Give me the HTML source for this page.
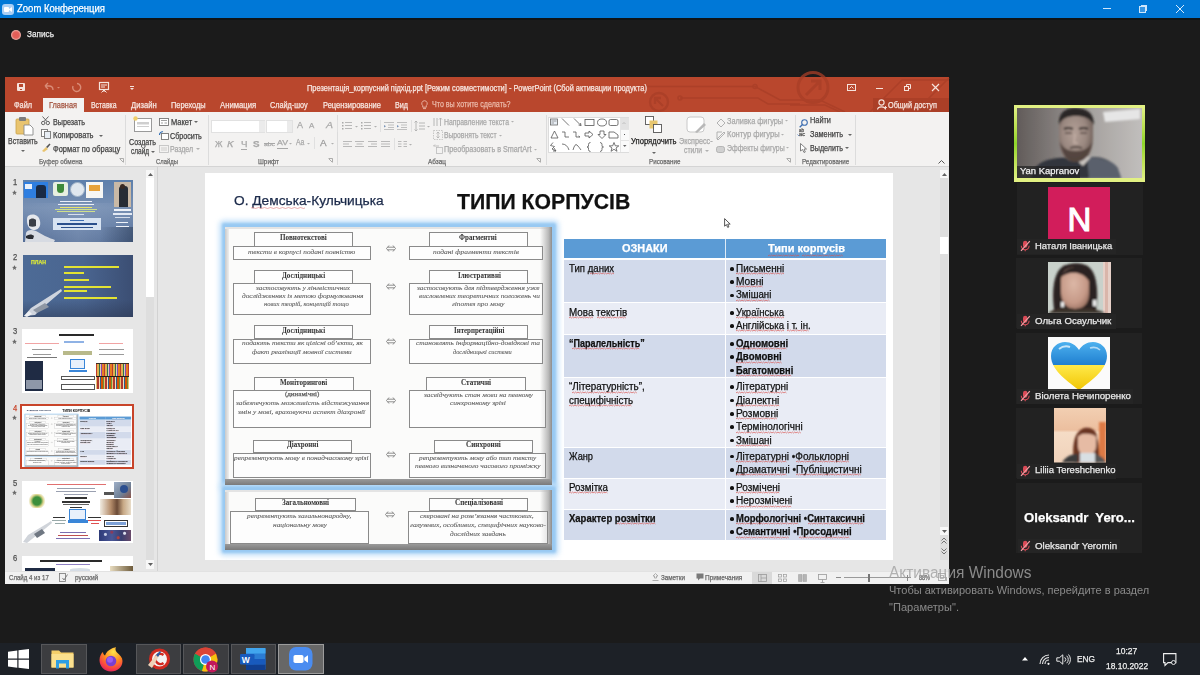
<!DOCTYPE html>
<html><head><meta charset="utf-8">
<style>
*{margin:0;padding:0;box-sizing:border-box}
html,body{width:1200px;height:675px;overflow:hidden;background:#1b1b1b;font-family:"Liberation Sans",sans-serif}
.a{position:absolute}
.t{position:absolute;white-space:nowrap;line-height:1;-webkit-text-stroke:0.25px currentColor}
svg{overflow:visible}
</style></head><body>
<div class="a" style="left:0px;top:0px;width:1200px;height:18px;background:#0078d7"></div>
<div class="a" style="left:0px;top:18px;width:1200px;height:1.5px;background:#0f1417"></div>
<div class="a" style="left:2px;top:3.5px;width:11.5px;height:11px;background:#a9cff5;border-radius:3px"></div>
<div class="a" style="left:4px;top:6.5px;width:5px;height:5px;background:#ffffff;border-radius:1px"></div>
<svg class="a" style="left:9px;top:6.5px;" width="3" height="5" viewBox="0 0 3 5"><path d="M0 2 L3 0 L3 5 L0 3Z" fill="#ffffff"/></svg>
<div class="t" style="left:17.00px;top:4.37px;font-size:10.20px;color:#ffffff;font-family:'Liberation Sans',sans-serif;transform:scaleX(0.9336);transform-origin:0 0;">Zoom Конференция</div>
<div class="a" style="left:1103px;top:8px;width:8px;height:1px;background:#cfe6fb"></div>
<div class="a" style="left:1139px;top:6px;width:7px;height:7px;border:1px solid #cfe6fb;background:rgba(160,205,248,.35)"></div>
<div class="a" style="left:1141px;top:5px;width:6px;height:1px;background:#cfe6fb"></div>
<div class="a" style="left:1146px;top:5px;width:1px;height:6px;background:#cfe6fb"></div>
<svg class="a" style="left:1176px;top:5px;" width="8" height="8" viewBox="0 0 8 8"><path d="M0 0 L8 8 M8 0 L0 8" stroke="#d6eafc" stroke-width="1"/></svg>
<div class="a" style="left:10.5px;top:29.5px;width:10px;height:10px;background:radial-gradient(circle at 50% 50%,#e25a55 0%,#e2625c 45%,#f3c4bd 75%,#7a3a36 100%);border-radius:50%"></div>
<div class="t" style="left:27.30px;top:29.88px;font-size:9.00px;color:#ececec;font-family:'Liberation Sans',sans-serif;transform:scaleX(0.9143);transform-origin:0 0;">Запись</div>
<div class="a" style="left:5px;top:77px;width:944px;height:507px;background:#e6e6e6"></div>
<div class="a" style="left:5px;top:77px;width:944px;height:35px;background:#b9472d"></div>
<svg class="a" style="left:640px;top:77px;" width="309" height="35" viewBox="0 0 309 35">
<g fill="none" stroke="#a83e27" stroke-width="1.6" opacity="0.75">
<path d="M0 9.5 H115 L140 23 H180 L205 35"/>
<path d="M40 21 H118 L128 27 H160"/>
<path d="M150 28 H185 L200 35"/>
<circle cx="173" cy="10.5" r="15" stroke-width="3"/>
<path d="M166 18 L180 4 M171 4 H180 V13" stroke-width="3"/>
<circle cx="19" cy="25" r="9" stroke-width="2.4"/>
<path d="M23 29 L15 21 M15 27 V21 H21" stroke-width="2.4"/>
<path d="M230 35 L262 3 H309"/>
<path d="M275 35 L309 1"/>
<circle cx="115" cy="9.5" r="2"/><circle cx="40" cy="21" r="2"/>
</g></svg>
<div class="a" style="left:17px;top:83px;width:8px;height:8px;background:#f6e3dc;border-radius:1px"></div>
<div class="a" style="left:19px;top:84px;width:4px;height:3px;background:#b9472d"></div>
<div class="a" style="left:19px;top:88px;width:4px;height:3px;background:#b9472d;border:1px solid #f6e3dc"></div>
<svg class="a" style="left:43px;top:82px;" width="18" height="10" viewBox="0 0 18 10"><path d="M2 4 H6 C9 4 10 6 10 8 M2 4 L5 1 M2 4 L5 7" fill="none" stroke="#d98c77" stroke-width="1.3"/><path d="M14 5 h3 l-1.5 1.5z" fill="#d98c77"/></svg>
<svg class="a" style="left:71px;top:82px;" width="10" height="10" viewBox="0 0 10 10"><path d="M6 1.5 A4 4 0 1 1 2 4" fill="none" stroke="#d98c77" stroke-width="1.4"/></svg>
<svg class="a" style="left:99px;top:82px;" width="10" height="11" viewBox="0 0 10 11"><rect x="0.5" y="0.5" width="9" height="7" fill="none" stroke="#f6e3dc" stroke-width="1.2"/><path d="M2 3 h6 M2 5 h4 M5 8 v2 M2.5 10.5 l2.5-2.5 2.5 2.5" stroke="#f6e3dc" stroke-width="1" fill="none"/></svg>
<div class="a" style="left:130px;top:86px;width:4px;height:1px;background:#f6e3dc"></div>
<svg class="a" style="left:130px;top:88px;" width="4" height="2" viewBox="0 0 4 2"><path d="M0 0 H4 L2 2Z" fill="#f6e3dc"/></svg>
<div class="t" style="left:307.00px;top:84.47px;font-size:8.30px;color:#f7e6e0;font-family:'Liberation Sans',sans-serif;transform:scaleX(0.8946);transform-origin:0 0;">Презентація_корпусний підхід.ppt [Режим совместимости] - PowerPoint (Сбой активации продукта)</div>
<svg class="a" style="left:847px;top:84px;" width="9" height="7" viewBox="0 0 9 7"><rect x="0.5" y="0.5" width="8" height="6" fill="none" stroke="#f6e3dc"/><path d="M2.5 4.5 L4.5 2.5 L6.5 4.5" stroke="#f6e3dc" fill="none"/></svg>
<div class="a" style="left:876px;top:88px;width:7px;height:1px;background:#f6e3dc"></div>
<svg class="a" style="left:904px;top:84px;" width="7" height="7" viewBox="0 0 7 7"><rect x="0.5" y="2.5" width="4" height="4" fill="none" stroke="#f6e3dc"/><path d="M2.5 2.5 V0.5 H6.5 V4.5 H4.5" fill="none" stroke="#f6e3dc"/></svg>
<svg class="a" style="left:932px;top:84px;" width="7" height="7" viewBox="0 0 7 7"><path d="M0 0 L7 7 M7 0 L0 7" stroke="#f6e3dc" stroke-width="1.2"/></svg>
<div class="a" style="left:873px;top:98px;width:76px;height:14px;background:#ab3f27"></div>
<svg class="a" style="left:877px;top:99px;" width="10" height="11" viewBox="0 0 10 11"><circle cx="4.5" cy="3.5" r="2.6" fill="none" stroke="#f6e3dc" stroke-width="1.1"/><path d="M0.5 10.5 C1 7 8 7 8.5 10.5" fill="none" stroke="#f6e3dc" stroke-width="1.1"/><path d="M7 8.5 h3 M8.5 7 v3" stroke="#f6e3dc" stroke-width="0.9"/></svg>
<div class="t" style="left:888.00px;top:101.02px;font-size:8.60px;color:#f7e6e0;font-family:'Liberation Sans',sans-serif;transform:scaleX(0.8480);transform-origin:0 0;">Общий доступ</div>
<div class="a" style="left:43px;top:98px;width:41px;height:14px;background:#f3f2f1"></div>
<div class="t" style="left:13.90px;top:100.97px;font-size:8.30px;color:#f7e6e0;font-family:'Liberation Sans',sans-serif;transform:scaleX(0.8870);transform-origin:0 0;">Файл</div>
<div class="t" style="left:49.30px;top:100.97px;font-size:8.30px;color:#a4533f;font-family:'Liberation Sans',sans-serif;transform:scaleX(0.8863);transform-origin:0 0;">Главная</div>
<div class="t" style="left:91.20px;top:100.97px;font-size:8.30px;color:#f7e6e0;font-family:'Liberation Sans',sans-serif;transform:scaleX(0.8298);transform-origin:0 0;">Вставка</div>
<div class="t" style="left:131.20px;top:100.97px;font-size:8.30px;color:#f7e6e0;font-family:'Liberation Sans',sans-serif;transform:scaleX(0.9176);transform-origin:0 0;">Дизайн</div>
<div class="t" style="left:171.20px;top:100.97px;font-size:8.30px;color:#f7e6e0;font-family:'Liberation Sans',sans-serif;transform:scaleX(0.8913);transform-origin:0 0;">Переходы</div>
<div class="t" style="left:220.30px;top:100.97px;font-size:8.30px;color:#f7e6e0;font-family:'Liberation Sans',sans-serif;transform:scaleX(0.9291);transform-origin:0 0;">Анимация</div>
<div class="t" style="left:270.40px;top:100.97px;font-size:8.30px;color:#f7e6e0;font-family:'Liberation Sans',sans-serif;transform:scaleX(0.8738);transform-origin:0 0;">Слайд-шоу</div>
<div class="t" style="left:322.50px;top:100.97px;font-size:8.30px;color:#f7e6e0;font-family:'Liberation Sans',sans-serif;transform:scaleX(0.9034);transform-origin:0 0;">Рецензирование</div>
<div class="t" style="left:394.50px;top:100.97px;font-size:8.30px;color:#f7e6e0;font-family:'Liberation Sans',sans-serif;transform:scaleX(0.8658);transform-origin:0 0;">Вид</div>
<svg class="a" style="left:421px;top:100px;" width="7" height="10" viewBox="0 0 7 10"><path d="M3.5 0.7 A2.8 2.8 0 0 1 5.3 5.6 V7.2 H1.7 V5.6 A2.8 2.8 0 0 1 3.5 0.7Z M2 8.6 H5" fill="none" stroke="#eab8a8" stroke-width="0.9"/></svg>
<div class="t" style="left:432.00px;top:100.47px;font-size:8.30px;color:#eab8a8;font-family:'Liberation Sans',sans-serif;transform:scaleX(0.8566);transform-origin:0 0;">Что вы хотите сделать?</div>
<div class="a" style="left:5px;top:112px;width:944px;height:55px;background:#f3f2f1;border-bottom:1px solid #d4d4d4"></div>
<div class="a" style="left:125px;top:115px;width:1px;height:50px;background:#dcdcdc"></div>
<div class="a" style="left:208px;top:115px;width:1px;height:50px;background:#dcdcdc"></div>
<div class="a" style="left:337px;top:115px;width:1px;height:50px;background:#dcdcdc"></div>
<div class="a" style="left:546px;top:115px;width:1px;height:50px;background:#dcdcdc"></div>
<div class="a" style="left:795px;top:115px;width:1px;height:50px;background:#dcdcdc"></div>
<div class="a" style="left:855px;top:115px;width:1px;height:50px;background:#dcdcdc"></div>
<div class="t" style="left:38.70px;top:158.27px;font-size:7.60px;color:#6a6a6a;font-family:'Liberation Sans',sans-serif;transform:scaleX(0.8385);transform-origin:0 0;">Буфер обмена</div>
<div class="t" style="left:155.90px;top:158.27px;font-size:7.60px;color:#6a6a6a;font-family:'Liberation Sans',sans-serif;transform:scaleX(0.7740);transform-origin:0 0;">Слайды</div>
<div class="t" style="left:257.50px;top:158.27px;font-size:7.60px;color:#6a6a6a;font-family:'Liberation Sans',sans-serif;transform:scaleX(0.8398);transform-origin:0 0;">Шрифт</div>
<div class="t" style="left:428.00px;top:158.27px;font-size:7.60px;color:#6a6a6a;font-family:'Liberation Sans',sans-serif;transform:scaleX(0.8443);transform-origin:0 0;">Абзац</div>
<div class="t" style="left:649.40px;top:158.27px;font-size:7.60px;color:#6a6a6a;font-family:'Liberation Sans',sans-serif;transform:scaleX(0.8204);transform-origin:0 0;">Рисование</div>
<div class="t" style="left:801.70px;top:158.27px;font-size:7.60px;color:#6a6a6a;font-family:'Liberation Sans',sans-serif;transform:scaleX(0.8170);transform-origin:0 0;">Редактирование</div>
<svg class="a" style="left:119px;top:158px;" width="5" height="5" viewBox="0 0 5 5"><path d="M0.5 0.5 H4.5 V4.5 M1 1 L4 4" fill="none" stroke="#9a9a9a" stroke-width="0.8"/></svg>
<svg class="a" style="left:328px;top:158px;" width="5" height="5" viewBox="0 0 5 5"><path d="M0.5 0.5 H4.5 V4.5 M1 1 L4 4" fill="none" stroke="#9a9a9a" stroke-width="0.8"/></svg>
<svg class="a" style="left:536px;top:158px;" width="5" height="5" viewBox="0 0 5 5"><path d="M0.5 0.5 H4.5 V4.5 M1 1 L4 4" fill="none" stroke="#9a9a9a" stroke-width="0.8"/></svg>
<svg class="a" style="left:786px;top:158px;" width="5" height="5" viewBox="0 0 5 5"><path d="M0.5 0.5 H4.5 V4.5 M1 1 L4 4" fill="none" stroke="#9a9a9a" stroke-width="0.8"/></svg>
<svg class="a" style="left:15px;top:116px;" width="20" height="20" viewBox="0 0 20 20"><rect x="1" y="3" width="13" height="15" rx="1" fill="#e9c46f" stroke="#c9a24a" stroke-width="0.8"/><rect x="4" y="1" width="7" height="4" rx="1" fill="#7d7d7d"/><path d="M9 9 H15 L18 12 V19 H9Z" fill="#fff" stroke="#8a8a8a" stroke-width="0.9"/></svg>
<div class="t" style="left:8.30px;top:138.26px;font-size:8.20px;color:#444444;font-family:'Liberation Sans',sans-serif;transform:scaleX(0.8545);transform-origin:0 0;">Вставить</div>
<svg class="a" style="left:21px;top:150px;" width="4" height="2" viewBox="0 0 4 2"><path d="M0 0 H4 L2 2Z" fill="#666"/></svg>
<svg class="a" style="left:41px;top:116px;" width="9" height="9" viewBox="0 0 9 9"><circle cx="2.2" cy="7" r="1.7" fill="none" stroke="#555" stroke-width="0.9"/><circle cx="6.8" cy="7" r="1.7" fill="none" stroke="#555" stroke-width="0.9"/><path d="M3 5.5 L7.5 0.5 M6 5.5 L1.5 0.5" stroke="#555" stroke-width="0.9"/></svg>
<div class="t" style="left:52.70px;top:118.56px;font-size:8.20px;color:#444444;font-family:'Liberation Sans',sans-serif;transform:scaleX(0.8774);transform-origin:0 0;">Вырезать</div>
<svg class="a" style="left:41px;top:129px;" width="10" height="10" viewBox="0 0 10 10"><rect x="0.5" y="0.5" width="6" height="7" fill="#fff" stroke="#777" stroke-width="0.9"/><rect x="3.5" y="2.5" width="6" height="7" fill="#e8eef5" stroke="#777" stroke-width="0.9"/></svg>
<div class="t" style="left:52.70px;top:132.26px;font-size:8.20px;color:#444444;font-family:'Liberation Sans',sans-serif;transform:scaleX(0.9196);transform-origin:0 0;">Копировать</div>
<svg class="a" style="left:99px;top:135px;" width="4" height="2" viewBox="0 0 4 2"><path d="M0 0 H4 L2 2Z" fill="#666"/></svg>
<svg class="a" style="left:41px;top:143px;" width="10" height="9" viewBox="0 0 10 9"><path d="M1 8 L5 4 L7 6 L3 9Z" fill="#e9c46f"/><path d="M5 4 L8.5 0.5 L9.5 1.5 L6.5 5" fill="#555"/></svg>
<div class="t" style="left:52.70px;top:146.26px;font-size:8.20px;color:#444444;font-family:'Liberation Sans',sans-serif;transform:scaleX(0.9153);transform-origin:0 0;">Формат по образцу</div>
<svg class="a" style="left:133px;top:116px;" width="20" height="17" viewBox="0 0 20 17"><rect x="1.5" y="2.5" width="17" height="13" fill="#fff" stroke="#9a9a9a" stroke-width="1"/><rect x="4" y="6" width="12" height="2.5" fill="#cfcfcf"/><rect x="4" y="10" width="12" height="1" fill="#cfcfcf"/><circle cx="2.5" cy="2.5" r="2.2" fill="#f0cf6a"/></svg>
<div class="t" style="left:128.80px;top:138.56px;font-size:8.20px;color:#444444;font-family:'Liberation Sans',sans-serif;transform:scaleX(0.8696);transform-origin:0 0;">Создать</div>
<div class="t" style="left:130.90px;top:148.36px;font-size:8.20px;color:#444444;font-family:'Liberation Sans',sans-serif;transform:scaleX(0.7935);transform-origin:0 0;">слайд</div>
<svg class="a" style="left:151px;top:151.3px;" width="4" height="2" viewBox="0 0 4 2"><path d="M0 0 H4 L2 2Z" fill="#666"/></svg>
<svg class="a" style="left:159px;top:118px;" width="10" height="8" viewBox="0 0 10 8"><rect x="0.5" y="0.5" width="9" height="7" fill="#fff" stroke="#777" stroke-width="0.9"/><path d="M2 2.5 H8 M2 5 H4 M5.5 5 H8" stroke="#888" stroke-width="0.8"/></svg>
<div class="t" style="left:170.80px;top:118.66px;font-size:8.20px;color:#444444;font-family:'Liberation Sans',sans-serif;transform:scaleX(0.9135);transform-origin:0 0;">Макет</div>
<svg class="a" style="left:194px;top:121.3px;" width="4" height="2" viewBox="0 0 4 2"><path d="M0 0 H4 L2 2Z" fill="#666"/></svg>
<svg class="a" style="left:159px;top:131px;" width="10" height="9" viewBox="0 0 10 9"><rect x="2.5" y="2.5" width="7" height="6" fill="#fff" stroke="#777" stroke-width="0.9"/><path d="M0.5 4 A3 3 0 0 1 4 0.8" fill="none" stroke="#2f6db5" stroke-width="1.1"/></svg>
<div class="t" style="left:170.40px;top:132.56px;font-size:8.20px;color:#444444;font-family:'Liberation Sans',sans-serif;transform:scaleX(0.8752);transform-origin:0 0;">Сбросить</div>
<svg class="a" style="left:159px;top:145px;" width="10" height="8" viewBox="0 0 10 8"><rect x="0.5" y="0.5" width="9" height="7" fill="none" stroke="#c4c4c4" stroke-width="0.9"/><path d="M2 3 H8 M2 5 H8" stroke="#c4c4c4" stroke-width="0.8"/></svg>
<div class="t" style="left:170.40px;top:145.76px;font-size:8.20px;color:#a8a8a8;font-family:'Liberation Sans',sans-serif;transform:scaleX(0.8523);transform-origin:0 0;">Раздел</div>
<svg class="a" style="left:196px;top:148px;" width="4" height="2" viewBox="0 0 4 2"><path d="M0 0 H4 L2 2Z" fill="#b0b0b0"/></svg>
<div class="a" style="left:211px;top:119.5px;width:54px;height:13px;background:#fff;border:1px solid #e1e1e1"></div>
<div class="a" style="left:259px;top:120.5px;width:5.5px;height:11px;background:#ebebeb"></div>
<div class="a" style="left:266px;top:119.5px;width:26.5px;height:13px;background:#fff;border:1px solid #e1e1e1"></div>
<div class="a" style="left:286.5px;top:120.5px;width:5.5px;height:11px;background:#ebebeb"></div>
<div class="t" style="left:296.50px;top:121.38px;font-size:9.00px;color:#a8a8a8;font-family:'Liberation Sans',sans-serif;transform:scaleX(0.9995);transform-origin:0 0;">A</div>
<div class="t" style="left:308.70px;top:122.23px;font-size:8.00px;color:#a8a8a8;font-family:'Liberation Sans',sans-serif;transform:scaleX(0.9932);transform-origin:0 0;">A</div>
<div class="t" style="left:326.00px;top:121.38px;font-size:9.00px;color:#a8a8a8;font-family:'Liberation Sans',sans-serif;transform:scaleX(1.1660);transform-origin:0 0;font-style:italic;">A</div>
<div class="t" style="left:214.50px;top:139.55px;font-size:8.80px;color:#a8a8a8;font-family:'Liberation Sans',sans-serif;transform:scaleX(0.9230);transform-origin:0 0;">Ж</div>
<div class="t" style="left:226.50px;top:139.55px;font-size:8.80px;color:#a8a8a8;font-family:'Liberation Sans',sans-serif;font-style:italic;transform:scaleX(1.2533);transform-origin:0 0;">К</div>
<div class="t" style="left:240.50px;top:139.55px;font-size:8.80px;color:#a8a8a8;font-family:'Liberation Sans',sans-serif;transform:scaleX(1.1083);transform-origin:0 0;">Ч</div>
<div class="t" style="left:253.00px;top:139.55px;font-size:8.80px;color:#a8a8a8;font-family:'Liberation Sans',sans-serif;font-weight:bold;transform:scaleX(1.1073);transform-origin:0 0;">S</div>
<div class="a" style="left:241px;top:148.5px;width:6px;height:0.8px;background:#a8a8a8"></div>
<div class="t" style="left:263.50px;top:140.75px;font-size:6.20px;color:#a8a8a8;font-family:'Liberation Sans',sans-serif;transform:scaleX(1.1004);transform-origin:0 0;">abc</div>
<div class="a" style="left:263.5px;top:143px;width:11px;height:0.7px;background:#a8a8a8"></div>
<div class="t" style="left:276.50px;top:138.91px;font-size:7.20px;color:#a8a8a8;font-family:'Liberation Sans',sans-serif;transform:scaleX(1.2127);transform-origin:0 0;">AV</div>
<div class="a" style="left:276.5px;top:147.5px;width:11px;height:0.7px;background:#a8a8a8"></div>
<div class="t" style="left:295.60px;top:139.46px;font-size:8.20px;color:#a8a8a8;font-family:'Liberation Sans',sans-serif;transform:scaleX(0.8375);transform-origin:0 0;">Aa</div>
<div class="a" style="left:314.4px;top:137px;width:1px;height:12px;background:#e0e0e0"></div>
<div class="t" style="left:319.70px;top:137.76px;font-size:9.50px;color:#9a9a9a;font-family:'Liberation Sans',sans-serif;transform:scaleX(1.0415);transform-origin:0 0;">A</div>
<svg class="a" style="left:289px;top:143.3px;" width="3" height="1.5" viewBox="0 0 3 1.5"><path d="M0 0 H3 L1.5 1.5Z" fill="#b0b0b0"/></svg>
<svg class="a" style="left:307px;top:143.3px;" width="3" height="1.5" viewBox="0 0 3 1.5"><path d="M0 0 H3 L1.5 1.5Z" fill="#b0b0b0"/></svg>
<svg class="a" style="left:331px;top:143.3px;" width="3" height="1.5" viewBox="0 0 3 1.5"><path d="M0 0 H3 L1.5 1.5Z" fill="#b0b0b0"/></svg>
<svg class="a" style="left:342px;top:122px;" width="10" height="8" viewBox="0 0 10 8"><rect x="0" y="0" width="1.5" height="1.5" fill="#a9a9a9"/><rect x="3" y="0" width="7" height="1" fill="#b9b9b9"/><rect x="0" y="3" width="1.5" height="1.5" fill="#a9a9a9"/><rect x="3" y="3" width="7" height="1" fill="#b9b9b9"/><rect x="0" y="6" width="1.5" height="1.5" fill="#a9a9a9"/><rect x="3" y="6" width="7" height="1" fill="#b9b9b9"/></svg>
<svg class="a" style="left:361px;top:122px;" width="10" height="8" viewBox="0 0 10 8"><rect x="0" y="0" width="1.5" height="1.5" fill="#a9a9a9"/><rect x="3" y="0" width="7" height="1" fill="#b9b9b9"/><rect x="0" y="3" width="1.5" height="1.5" fill="#a9a9a9"/><rect x="3" y="3" width="7" height="1" fill="#b9b9b9"/><rect x="0" y="6" width="1.5" height="1.5" fill="#a9a9a9"/><rect x="3" y="6" width="7" height="1" fill="#b9b9b9"/></svg>
<svg class="a" style="left:355px;top:126px;" width="3" height="1.5" viewBox="0 0 3 1.5"><path d="M0 0 H3 L1.5 1.5Z" fill="#b0b0b0"/></svg>
<svg class="a" style="left:374px;top:126px;" width="3" height="1.5" viewBox="0 0 3 1.5"><path d="M0 0 H3 L1.5 1.5Z" fill="#b0b0b0"/></svg>
<svg class="a" style="left:384.4px;top:122px;" width="10" height="8" viewBox="0 0 10 8"><path d="M0 0.5 H10 M4 3 H10 M4 5.5 H10 M0 7.5 H10" stroke="#b9b9b9" stroke-width="0.9"/><path d="M0 3 L2 4.3 L0 5.6Z" fill="#7a95b8"/></svg>
<svg class="a" style="left:397px;top:122px;" width="10" height="8" viewBox="0 0 10 8"><path d="M0 0.5 H10 M4 3 H10 M4 5.5 H10 M0 7.5 H10" stroke="#b9b9b9" stroke-width="0.9"/><path d="M0 3 L2 4.3 L0 5.6Z" fill="#7a95b8"/></svg>
<div class="a" style="left:410.5px;top:120px;width:1px;height:12px;background:#e0e0e0"></div>
<div class="a" style="left:380px;top:120px;width:1px;height:12px;background:#e0e0e0"></div>
<div class="a" style="left:337px;top:120px;width:1px;height:12px;background:#e0e0e0"></div>
<svg class="a" style="left:414px;top:120px;" width="11" height="12" viewBox="0 0 11 12"><path d="M2 1 V11 M0.5 2.5 L2 1 L3.5 2.5 M0.5 9.5 L2 11 L3.5 9.5 M5 3 H11 M5 6 H11 M5 9 H11" stroke="#b0b0b0" stroke-width="0.9" fill="none"/></svg>
<svg class="a" style="left:427px;top:126px;" width="3" height="1.5" viewBox="0 0 3 1.5"><path d="M0 0 H3 L1.5 1.5Z" fill="#b0b0b0"/></svg>
<svg class="a" style="left:342.5px;top:141px;" width="8.5" height="6.5" viewBox="0 0 8.5 6.5"><path d="M0 0.5 H9 M0 3 H6 M0 5.5 H9" stroke="#b9b9b9" stroke-width="1"/></svg>
<svg class="a" style="left:355px;top:141px;" width="8.5" height="6.5" viewBox="0 0 8.5 6.5"><path d="M0 0.5 H9 M1.5 3 H7.5 M0 5.5 H9" stroke="#b9b9b9" stroke-width="1"/></svg>
<svg class="a" style="left:368px;top:141px;" width="8.5" height="6.5" viewBox="0 0 8.5 6.5"><path d="M0 0.5 H9 M3 3 H9 M0 5.5 H9" stroke="#b9b9b9" stroke-width="1"/></svg>
<svg class="a" style="left:380.5px;top:141px;" width="8.5" height="6.5" viewBox="0 0 8.5 6.5"><path d="M0 0.5 H9 M0 3 H9 M0 5.5 H9" stroke="#b9b9b9" stroke-width="1"/></svg>
<div class="a" style="left:393.5px;top:138px;width:1px;height:12px;background:#e0e0e0"></div>
<svg class="a" style="left:397.5px;top:141px;" width="8.5" height="6.5" viewBox="0 0 8.5 6.5"><path d="M0 0.5 H3.5 M5.5 0.5 H9 M0 3 H3.5 M5.5 3 H9 M0 5.5 H3.5 M5.5 5.5 H9" stroke="#b9b9b9" stroke-width="1"/></svg>
<svg class="a" style="left:409px;top:144px;" width="3" height="1.5" viewBox="0 0 3 1.5"><path d="M0 0 H3 L1.5 1.5Z" fill="#b0b0b0"/></svg>
<svg class="a" style="left:433px;top:117px;" width="10" height="10" viewBox="0 0 10 10"><path d="M1 1 V9 M4 1 V9 M7.5 9 V1 M6 2.5 L7.5 1 L9 2.5" stroke="#b0b0b0" stroke-width="0.9" fill="none"/></svg>
<div class="t" style="left:444.40px;top:118.86px;font-size:8.20px;color:#a8a8a8;font-family:'Liberation Sans',sans-serif;transform:scaleX(0.8375);transform-origin:0 0;">Направление текста</div>
<svg class="a" style="left:511px;top:121px;" width="3" height="1.5" viewBox="0 0 3 1.5"><path d="M0 0 H3 L1.5 1.5Z" fill="#b0b0b0"/></svg>
<svg class="a" style="left:433px;top:130px;" width="10" height="10" viewBox="0 0 10 10"><rect x="0.5" y="0.5" width="9" height="9" fill="none" stroke="#bbb" stroke-width="0.8" stroke-dasharray="1.5 1"/><path d="M5 2 V8 M3.5 3.5 L5 2 L6.5 3.5 M3.5 6.5 L5 8 L6.5 6.5" stroke="#b0b0b0" stroke-width="0.8" fill="none"/></svg>
<div class="t" style="left:444.40px;top:132.06px;font-size:8.20px;color:#a8a8a8;font-family:'Liberation Sans',sans-serif;transform:scaleX(0.8235);transform-origin:0 0;">Выровнять текст</div>
<svg class="a" style="left:499px;top:134.5px;" width="3" height="1.5" viewBox="0 0 3 1.5"><path d="M0 0 H3 L1.5 1.5Z" fill="#b0b0b0"/></svg>
<svg class="a" style="left:433px;top:144px;" width="10" height="10" viewBox="0 0 10 10"><rect x="3.5" y="3.5" width="6" height="6" fill="none" stroke="#bbb" stroke-width="0.8"/><path d="M0.5 2 H6 M0.5 2 L2 0.5" stroke="#b0b0b0" stroke-width="0.8" fill="none"/></svg>
<div class="t" style="left:444.40px;top:145.86px;font-size:8.20px;color:#a8a8a8;font-family:'Liberation Sans',sans-serif;transform:scaleX(0.8807);transform-origin:0 0;">Преобразовать в SmartArt</div>
<svg class="a" style="left:533.5px;top:148.5px;" width="3" height="1.5" viewBox="0 0 3 1.5"><path d="M0 0 H3 L1.5 1.5Z" fill="#b0b0b0"/></svg>
<div class="a" style="left:548px;top:116.5px;width:81px;height:36px;background:#fff;border:1px solid #dcdcdc"></div>
<div class="a" style="left:620px;top:117.5px;width:8.5px;height:34px;background:#fafafa;border-left:1px solid #e4e4e4"></div>
<div class="a" style="left:620.5px;top:117.5px;width:8px;height:11px;background:#e2e2e2"></div>
<svg class="a" style="left:622px;top:121.5px;" width="4" height="2.5" viewBox="0 0 4 2.5"><path d="M0.5 2 L2 0.5 L3.5 2" fill="none" stroke="#b5b5b5" stroke-width="0.8"/></svg>
<div class="a" style="left:620.5px;top:128.5px;width:8px;height:0.8px;background:#e4e4e4"></div>
<div class="a" style="left:620.5px;top:139.5px;width:8px;height:0.8px;background:#e4e4e4"></div>
<div class="a" style="left:623.8px;top:133.5px;width:1.2px;height:1.2px;background:#555"></div>
<svg class="a" style="left:622.5px;top:145px;" width="3.5" height="2" viewBox="0 0 3.5 2"><path d="M0 0 H3.5 L1.75 2Z" fill="#666"/></svg>
<svg class="a" style="left:549px;top:117px;" width="70" height="35" viewBox="0 0 70 35">
<rect x="1.5" y="2" width="7" height="6" fill="#e8eef5" stroke="#666" stroke-width="0.8"/><path d="M2.5 4 H7.5 M2.5 6 H5" stroke="#666" stroke-width="0.6"/>
<path d="M13 1.5 L20 8.5" stroke="#555" stroke-width="0.8"/>
<path d="M25 1.5 L32 8.5 M32 8.5 L29.5 8 M32 8.5 L31.5 6" stroke="#555" stroke-width="0.8" fill="none"/>
<rect x="36" y="2.5" width="9" height="6" fill="none" stroke="#555" stroke-width="0.8"/>
<ellipse cx="53" cy="5.5" rx="4.5" ry="3.5" fill="none" stroke="#555" stroke-width="0.8"/>
<rect x="60" y="2.5" width="9" height="6" rx="1.5" fill="none" stroke="#555" stroke-width="0.8"/>
<path d="M2 21 L5.5 14 L9 21Z" fill="none" stroke="#555" stroke-width="0.8"/>
<path d="M13 15 H16 V20 H20" fill="none" stroke="#555" stroke-width="0.8"/>
<path d="M24 15 H27 V20 H31 M31 20 L29.5 19" fill="none" stroke="#555" stroke-width="0.8"/>
<path d="M36 16 H40 V14 L44 17.5 L40 21 V19 H36Z" fill="none" stroke="#555" stroke-width="0.8"/>
<path d="M51 14 H55 V17.5 H57 L53 21.5 L49 17.5 H51Z" fill="none" stroke="#555" stroke-width="0.8"/>
<path d="M60 15 H65 L69 18 V21 H60Z" fill="none" stroke="#555" stroke-width="0.8"/>
<path d="M4 25.5 L1.5 28.5 L5.5 29.5 L3 32 L7 34 M5 31 L7 34 L4 34" fill="none" stroke="#555" stroke-width="0.8"/>
<path d="M13 27 Q18 27 20 33" fill="none" stroke="#555" stroke-width="0.8"/>
<path d="M24 33 Q26 26 28 28 Q30 30 32 33" fill="none" stroke="#555" stroke-width="0.8"/>
<path d="M41.5 25.5 Q39.5 25.5 39.5 27.5 V29 Q39.5 30 38 30 Q39.5 30 39.5 31 V32.5 Q39.5 34.5 41.5 34.5" fill="none" stroke="#555" stroke-width="0.8"/>
<path d="M51 25.5 Q53 25.5 53 27.5 V29 Q53 30 54.5 30 Q53 30 53 31 V32.5 Q53 34.5 51 34.5" fill="none" stroke="#555" stroke-width="0.8"/>
<path d="M65 25.5 L66.3 28.8 L69.8 28.9 L67 31 L68 34.3 L65 32.3 L62 34.3 L63 31 L60.2 28.9 L63.7 28.8Z" fill="none" stroke="#555" stroke-width="0.8"/>
</svg>
<svg class="a" style="left:645px;top:116px;" width="18" height="17" viewBox="0 0 18 17"><rect x="0.5" y="0.5" width="8" height="8" fill="#fff" stroke="#555" stroke-width="0.9"/><rect x="4.5" y="4.5" width="8" height="8" fill="#e7c66f"/><rect x="8.5" y="8.5" width="8" height="8" fill="#fff" stroke="#555" stroke-width="0.9"/></svg>
<div class="t" style="left:631.00px;top:138.36px;font-size:8.20px;color:#1e1e1e;font-family:'Liberation Sans',sans-serif;transform:scaleX(0.9324);transform-origin:0 0;">Упорядочить</div>
<svg class="a" style="left:652px;top:151.5px;" width="4" height="2" viewBox="0 0 4 2"><path d="M0 0 H4 L2 2Z" fill="#666"/></svg>
<svg class="a" style="left:686px;top:116px;" width="22" height="18" viewBox="0 0 22 18"><rect x="1" y="1" width="17" height="15" rx="3" fill="#fff" stroke="#c8c8c8" stroke-width="1"/><path d="M9 16 L18 7 L20 9 L11 17Z" fill="#b8b8b8"/></svg>
<div class="t" style="left:678.70px;top:138.36px;font-size:8.20px;color:#a8a8a8;font-family:'Liberation Sans',sans-serif;transform:scaleX(0.8804);transform-origin:0 0;">Экспресс-</div>
<div class="t" style="left:684.00px;top:147.26px;font-size:8.20px;color:#a8a8a8;font-family:'Liberation Sans',sans-serif;transform:scaleX(0.8256);transform-origin:0 0;">стили</div>
<svg class="a" style="left:705px;top:150.3px;" width="4" height="2" viewBox="0 0 4 2"><path d="M0 0 H4 L2 2Z" fill="#b0b0b0"/></svg>
<svg class="a" style="left:716px;top:118.3px;" width="10" height="9" viewBox="0 0 10 9"><path d="M1 5 L5 1 L9 5 L5 9Z" fill="none" stroke="#aaa" stroke-width="0.9"/></svg>
<div class="t" style="left:726.80px;top:117.66px;font-size:8.20px;color:#a8a8a8;font-family:'Liberation Sans',sans-serif;transform:scaleX(0.8975);transform-origin:0 0;">Заливка фигуры</div>
<svg class="a" style="left:785px;top:120.3px;" width="3" height="1.5" viewBox="0 0 3 1.5"><path d="M0 0 H3 L1.5 1.5Z" fill="#b0b0b0"/></svg>
<svg class="a" style="left:716px;top:131.3px;" width="10" height="9" viewBox="0 0 10 9"><path d="M1 8 L8 1 L9 2 L2 9Z M1 1 H6 M1 1 V8" fill="none" stroke="#aaa" stroke-width="0.9"/></svg>
<div class="t" style="left:726.80px;top:131.06px;font-size:8.20px;color:#a8a8a8;font-family:'Liberation Sans',sans-serif;transform:scaleX(0.9191);transform-origin:0 0;">Контур фигуры</div>
<svg class="a" style="left:781px;top:133.8px;" width="3" height="1.5" viewBox="0 0 3 1.5"><path d="M0 0 H3 L1.5 1.5Z" fill="#b0b0b0"/></svg>
<svg class="a" style="left:716px;top:145.3px;" width="10" height="8" viewBox="0 0 10 8"><rect x="0.5" y="1.5" width="8" height="6" rx="2" fill="#d0d0d0" stroke="#aaa" stroke-width="0.8"/></svg>
<div class="t" style="left:726.80px;top:144.56px;font-size:8.20px;color:#a8a8a8;font-family:'Liberation Sans',sans-serif;transform:scaleX(0.8444);transform-origin:0 0;">Эффекты фигуры</div>
<svg class="a" style="left:786px;top:147.3px;" width="3" height="1.5" viewBox="0 0 3 1.5"><path d="M0 0 H3 L1.5 1.5Z" fill="#b0b0b0"/></svg>
<svg class="a" style="left:799px;top:118.5px;" width="9" height="9" viewBox="0 0 9 9"><circle cx="5.5" cy="3.5" r="2.8" fill="none" stroke="#3c6db0" stroke-width="1.1"/><path d="M3.5 5.5 L0.7 8.3" stroke="#3c6db0" stroke-width="1.3"/></svg>
<div class="t" style="left:810.00px;top:117.26px;font-size:8.20px;color:#444444;font-family:'Liberation Sans',sans-serif;transform:scaleX(0.8975);transform-origin:0 0;">Найти</div>
<div class="t" style="left:799.00px;top:128.69px;font-size:4.50px;color:#555;font-family:'Liberation Sans',sans-serif;transform:scaleX(0.9989);transform-origin:0 0;">ab</div>
<div class="t" style="left:799.00px;top:133.19px;font-size:4.50px;color:#555;font-family:'Liberation Sans',sans-serif;transform:scaleX(1.2624);transform-origin:0 0;">ac</div>
<svg class="a" style="left:797px;top:133.5px;" width="3" height="3" viewBox="0 0 3 3"><path d="M0.5 0.5 L2 2" stroke="#3c6db0" stroke-width="0.7"/></svg>
<div class="t" style="left:810.00px;top:130.86px;font-size:8.20px;color:#444444;font-family:'Liberation Sans',sans-serif;transform:scaleX(0.8956);transform-origin:0 0;">Заменить</div>
<svg class="a" style="left:847.5px;top:133.5px;" width="4" height="2" viewBox="0 0 4 2"><path d="M0 0 H4 L2 2Z" fill="#666"/></svg>
<svg class="a" style="left:800px;top:142.5px;" width="7" height="10" viewBox="0 0 7 10"><path d="M0.5 0.5 L0.5 8 L2.5 6.5 L4 9.5 L5.3 9 L4 6 L6.5 6Z" fill="#fff" stroke="#666" stroke-width="0.8"/></svg>
<div class="t" style="left:810.00px;top:144.56px;font-size:8.20px;color:#444444;font-family:'Liberation Sans',sans-serif;transform:scaleX(0.8723);transform-origin:0 0;">Выделить</div>
<svg class="a" style="left:845px;top:147.0px;" width="4" height="2" viewBox="0 0 4 2"><path d="M0 0 H4 L2 2Z" fill="#666"/></svg>
<svg class="a" style="left:938px;top:160px;" width="7" height="4" viewBox="0 0 7 4"><path d="M0.5 3.5 L3.5 0.5 L6.5 3.5" fill="none" stroke="#555" stroke-width="1"/></svg>
<div class="a" style="left:157px;top:167px;width:1px;height:404px;background:#d2d2d2"></div>
<div class="a" style="left:146px;top:170px;width:8px;height:390px;background:#dedede"></div>
<div class="a" style="left:146px;top:170px;width:8px;height:8px;background:#f7f7f7"></div>
<svg class="a" style="left:147.5px;top:172.5px;" width="5" height="3" viewBox="0 0 5 3"><path d="M0 3 L2.5 0 L5 3Z" fill="#606060"/></svg>
<div class="a" style="left:146px;top:178px;width:8px;height:119px;background:#ffffff"></div>
<div class="a" style="left:146px;top:560px;width:8px;height:9px;background:#f7f7f7"></div>
<svg class="a" style="left:147.5px;top:563px;" width="5" height="3" viewBox="0 0 5 3"><path d="M0 0 L2.5 3 L5 0Z" fill="#606060"/></svg>
<div class="a" style="left:0;top:0;width:160px;height:675px;filter:blur(0.3px)">
<div class="t" style="left:12.80px;top:178.30px;font-size:8.50px;color:#505050;font-family:'Liberation Sans',sans-serif;transform:scaleX(0.8884);transform-origin:0 0;">1</div>
<svg class="a" style="left:12px;top:189.5px;" width="5" height="5" viewBox="0 0 5 5"><path d="M2.5 0 L3.2 1.8 L5 1.9 L3.6 3 L4.1 4.9 L2.5 3.9 L0.9 4.9 L1.4 3 L0 1.9 L1.8 1.8Z" fill="#6a6a6a"/></svg>
<div class="a" style="left:23px;top:180px;width:110px;height:62px;background:linear-gradient(180deg,#5d7fab 0%,#7890b3 45%,#667fa6 75%,#556e96 100%)"></div>
<div class="a" style="left:23px;top:203px;width:110px;height:39px;background:linear-gradient(90deg,rgba(160,180,210,.0),rgba(150,170,200,.35) 50%,rgba(60,80,110,.0))"></div>
<div class="a" style="left:24px;top:182px;width:24px;height:16px;background:#2e7ee0"></div>
<div class="a" style="left:36px;top:185px;width:10px;height:13px;background:#1a2a44;border-radius:3px 3px 0 0"></div>
<div class="a" style="left:25px;top:184px;width:7px;height:5px;background:#e8f0fb"></div>
<div class="a" style="left:53px;top:182px;width:15px;height:14px;background:#e7efe0;border-radius:2px"></div>
<div class="a" style="left:57px;top:184px;width:7px;height:9px;background:#3e8a3a;border-radius:0 0 4px 4px"></div>
<div class="a" style="left:70px;top:182px;width:15px;height:15px;background:#dfe7ef;border-radius:50%;border:1px solid #9fb3c8"></div>
<div class="a" style="left:86px;top:182px;width:17px;height:16px;background:#f7f7f4"></div>
<div class="a" style="left:89px;top:185px;width:11px;height:6px;background:#e8a33a"></div>
<div class="a" style="left:114px;top:182px;width:17px;height:25px;background:#c9b9a6"></div>
<div class="a" style="left:119px;top:186px;width:9px;height:21px;background:#262c35;border-radius:3px 3px 0 0"></div>
<div class="a" style="left:120px;top:184px;width:5px;height:5px;background:#3a2a22;border-radius:50%"></div>
<div class="a" style="left:60px;top:201px;width:32px;height:1.3px;background:#e9eef7"></div>
<div class="a" style="left:58px;top:203.5px;width:36px;height:1.3px;background:#e9eef7"></div>
<div class="a" style="left:60px;top:206.5px;width:32px;height:1.6px;background:#e8e46a"></div>
<div class="a" style="left:55px;top:209px;width:42px;height:1.2px;background:#cfe08a"></div>
<div class="a" style="left:57px;top:211px;width:38px;height:1.2px;background:#cfe08a"></div>
<div class="a" style="left:68px;top:213.5px;width:16px;height:1px;background:#d8e0ec"></div>
<div class="a" style="left:53px;top:218px;width:48px;height:12px;background:#d7e3f2"></div>
<div class="a" style="left:70px;top:219.5px;width:14px;height:1.5px;background:#3a6bb0"></div>
<div class="a" style="left:57px;top:223px;width:40px;height:1.5px;background:#2a4f8c"></div>
<div class="a" style="left:61px;top:226.5px;width:32px;height:1.5px;background:#2a4f8c"></div>
<div class="a" style="left:114px;top:209px;width:17px;height:2px;background:#eef2f8"></div>
<div class="a" style="left:113px;top:213px;width:19px;height:1.5px;background:#e3e9f3"></div>
<div class="a" style="left:115px;top:217px;width:15px;height:1px;background:#d4dcea"></div>
<div class="a" style="left:116px;top:222px;width:12px;height:1.2px;background:#eef2f8"></div>
<div class="a" style="left:116px;top:226px;width:13px;height:1.2px;background:#eef2f8"></div>
<svg class="a" style="left:23px;top:214px;" width="32" height="28" viewBox="0 0 32 28"><path d="M5 2 C10 -1 16 1 17 7 C18 12 16 15 12 16 L10 16 C6 15 4 11 4 7 C4 5 4 3 5 2Z" fill="#e4e7ec"/><path d="M6 6 C8 4 11 4 13 6 L13 12 C11 13 8 13 6 12Z" fill="#3a3f48"/><path d="M2 28 L3 19 C4 16 8 15 13 17 L22 22 C26 24 30 25 32 26 L31 28Z" fill="#d7dbe2"/><path d="M3 22 C6 20 9 20 11 22 L10 25 C7 25 4 25 3 24Z" fill="#2a2d33"/></svg>
<div class="a" style="left:100px;top:227px;width:33px;height:15px;background:linear-gradient(90deg,rgba(40,55,80,0),rgba(40,55,80,.5))"></div>
<div class="t" style="left:12.80px;top:253.30px;font-size:8.50px;color:#505050;font-family:'Liberation Sans',sans-serif;transform:scaleX(0.8884);transform-origin:0 0;">2</div>
<svg class="a" style="left:12px;top:264.5px;" width="5" height="5" viewBox="0 0 5 5"><path d="M2.5 0 L3.2 1.8 L5 1.9 L3.6 3 L4.1 4.9 L2.5 3.9 L0.9 4.9 L1.4 3 L0 1.9 L1.8 1.8Z" fill="#6a6a6a"/></svg>
<div class="a" style="left:23px;top:255px;width:110px;height:62px;background:linear-gradient(90deg,#4d6b96 0%,#4a6590 55%,#3b4e73 100%)"></div>
<div class="a" style="left:23px;top:300px;width:110px;height:17px;background:linear-gradient(180deg,rgba(30,40,60,0),rgba(40,50,75,.45))"></div>
<div class="t" style="left:31.00px;top:259.84px;font-size:5.50px;color:#d8e63a;font-family:'Liberation Sans',sans-serif;font-weight:bold;transform:scaleX(0.9520);transform-origin:0 0;">ПЛАН</div>
<div class="a" style="left:63.5px;top:265.5px;width:55.5px;height:2.2px;background:#e3e332"></div>
<div class="a" style="left:63.5px;top:272.3px;width:20.200000000000003px;height:2.2px;background:#e3e332"></div>
<div class="a" style="left:63.5px;top:279px;width:25.5px;height:2.2px;background:#e3e332"></div>
<div class="a" style="left:63.5px;top:285.8px;width:47.7px;height:2.2px;background:#e3e332"></div>
<div class="a" style="left:63.5px;top:289.7px;width:23.900000000000006px;height:2.2px;background:#e3e332"></div>
<div class="a" style="left:63.5px;top:297.2px;width:53.900000000000006px;height:2.2px;background:#e3e332"></div>
<svg class="a" style="left:23px;top:288px;" width="40" height="29" viewBox="0 0 40 29"><path d="M1 28 L8 20 L30 6 L38 1 L39 3 L32 9 L18 21 L12 27Z" fill="#cfd5de"/><path d="M10 22 L22 15 L26 19 L14 25Z" fill="#8d96a3"/><path d="M1 28 L6 23 L9 26 L4 29Z" fill="#eef0f3"/></svg>
<div class="t" style="left:12.80px;top:327.30px;font-size:8.50px;color:#505050;font-family:'Liberation Sans',sans-serif;transform:scaleX(0.8884);transform-origin:0 0;">3</div>
<svg class="a" style="left:12px;top:338.5px;" width="5" height="5" viewBox="0 0 5 5"><path d="M2.5 0 L3.2 1.8 L5 1.9 L3.6 3 L4.1 4.9 L2.5 3.9 L0.9 4.9 L1.4 3 L0 1.9 L1.8 1.8Z" fill="#6a6a6a"/></svg>
<div class="a" style="left:21.6px;top:329.4px;width:111.4px;height:63.5px;background:#fff"></div>
<div class="a" style="left:59.4px;top:333.5px;width:34.6px;height:2.5px;background:#2a2a2a"></div>
<div class="a" style="left:25px;top:342.5px;width:34px;height:1.8px;background:#f1a4a4"></div>
<div class="a" style="left:64px;top:341px;width:20px;height:2px;background:#8fb2e5"></div>
<div class="a" style="left:99px;top:342.5px;width:24px;height:1.8px;background:#f1a4a4"></div>
<div class="a" style="left:32px;top:349px;width:20px;height:1px;background:#9a9a9a"></div>
<div class="a" style="left:33px;top:354px;width:18px;height:1px;background:#9a9a9a"></div>
<div class="a" style="left:27px;top:357px;width:30px;height:1px;background:#777"></div>
<div class="a" style="left:99px;top:349px;width:25px;height:1px;background:#9a9a9a"></div>
<div class="a" style="left:99px;top:354px;width:25px;height:1px;background:#9a9a9a"></div>
<div class="a" style="left:63px;top:351px;width:29px;height:4px;background:#b8b98a"></div>
<div class="a" style="left:24.7px;top:361.3px;width:18.3px;height:29.5px;background:#1f2b44"></div>
<div class="a" style="left:26px;top:380px;width:16px;height:9px;background:#8e97a8"></div>
<div class="a" style="left:70.3px;top:359.2px;width:15px;height:10px;background:#e8f0fb;border:1.2px solid #3a86d8"></div>
<div class="a" style="left:69px;top:369.6px;width:17.5px;height:2.5px;background:#3a86d8"></div>
<div class="a" style="left:61px;top:376px;width:33.6px;height:3.7px;background:#fff;border:1px solid #555"></div>
<div class="a" style="left:61px;top:383.5px;width:33.6px;height:6.3px;background:#fff;border:1px solid #555"></div>
<div class="a" style="left:96.2px;top:362.8px;width:32.6px;height:26.4px;background:#3a2c22"></div>
<div class="a" style="left:96.2px;top:363.5px;width:32.6px;height:12px;background:repeating-linear-gradient(90deg,#c0392b 0 1.5px,#e0b050 1.5px 3px,#2f6f4f 3px 4px,#d9d2b0 4px 5.5px,#8e44ad 5.5px 6.5px,#e67e22 6.5px 8px)"></div>
<div class="a" style="left:96.2px;top:376.5px;width:32.6px;height:12px;background:repeating-linear-gradient(90deg,#e8c070 0 1.5px,#b03a2e 1.5px 3px,#f0e0c0 3px 4.5px,#2c5f8a 4.5px 5.5px,#d35400 5.5px 7px,#6d8f3a 7px 8px)"></div>
<div class="a" style="left:96.2px;top:375.5px;width:32.6px;height:1.2px;background:#2a1e16"></div>
</div>
<div class="t" style="left:12.80px;top:403.80px;font-size:8.50px;color:#c8442a;font-family:'Liberation Sans',sans-serif;transform:scaleX(0.8884);transform-origin:0 0;">4</div>
<svg class="a" style="left:12px;top:415px;" width="5" height="5" viewBox="0 0 5 5"><path d="M2.5 0 L3.2 1.8 L5 1.9 L3.6 3 L4.1 4.9 L2.5 3.9 L0.9 4.9 L1.4 3 L0 1.9 L1.8 1.8Z" fill="#6a6a6a"/></svg>
<div class="a" style="left:20.3px;top:404px;width:114.2px;height:65.3px;background:#fff;border:2px solid #c8442a"></div>
<div class="a" style="left:0;top:0;width:160px;height:675px;filter:blur(0.3px)">
<div class="t" style="left:12.80px;top:478.80px;font-size:8.50px;color:#505050;font-family:'Liberation Sans',sans-serif;transform:scaleX(0.8884);transform-origin:0 0;">5</div>
<svg class="a" style="left:12px;top:490.0px;" width="5" height="5" viewBox="0 0 5 5"><path d="M2.5 0 L3.2 1.8 L5 1.9 L3.6 3 L4.1 4.9 L2.5 3.9 L0.9 4.9 L1.4 3 L0 1.9 L1.8 1.8Z" fill="#6a6a6a"/></svg>
<div class="a" style="left:21.6px;top:480.7px;width:111.4px;height:62.7px;background:#fff"></div>
<div class="a" style="left:47px;top:483.6px;width:59px;height:1.8px;background:#e07070"></div>
<div class="a" style="left:57px;top:488px;width:38px;height:1px;background:#9aa0b0"></div>
<div class="a" style="left:56px;top:491px;width:40px;height:1px;background:#9aa0b0"></div>
<div class="a" style="left:64px;top:494px;width:24px;height:1px;background:#9aa0b0"></div>
<div class="a" style="left:65px;top:497px;width:22px;height:1.5px;background:#333"></div>
<div class="a" style="left:62px;top:501px;width:28px;height:1.5px;background:#333"></div>
<div class="a" style="left:63px;top:504px;width:26px;height:1px;background:#666"></div>
<div class="a" style="left:70px;top:506.5px;width:12px;height:1px;background:#333"></div>
<div class="a" style="left:27.8px;top:494px;width:18px;height:13.6px;background:radial-gradient(circle at 50% 50%,#3c8f3c 35%,#d9d28a 55%,#fff 75%)"></div>
<div class="a" style="left:114.3px;top:482.2px;width:16.6px;height:15.6px;background:linear-gradient(135deg,#9fb0c8,#6f7f95 60%,#8c5448)"></div>
<div class="a" style="left:120px;top:485px;width:8px;height:8px;background:#2c4f8f;border-radius:50%"></div>
<div class="a" style="left:104px;top:492px;width:10px;height:2.5px;background:#555"></div>
<div class="a" style="left:99.8px;top:499.3px;width:31.1px;height:16.1px;background:linear-gradient(90deg,#f1ece2,#b48c6a 35%,#6b4a36 55%,#c7a885 75%,#e8dcc8)"></div>
<div class="a" style="left:69.2px;top:509.2px;width:16.6px;height:10.5px;background:#e8f0fb;border:1.2px solid #3a86d8"></div>
<div class="a" style="left:67.5px;top:519.7px;width:20px;height:2.9px;background:#3a86d8"></div>
<div class="a" style="left:53px;top:517px;width:12px;height:1.2px;background:#333"></div>
<div class="a" style="left:52px;top:520px;width:14px;height:1px;background:#9aa"></div>
<div class="a" style="left:55px;top:523px;width:10px;height:1px;background:#9aa"></div>
<div class="a" style="left:88px;top:517px;width:13px;height:1.2px;background:#333"></div>
<div class="a" style="left:88px;top:520px;width:13px;height:1.2px;background:#e05050"></div>
<div class="a" style="left:91px;top:523px;width:8px;height:1.2px;background:#e05050"></div>
<div class="a" style="left:104px;top:520px;width:24.3px;height:6.8px;background:#fff;border:1.3px solid #333"></div>
<div class="a" style="left:106px;top:522px;width:20px;height:2.5px;background:#7ea2d8"></div>
<div class="a" style="left:60px;top:532px;width:26px;height:1px;background:#7d6fb0"></div>
<div class="a" style="left:58px;top:535px;width:30px;height:1px;background:#c05050"></div>
<div class="a" style="left:56px;top:538px;width:34px;height:1px;background:#7d6fb0"></div>
<div class="a" style="left:98.8px;top:529.9px;width:32.1px;height:10.9px;background:radial-gradient(circle at 20% 40%,#c9d0e6 0 1px,transparent 2px),radial-gradient(circle at 60% 70%,#b04040 0 1px,transparent 2px),radial-gradient(circle at 80% 30%,#dfe3f0 0 1px,transparent 2px),radial-gradient(circle at 40% 20%,#8a3a5a 0 1px,transparent 2px),linear-gradient(90deg,#2d3a78,#4a5796 40%,#3a3f70 70%,#6a4a6a)"></div>
<svg class="a" style="left:22px;top:520px;" width="30" height="23" viewBox="0 0 30 23"><path d="M1 22 L6 15 L26 3 L29 1 L30 3 L24 8 L10 19 L5 23Z" fill="#d0d4da"/><path d="M12 14 L20 9 L23 13 L15 18Z" fill="#6f7782"/></svg>
<div class="t" style="left:12.80px;top:553.80px;font-size:8.50px;color:#505050;font-family:'Liberation Sans',sans-serif;transform:scaleX(0.8884);transform-origin:0 0;">6</div>
<div class="a" style="left:21.6px;top:556px;width:111.4px;height:15px;background:#fff"></div>
<div class="a" style="left:40px;top:559.5px;width:62px;height:2px;background:#2a2a2a"></div>
<div class="a" style="left:56px;top:564px;width:34px;height:1.2px;background:#8d7fc2"></div>
<div class="a" style="left:25px;top:568px;width:30px;height:3px;background:#1f2b44"></div>
<div class="a" style="left:110px;top:566px;width:23px;height:5px;background:linear-gradient(90deg,#e8dcc0,#6d5a3a)"></div>
<div class="a" style="left:70px;top:568px;width:20px;height:3px;background:#d6dde6;border-radius:50% 50% 0 0"></div>
</div>
<div class="a" style="left:940px;top:170px;width:8px;height:390px;background:#dedede"></div>
<div class="a" style="left:940px;top:170px;width:8px;height:8px;background:#f7f7f7"></div>
<svg class="a" style="left:941.5px;top:172.5px;" width="5" height="3" viewBox="0 0 5 3"><path d="M0 3 L2.5 0 L5 3Z" fill="#606060"/></svg>
<div class="a" style="left:940px;top:237px;width:8px;height:17px;background:#ffffff"></div>
<div class="a" style="left:940px;top:527px;width:8px;height:8px;background:#f7f7f7"></div>
<svg class="a" style="left:941.5px;top:530px;" width="5" height="3" viewBox="0 0 5 3"><path d="M0 0 L2.5 3 L5 0Z" fill="#606060"/></svg>
<svg class="a" style="left:941px;top:537px;" width="6" height="8" viewBox="0 0 6 8"><path d="M0.5 3.5 L3 1 L5.5 3.5 M0.5 6.5 L3 4 L5.5 6.5" fill="none" stroke="#666" stroke-width="0.9"/></svg>
<svg class="a" style="left:941px;top:547px;" width="6" height="8" viewBox="0 0 6 8"><path d="M0.5 1.5 L3 4 L5.5 1.5 M0.5 4.5 L3 7 L5.5 4.5" fill="none" stroke="#666" stroke-width="0.9"/></svg>
<div class="a" style="left:0;top:0;width:1200px;height:675px;"><div class="a" style="left:205px;top:173px;width:688px;height:387px;background:#fff"></div>
<div class="t" style="left:234.10px;top:195.09px;font-size:12.30px;color:#1b2a4a;font-family:'Liberation Sans',sans-serif;transform:scaleX(1.1154);transform-origin:0 0;">О. Демська-Кульчицька</div>
<svg class="a" style="left:251px;top:206.5px;" width="54" height="2" viewBox="0 0 54 2"><path d="M0 1 Q1.5 0 3 1 T6 1 T9 1 T12 1 T15 1 T18 1 T21 1 T24 1 T27 1 T30 1 T33 1 T36 1 T39 1 T42 1 T45 1 T48 1 T51 1 T54 1" fill="none" stroke="#e07a7a" stroke-width="0.6"/></svg>
<div class="t" style="left:456.70px;top:192.18px;font-size:21.40px;color:#111;font-family:'Liberation Sans',sans-serif;font-weight:bold;transform:scaleX(0.9920);transform-origin:0 0;">ТИПИ КОРПУСІВ</div>
<div class="a" style="left:218.5px;top:220.0px;width:340px;height:271px;background:#c6e2fa;border-radius:5px;filter:blur(2.5px)"></div>
<div class="a" style="left:221.5px;top:223.0px;width:334px;height:265px;background:#98c9f2;border-radius:2px;filter:blur(1.2px)"></div>
<div class="a" style="left:218.5px;top:483.0px;width:340px;height:73px;background:#c6e2fa;border-radius:5px;filter:blur(2.5px)"></div>
<div class="a" style="left:221.5px;top:486.0px;width:334px;height:67px;background:#98c9f2;border-radius:2px;filter:blur(1.2px)"></div>
<div class="a" style="left:225px;top:226.5px;width:327px;height:258px;background:#fbfbfa"></div>
<div class="a" style="left:225px;top:226.5px;width:3.5px;height:258px;background:linear-gradient(90deg,#c9c9c9,#efefef)"></div>
<div class="a" style="left:225px;top:226.5px;width:327px;height:2px;background:#e4e4e4"></div>
<div class="a" style="left:540px;top:226.5px;width:12px;height:258px;background:linear-gradient(90deg,rgba(190,190,190,0),#b9b9b9 70%,#8d8d8d)"></div>
<div class="a" style="left:225px;top:479.0px;width:327px;height:5.5px;background:linear-gradient(180deg,#9a9a9a,#7a7a7a)"></div>
<div class="a" style="left:225px;top:489.5px;width:327px;height:60px;background:#fbfbfa"></div>
<div class="a" style="left:225px;top:489.5px;width:3.5px;height:60px;background:linear-gradient(90deg,#c9c9c9,#efefef)"></div>
<div class="a" style="left:225px;top:489.5px;width:327px;height:2px;background:#e4e4e4"></div>
<div class="a" style="left:540px;top:489.5px;width:12px;height:60px;background:linear-gradient(90deg,rgba(190,190,190,0),#b9b9b9 70%,#8d8d8d)"></div>
<div class="a" style="left:225px;top:544.0px;width:327px;height:5.5px;background:linear-gradient(180deg,#9a9a9a,#7a7a7a)"></div>
<div class="a" style="left:233.4px;top:246px;width:138.1px;height:14px;border:1px solid #8a8a8a;background:rgba(255,255,255,.6)"></div>
<div class="a" style="left:253.5px;top:231.5px;width:99.0px;height:15.0px;border:1px solid #8a8a8a;background:rgba(255,255,255,.6)"></div>
<div class="a" style="left:409px;top:246px;width:133.60000000000002px;height:14px;border:1px solid #8a8a8a;background:rgba(255,255,255,.6)"></div>
<div class="a" style="left:428.5px;top:231.5px;width:99.0px;height:15.0px;border:1px solid #8a8a8a;background:rgba(255,255,255,.6)"></div>
<div class="t" style="left:279.70px;top:235.07px;font-size:7.20px;color:#3a3a3a;font-family:'Liberation Serif',serif;font-weight:bold;transform:scaleX(0.9913);transform-origin:0 0;-webkit-text-stroke:0.05px currentColor;">Повнотекстові</div>
<div class="t" style="left:459.00px;top:235.07px;font-size:7.20px;color:#3a3a3a;font-family:'Liberation Serif',serif;font-weight:bold;transform:scaleX(0.9718);transform-origin:0 0;-webkit-text-stroke:0.05px currentColor;">Фрагментні</div>
<div class="t" style="left:248.40px;top:248.94px;font-size:7.00px;color:#606060;font-family:'Liberation Serif',serif;font-style:italic;transform:scaleX(1.0463);transform-origin:0 0;-webkit-text-stroke:0.1px currentColor;">тексти в корпусі подані повністю</div>
<div class="t" style="left:432.80px;top:248.94px;font-size:7.00px;color:#606060;font-family:'Liberation Serif',serif;font-style:italic;transform:scaleX(1.0542);transform-origin:0 0;-webkit-text-stroke:0.1px currentColor;">подані фрагменти текстів</div>
<svg class="a" style="left:386px;top:245.1px;" width="10" height="7" viewBox="0 0 10 7"><path d="M3 0.5 L0.5 3.5 L3 6.5 M7 0.5 L9.5 3.5 L7 6.5 M1.8 2.2 H8.2 M1.8 4.8 H8.2" fill="none" stroke="#606060" stroke-width="0.7"/></svg>
<div class="a" style="left:233.4px;top:283.4px;width:138.1px;height:32.10000000000002px;border:1px solid #8a8a8a;background:rgba(255,255,255,.6)"></div>
<div class="a" style="left:253.5px;top:269.6px;width:99.0px;height:14.199999999999989px;border:1px solid #8a8a8a;background:rgba(255,255,255,.6)"></div>
<div class="a" style="left:409px;top:283.4px;width:133.60000000000002px;height:32.10000000000002px;border:1px solid #8a8a8a;background:rgba(255,255,255,.6)"></div>
<div class="a" style="left:428.5px;top:269.6px;width:99.0px;height:14.199999999999989px;border:1px solid #8a8a8a;background:rgba(255,255,255,.6)"></div>
<div class="t" style="left:281.50px;top:272.57px;font-size:7.20px;color:#3a3a3a;font-family:'Liberation Serif',serif;font-weight:bold;transform:scaleX(0.9856);transform-origin:0 0;-webkit-text-stroke:0.05px currentColor;">Дослідницькі</div>
<div class="t" style="left:457.70px;top:272.57px;font-size:7.20px;color:#3a3a3a;font-family:'Liberation Serif',serif;font-weight:bold;transform:scaleX(0.9683);transform-origin:0 0;-webkit-text-stroke:0.05px currentColor;">Ілюстративні</div>
<div class="t" style="left:255.60px;top:284.94px;font-size:7.00px;color:#606060;font-family:'Liberation Serif',serif;font-style:italic;transform:scaleX(1.0271);transform-origin:0 0;-webkit-text-stroke:0.1px currentColor;">застосовують у лінгвістичних</div>
<div class="t" style="left:241.50px;top:293.24px;font-size:7.00px;color:#606060;font-family:'Liberation Serif',serif;font-style:italic;transform:scaleX(1.0473);transform-origin:0 0;-webkit-text-stroke:0.1px currentColor;">дослідженнях із метою формулювання</div>
<div class="t" style="left:264.00px;top:301.44px;font-size:7.00px;color:#606060;font-family:'Liberation Serif',serif;font-style:italic;transform:scaleX(0.9332);transform-origin:0 0;-webkit-text-stroke:0.1px currentColor;">нових теорій, концепцій тощо</div>
<div class="t" style="left:417.00px;top:284.94px;font-size:7.00px;color:#606060;font-family:'Liberation Serif',serif;font-style:italic;transform:scaleX(1.0384);transform-origin:0 0;-webkit-text-stroke:0.1px currentColor;">застосовують для підтвердження уже</div>
<div class="t" style="left:418.70px;top:293.24px;font-size:7.00px;color:#606060;font-family:'Liberation Serif',serif;font-style:italic;transform:scaleX(1.0302);transform-origin:0 0;-webkit-text-stroke:0.1px currentColor;">висловлених теоретичних положень чи</div>
<div class="t" style="left:451.70px;top:301.44px;font-size:7.00px;color:#606060;font-family:'Liberation Serif',serif;font-style:italic;transform:scaleX(1.0397);transform-origin:0 0;-webkit-text-stroke:0.1px currentColor;">гіпотез про мову</div>
<svg class="a" style="left:386px;top:282.5px;" width="10" height="7" viewBox="0 0 10 7"><path d="M3 0.5 L0.5 3.5 L3 6.5 M7 0.5 L9.5 3.5 L7 6.5 M1.8 2.2 H8.2 M1.8 4.8 H8.2" fill="none" stroke="#606060" stroke-width="0.7"/></svg>
<div class="a" style="left:233.4px;top:338.6px;width:138.1px;height:25.899999999999977px;border:1px solid #8a8a8a;background:rgba(255,255,255,.6)"></div>
<div class="a" style="left:253.5px;top:325.4px;width:99.0px;height:13.600000000000023px;border:1px solid #8a8a8a;background:rgba(255,255,255,.6)"></div>
<div class="a" style="left:409px;top:338.6px;width:133.60000000000002px;height:25.899999999999977px;border:1px solid #8a8a8a;background:rgba(255,255,255,.6)"></div>
<div class="a" style="left:428.5px;top:325.4px;width:99.0px;height:13.600000000000023px;border:1px solid #8a8a8a;background:rgba(255,255,255,.6)"></div>
<div class="t" style="left:281.50px;top:328.07px;font-size:7.20px;color:#3a3a3a;font-family:'Liberation Serif',serif;font-weight:bold;transform:scaleX(0.9856);transform-origin:0 0;-webkit-text-stroke:0.05px currentColor;">Дослідницькі</div>
<div class="t" style="left:453.80px;top:328.07px;font-size:7.20px;color:#3a3a3a;font-family:'Liberation Serif',serif;font-weight:bold;transform:scaleX(0.9581);transform-origin:0 0;-webkit-text-stroke:0.05px currentColor;">Інтерпретаційні</div>
<div class="t" style="left:241.50px;top:340.44px;font-size:7.00px;color:#606060;font-family:'Liberation Serif',serif;font-style:italic;transform:scaleX(1.0384);transform-origin:0 0;-webkit-text-stroke:0.1px currentColor;">подають тексти як цілісні об’єкти, як</div>
<div class="t" style="left:252.00px;top:349.24px;font-size:7.00px;color:#606060;font-family:'Liberation Serif',serif;font-style:italic;transform:scaleX(1.0366);transform-origin:0 0;-webkit-text-stroke:0.1px currentColor;">факт реалізації мовної системи</div>
<div class="t" style="left:415.70px;top:340.44px;font-size:7.00px;color:#606060;font-family:'Liberation Serif',serif;font-style:italic;transform:scaleX(1.0441);transform-origin:0 0;-webkit-text-stroke:0.1px currentColor;">становлять інформаційно-довідкові та</div>
<div class="t" style="left:452.60px;top:349.24px;font-size:7.00px;color:#606060;font-family:'Liberation Serif',serif;font-style:italic;transform:scaleX(0.9018);transform-origin:0 0;-webkit-text-stroke:0.1px currentColor;">дослідницькі системи</div>
<svg class="a" style="left:386px;top:338.1px;" width="10" height="7" viewBox="0 0 10 7"><path d="M3 0.5 L0.5 3.5 L3 6.5 M7 0.5 L9.5 3.5 L7 6.5 M1.8 2.2 H8.2 M1.8 4.8 H8.2" fill="none" stroke="#606060" stroke-width="0.7"/></svg>
<div class="a" style="left:233.4px;top:390.4px;width:137.6px;height:38.10000000000002px;border:1px solid #8a8a8a;background:rgba(255,255,255,.6)"></div>
<div class="a" style="left:253.5px;top:376.6px;width:100.0px;height:14.199999999999989px;border:1px solid #8a8a8a;background:rgba(255,255,255,.6)"></div>
<div class="a" style="left:409px;top:390.4px;width:137px;height:38.10000000000002px;border:1px solid #8a8a8a;background:rgba(255,255,255,.6)"></div>
<div class="a" style="left:426px;top:376.6px;width:99.60000000000002px;height:14.199999999999989px;border:1px solid #8a8a8a;background:rgba(255,255,255,.6)"></div>
<div class="t" style="left:279.70px;top:379.57px;font-size:7.20px;color:#3a3a3a;font-family:'Liberation Serif',serif;font-weight:bold;transform:scaleX(0.9815);transform-origin:0 0;-webkit-text-stroke:0.05px currentColor;">Моніторингові</div>
<div class="t" style="left:460.70px;top:379.57px;font-size:7.20px;color:#3a3a3a;font-family:'Liberation Serif',serif;font-weight:bold;transform:scaleX(1.0021);transform-origin:0 0;-webkit-text-stroke:0.05px currentColor;">Статичні</div>
<div class="t" style="left:284.50px;top:391.14px;font-size:7.00px;color:#606060;font-family:'Liberation Serif',serif;transform:scaleX(0.9939);transform-origin:0 0;">(динамічні)</div>
<div class="t" style="left:235.50px;top:400.04px;font-size:7.00px;color:#606060;font-family:'Liberation Serif',serif;font-style:italic;transform:scaleX(1.0371);transform-origin:0 0;-webkit-text-stroke:0.1px currentColor;">забезпечують можливість відстежування</div>
<div class="t" style="left:238.30px;top:408.74px;font-size:7.00px;color:#606060;font-family:'Liberation Serif',serif;font-style:italic;transform:scaleX(1.0487);transform-origin:0 0;-webkit-text-stroke:0.1px currentColor;">змін у мові, враховуючи аспект діахронії</div>
<div class="t" style="left:423.80px;top:391.94px;font-size:7.00px;color:#606060;font-family:'Liberation Serif',serif;font-style:italic;transform:scaleX(1.0370);transform-origin:0 0;-webkit-text-stroke:0.1px currentColor;">засвідчують стан мови на певному</div>
<div class="t" style="left:450.00px;top:400.04px;font-size:7.00px;color:#606060;font-family:'Liberation Serif',serif;font-style:italic;transform:scaleX(1.0620);transform-origin:0 0;-webkit-text-stroke:0.1px currentColor;">синхронному зрізі</div>
<svg class="a" style="left:386px;top:396.5px;" width="10" height="7" viewBox="0 0 10 7"><path d="M3 0.5 L0.5 3.5 L3 6.5 M7 0.5 L9.5 3.5 L7 6.5 M1.8 2.2 H8.2 M1.8 4.8 H8.2" fill="none" stroke="#606060" stroke-width="0.7"/></svg>
<div class="a" style="left:233.4px;top:452.6px;width:137.6px;height:25.399999999999977px;border:1px solid #8a8a8a;background:rgba(255,255,255,.6)"></div>
<div class="a" style="left:253px;top:439.6px;width:99px;height:13.399999999999977px;border:1px solid #8a8a8a;background:rgba(255,255,255,.6)"></div>
<div class="a" style="left:409px;top:452.6px;width:137px;height:25.399999999999977px;border:1px solid #8a8a8a;background:rgba(255,255,255,.6)"></div>
<div class="a" style="left:433.5px;top:439.6px;width:99.0px;height:13.399999999999977px;border:1px solid #8a8a8a;background:rgba(255,255,255,.6)"></div>
<div class="t" style="left:286.60px;top:441.57px;font-size:7.20px;color:#3a3a3a;font-family:'Liberation Serif',serif;font-weight:bold;transform:scaleX(0.9796);transform-origin:0 0;-webkit-text-stroke:0.05px currentColor;">Діахронні</div>
<div class="t" style="left:465.80px;top:441.57px;font-size:7.20px;color:#3a3a3a;font-family:'Liberation Serif',serif;font-weight:bold;transform:scaleX(0.9943);transform-origin:0 0;-webkit-text-stroke:0.05px currentColor;">Синхронні</div>
<div class="t" style="left:234.00px;top:454.94px;font-size:7.00px;color:#606060;font-family:'Liberation Serif',serif;font-style:italic;transform:scaleX(1.0456);transform-origin:0 0;-webkit-text-stroke:0.1px currentColor;">репрезентують мову в понадчасовому зрізі</div>
<div class="t" style="left:418.70px;top:454.94px;font-size:7.00px;color:#606060;font-family:'Liberation Serif',serif;font-style:italic;transform:scaleX(1.0367);transform-origin:0 0;-webkit-text-stroke:0.1px currentColor;">репрезентують мову або тип тексту</div>
<div class="t" style="left:414.80px;top:463.14px;font-size:7.00px;color:#606060;font-family:'Liberation Serif',serif;font-style:italic;transform:scaleX(1.0512);transform-origin:0 0;-webkit-text-stroke:0.1px currentColor;">певного визначеного часового проміжку</div>
<svg class="a" style="left:386px;top:450.5px;" width="10" height="7" viewBox="0 0 10 7"><path d="M3 0.5 L0.5 3.5 L3 6.5 M7 0.5 L9.5 3.5 L7 6.5 M1.8 2.2 H8.2 M1.8 4.8 H8.2" fill="none" stroke="#606060" stroke-width="0.7"/></svg>
<div class="a" style="left:229.5px;top:511px;width:139.5px;height:33px;border:1px solid #8a8a8a;background:rgba(255,255,255,.6)"></div>
<div class="a" style="left:255px;top:497.6px;width:100.5px;height:13.799999999999955px;border:1px solid #8a8a8a;background:rgba(255,255,255,.6)"></div>
<div class="a" style="left:408px;top:511px;width:139.60000000000002px;height:33px;border:1px solid #8a8a8a;background:rgba(255,255,255,.6)"></div>
<div class="a" style="left:428.5px;top:497.6px;width:99.5px;height:13.799999999999955px;border:1px solid #8a8a8a;background:rgba(255,255,255,.6)"></div>
<div class="t" style="left:281.50px;top:499.57px;font-size:7.20px;color:#3a3a3a;font-family:'Liberation Serif',serif;font-weight:bold;transform:scaleX(0.9800);transform-origin:0 0;-webkit-text-stroke:0.05px currentColor;">Загальномовні</div>
<div class="t" style="left:454.70px;top:499.57px;font-size:7.20px;color:#3a3a3a;font-family:'Liberation Serif',serif;font-weight:bold;transform:scaleX(0.9958);transform-origin:0 0;-webkit-text-stroke:0.05px currentColor;">Спеціалізовані</div>
<div class="t" style="left:246.60px;top:513.44px;font-size:7.00px;color:#606060;font-family:'Liberation Serif',serif;font-style:italic;transform:scaleX(1.0448);transform-origin:0 0;-webkit-text-stroke:0.1px currentColor;">репрезентують загальнонародну,</div>
<div class="t" style="left:272.50px;top:522.44px;font-size:7.00px;color:#606060;font-family:'Liberation Serif',serif;font-style:italic;transform:scaleX(1.0471);transform-origin:0 0;-webkit-text-stroke:0.1px currentColor;">національну мову</div>
<div class="t" style="left:420.00px;top:513.44px;font-size:7.00px;color:#606060;font-family:'Liberation Serif',serif;font-style:italic;transform:scaleX(1.0524);transform-origin:0 0;-webkit-text-stroke:0.1px currentColor;">скеровані на розв’язання часткових,</div>
<div class="t" style="left:409.70px;top:522.44px;font-size:7.00px;color:#606060;font-family:'Liberation Serif',serif;font-style:italic;transform:scaleX(1.0613);transform-origin:0 0;-webkit-text-stroke:0.1px currentColor;">галузевих, особливих, специфічних науково-</div>
<div class="t" style="left:450.00px;top:530.94px;font-size:7.00px;color:#606060;font-family:'Liberation Serif',serif;font-style:italic;transform:scaleX(1.0459);transform-origin:0 0;-webkit-text-stroke:0.1px currentColor;">дослідних завдань</div>
<svg class="a" style="left:385px;top:510.5px;" width="10" height="7" viewBox="0 0 10 7"><path d="M3 0.5 L0.5 3.5 L3 6.5 M7 0.5 L9.5 3.5 L7 6.5 M1.8 2.2 H8.2 M1.8 4.8 H8.2" fill="none" stroke="#606060" stroke-width="0.7"/></svg>
<div class="a" style="left:564.4px;top:238.5px;width:321.4px;height:19px;background:#5b9bd5"></div>
<div class="a" style="left:724.9px;top:238.5px;width:1px;height:19px;background:#ffffff;opacity:.8"></div>
<div class="a" style="left:564.4px;top:260px;width:160.5px;height:41.5px;background:#d2daeb"></div>
<div class="a" style="left:725.9px;top:260px;width:159.89999999999998px;height:41.5px;background:#d2daeb"></div>
<div class="a" style="left:564.4px;top:302.5px;width:160.5px;height:31.0px;background:#e9ecf5"></div>
<div class="a" style="left:725.9px;top:302.5px;width:159.89999999999998px;height:31.0px;background:#e9ecf5"></div>
<div class="a" style="left:564.4px;top:334.5px;width:160.5px;height:42.0px;background:#d2daeb"></div>
<div class="a" style="left:725.9px;top:334.5px;width:159.89999999999998px;height:42.0px;background:#d2daeb"></div>
<div class="a" style="left:564.4px;top:377.5px;width:160.5px;height:69.0px;background:#e9ecf5"></div>
<div class="a" style="left:725.9px;top:377.5px;width:159.89999999999998px;height:69.0px;background:#e9ecf5"></div>
<div class="a" style="left:564.4px;top:448px;width:160.5px;height:29.5px;background:#d2daeb"></div>
<div class="a" style="left:725.9px;top:448px;width:159.89999999999998px;height:29.5px;background:#d2daeb"></div>
<div class="a" style="left:564.4px;top:478.5px;width:160.5px;height:30.5px;background:#e9ecf5"></div>
<div class="a" style="left:725.9px;top:478.5px;width:159.89999999999998px;height:30.5px;background:#e9ecf5"></div>
<div class="a" style="left:564.4px;top:510px;width:160.5px;height:29.5px;background:#d2daeb"></div>
<div class="a" style="left:725.9px;top:510px;width:159.89999999999998px;height:29.5px;background:#d2daeb"></div>
<div class="t" style="left:621.80px;top:244.17px;font-size:10.20px;color:#ffffff;font-family:'Liberation Sans',sans-serif;font-weight:bold;transform:scaleX(1.0701);transform-origin:0 0;">ОЗНАКИ</div>
<div class="t" style="left:767.60px;top:244.17px;font-size:10.20px;color:#ffffff;font-family:'Liberation Sans',sans-serif;font-weight:bold;transform:scaleX(1.0820);transform-origin:0 0;">Типи корпусів</div>
<svg class="a" style="left:767.6px;top:254.5px;" width="31.399999999999977" height="2" viewBox="0 0 31.399999999999977 2"><path d="M0 1 l1.2 -1 l1.2 1 l1.2 -1 l1.2 1 l1.2 -1 l1.2 1 l1.2 -1 l1.2 1 l1.2 -1 l1.2 1 l1.2 -1 l1.2 1 l1.2 -1 l1.2 1 l1.2 -1 l1.2 1 l1.2 -1 l1.2 1 l1.2 -1 l1.2 1 l1.2 -1 l1.2 1 l1.2 -1 l1.2 1 l1.2 -1 l1.2 1" fill="none" stroke="#d9534f" stroke-width="0.75" opacity="0.9"/></svg>
<svg class="a" style="left:802px;top:254.5px;" width="42.60000000000002" height="2" viewBox="0 0 42.60000000000002 2"><path d="M0 1 l1.2 -1 l1.2 1 l1.2 -1 l1.2 1 l1.2 -1 l1.2 1 l1.2 -1 l1.2 1 l1.2 -1 l1.2 1 l1.2 -1 l1.2 1 l1.2 -1 l1.2 1 l1.2 -1 l1.2 1 l1.2 -1 l1.2 1 l1.2 -1 l1.2 1 l1.2 -1 l1.2 1 l1.2 -1 l1.2 1 l1.2 -1 l1.2 1 l1.2 -1 l1.2 1 l1.2 -1 l1.2 1 l1.2 -1 l1.2 1 l1.2 -1 l1.2 1" fill="none" stroke="#d9534f" stroke-width="0.75" opacity="0.9"/></svg>
<div class="t" style="left:569.30px;top:263.74px;font-size:10.00px;color:#111;font-family:'Liberation Sans',sans-serif;transform:scaleX(0.9605);transform-origin:0 0;">Тип даних</div>
<svg class="a" style="left:590px;top:273px;" width="24.399999999999977" height="2" viewBox="0 0 24.399999999999977 2"><path d="M0 1 l1.2 -1 l1.2 1 l1.2 -1 l1.2 1 l1.2 -1 l1.2 1 l1.2 -1 l1.2 1 l1.2 -1 l1.2 1 l1.2 -1 l1.2 1 l1.2 -1 l1.2 1 l1.2 -1 l1.2 1 l1.2 -1 l1.2 1 l1.2 -1 l1.2 1" fill="none" stroke="#d9534f" stroke-width="0.75" opacity="0.9"/></svg>
<div class="a" style="left:730.1px;top:266.9px;width:3.7px;height:3.7px;background:#111;border-radius:50%"></div>
<div class="t" style="left:736.00px;top:263.74px;font-size:10.00px;color:#111;font-family:'Liberation Sans',sans-serif;transform:scaleX(0.9920);transform-origin:0 0;">Письменні</div>
<svg class="a" style="left:736px;top:273.0px;" width="48.299999999999955" height="2" viewBox="0 0 48.299999999999955 2"><path d="M0 1 l1.2 -1 l1.2 1 l1.2 -1 l1.2 1 l1.2 -1 l1.2 1 l1.2 -1 l1.2 1 l1.2 -1 l1.2 1 l1.2 -1 l1.2 1 l1.2 -1 l1.2 1 l1.2 -1 l1.2 1 l1.2 -1 l1.2 1 l1.2 -1 l1.2 1 l1.2 -1 l1.2 1 l1.2 -1 l1.2 1 l1.2 -1 l1.2 1 l1.2 -1 l1.2 1 l1.2 -1 l1.2 1 l1.2 -1 l1.2 1 l1.2 -1 l1.2 1 l1.2 -1 l1.2 1 l1.2 -1 l1.2 1 l1.2 -1 l1.2 1" fill="none" stroke="#d9534f" stroke-width="0.75" opacity="0.9"/></svg>
<div class="a" style="left:730.1px;top:280.2px;width:3.7px;height:3.7px;background:#111;border-radius:50%"></div>
<div class="t" style="left:736.00px;top:277.04px;font-size:10.00px;color:#111;font-family:'Liberation Sans',sans-serif;transform:scaleX(1.0199);transform-origin:0 0;">Мовні</div>
<svg class="a" style="left:736px;top:286.3px;" width="27.600000000000023" height="2" viewBox="0 0 27.600000000000023 2"><path d="M0 1 l1.2 -1 l1.2 1 l1.2 -1 l1.2 1 l1.2 -1 l1.2 1 l1.2 -1 l1.2 1 l1.2 -1 l1.2 1 l1.2 -1 l1.2 1 l1.2 -1 l1.2 1 l1.2 -1 l1.2 1 l1.2 -1 l1.2 1 l1.2 -1 l1.2 1 l1.2 -1 l1.2 1" fill="none" stroke="#d9534f" stroke-width="0.75" opacity="0.9"/></svg>
<div class="a" style="left:730.1px;top:293.5px;width:3.7px;height:3.7px;background:#111;border-radius:50%"></div>
<div class="t" style="left:736.00px;top:290.34px;font-size:10.00px;color:#111;font-family:'Liberation Sans',sans-serif;transform:scaleX(0.9680);transform-origin:0 0;">Змішані</div>
<svg class="a" style="left:736px;top:299.6px;" width="35.299999999999955" height="2" viewBox="0 0 35.299999999999955 2"><path d="M0 1 l1.2 -1 l1.2 1 l1.2 -1 l1.2 1 l1.2 -1 l1.2 1 l1.2 -1 l1.2 1 l1.2 -1 l1.2 1 l1.2 -1 l1.2 1 l1.2 -1 l1.2 1 l1.2 -1 l1.2 1 l1.2 -1 l1.2 1 l1.2 -1 l1.2 1 l1.2 -1 l1.2 1 l1.2 -1 l1.2 1 l1.2 -1 l1.2 1 l1.2 -1 l1.2 1" fill="none" stroke="#d9534f" stroke-width="0.75" opacity="0.9"/></svg>
<div class="t" style="left:569.30px;top:307.74px;font-size:10.00px;color:#111;font-family:'Liberation Sans',sans-serif;transform:scaleX(0.9835);transform-origin:0 0;">Мова текстів</div>
<svg class="a" style="left:569.3px;top:317px;" width="24.700000000000045" height="2" viewBox="0 0 24.700000000000045 2"><path d="M0 1 l1.2 -1 l1.2 1 l1.2 -1 l1.2 1 l1.2 -1 l1.2 1 l1.2 -1 l1.2 1 l1.2 -1 l1.2 1 l1.2 -1 l1.2 1 l1.2 -1 l1.2 1 l1.2 -1 l1.2 1 l1.2 -1 l1.2 1 l1.2 -1 l1.2 1" fill="none" stroke="#d9534f" stroke-width="0.75" opacity="0.9"/></svg>
<svg class="a" style="left:597px;top:317px;" width="30.5" height="2" viewBox="0 0 30.5 2"><path d="M0 1 l1.2 -1 l1.2 1 l1.2 -1 l1.2 1 l1.2 -1 l1.2 1 l1.2 -1 l1.2 1 l1.2 -1 l1.2 1 l1.2 -1 l1.2 1 l1.2 -1 l1.2 1 l1.2 -1 l1.2 1 l1.2 -1 l1.2 1 l1.2 -1 l1.2 1 l1.2 -1 l1.2 1 l1.2 -1 l1.2 1" fill="none" stroke="#d9534f" stroke-width="0.75" opacity="0.9"/></svg>
<div class="a" style="left:730.1px;top:310.9px;width:3.7px;height:3.7px;background:#111;border-radius:50%"></div>
<div class="t" style="left:736.00px;top:307.74px;font-size:10.00px;color:#111;font-family:'Liberation Sans',sans-serif;transform:scaleX(0.9587);transform-origin:0 0;">Українська</div>
<svg class="a" style="left:736px;top:317px;" width="48" height="2" viewBox="0 0 48 2"><path d="M0 1 l1.2 -1 l1.2 1 l1.2 -1 l1.2 1 l1.2 -1 l1.2 1 l1.2 -1 l1.2 1 l1.2 -1 l1.2 1 l1.2 -1 l1.2 1 l1.2 -1 l1.2 1 l1.2 -1 l1.2 1 l1.2 -1 l1.2 1 l1.2 -1 l1.2 1 l1.2 -1 l1.2 1 l1.2 -1 l1.2 1 l1.2 -1 l1.2 1 l1.2 -1 l1.2 1 l1.2 -1 l1.2 1 l1.2 -1 l1.2 1 l1.2 -1 l1.2 1 l1.2 -1 l1.2 1 l1.2 -1 l1.2 1 l1.2 -1 l1.2 1" fill="none" stroke="#d9534f" stroke-width="0.75" opacity="0.9"/></svg>
<div class="a" style="left:730.1px;top:324.2px;width:3.7px;height:3.7px;background:#111;border-radius:50%"></div>
<div class="t" style="left:736.00px;top:321.04px;font-size:10.00px;color:#111;font-family:'Liberation Sans',sans-serif;transform:scaleX(0.9706);transform-origin:0 0;">Англійська і т. ін.</div>
<svg class="a" style="left:736px;top:330.3px;" width="48" height="2" viewBox="0 0 48 2"><path d="M0 1 l1.2 -1 l1.2 1 l1.2 -1 l1.2 1 l1.2 -1 l1.2 1 l1.2 -1 l1.2 1 l1.2 -1 l1.2 1 l1.2 -1 l1.2 1 l1.2 -1 l1.2 1 l1.2 -1 l1.2 1 l1.2 -1 l1.2 1 l1.2 -1 l1.2 1 l1.2 -1 l1.2 1 l1.2 -1 l1.2 1 l1.2 -1 l1.2 1 l1.2 -1 l1.2 1 l1.2 -1 l1.2 1 l1.2 -1 l1.2 1 l1.2 -1 l1.2 1 l1.2 -1 l1.2 1 l1.2 -1 l1.2 1 l1.2 -1 l1.2 1" fill="none" stroke="#d9534f" stroke-width="0.75" opacity="0.9"/></svg>
<svg class="a" style="left:787px;top:330.3px;" width="23.700000000000045" height="2" viewBox="0 0 23.700000000000045 2"><path d="M0 1 l1.2 -1 l1.2 1 l1.2 -1 l1.2 1 l1.2 -1 l1.2 1 l1.2 -1 l1.2 1 l1.2 -1 l1.2 1 l1.2 -1 l1.2 1 l1.2 -1 l1.2 1 l1.2 -1 l1.2 1 l1.2 -1 l1.2 1" fill="none" stroke="#d9534f" stroke-width="0.75" opacity="0.9"/></svg>
<div class="t" style="left:569.30px;top:338.94px;font-size:10.00px;color:#111;font-family:'Liberation Sans',sans-serif;font-weight:bold;transform:scaleX(0.8998);transform-origin:0 0;">“Паралельність”</div>
<svg class="a" style="left:572px;top:348.2px;" width="68" height="2" viewBox="0 0 68 2"><path d="M0 1 l1.2 -1 l1.2 1 l1.2 -1 l1.2 1 l1.2 -1 l1.2 1 l1.2 -1 l1.2 1 l1.2 -1 l1.2 1 l1.2 -1 l1.2 1 l1.2 -1 l1.2 1 l1.2 -1 l1.2 1 l1.2 -1 l1.2 1 l1.2 -1 l1.2 1 l1.2 -1 l1.2 1 l1.2 -1 l1.2 1 l1.2 -1 l1.2 1 l1.2 -1 l1.2 1 l1.2 -1 l1.2 1 l1.2 -1 l1.2 1 l1.2 -1 l1.2 1 l1.2 -1 l1.2 1 l1.2 -1 l1.2 1 l1.2 -1 l1.2 1 l1.2 -1 l1.2 1 l1.2 -1 l1.2 1 l1.2 -1 l1.2 1 l1.2 -1 l1.2 1 l1.2 -1 l1.2 1 l1.2 -1 l1.2 1 l1.2 -1 l1.2 1 l1.2 -1 l1.2 1" fill="none" stroke="#d9534f" stroke-width="0.75" opacity="0.9"/></svg>
<div class="a" style="left:730.1px;top:342.09999999999997px;width:3.7px;height:3.7px;background:#111;border-radius:50%"></div>
<div class="t" style="left:736.00px;top:338.94px;font-size:10.00px;color:#111;font-family:'Liberation Sans',sans-serif;font-weight:bold;transform:scaleX(0.9644);transform-origin:0 0;">Одномовні</div>
<svg class="a" style="left:736px;top:348.2px;" width="52.299999999999955" height="2" viewBox="0 0 52.299999999999955 2"><path d="M0 1 l1.2 -1 l1.2 1 l1.2 -1 l1.2 1 l1.2 -1 l1.2 1 l1.2 -1 l1.2 1 l1.2 -1 l1.2 1 l1.2 -1 l1.2 1 l1.2 -1 l1.2 1 l1.2 -1 l1.2 1 l1.2 -1 l1.2 1 l1.2 -1 l1.2 1 l1.2 -1 l1.2 1 l1.2 -1 l1.2 1 l1.2 -1 l1.2 1 l1.2 -1 l1.2 1 l1.2 -1 l1.2 1 l1.2 -1 l1.2 1 l1.2 -1 l1.2 1 l1.2 -1 l1.2 1 l1.2 -1 l1.2 1 l1.2 -1 l1.2 1 l1.2 -1 l1.2 1" fill="none" stroke="#d9534f" stroke-width="0.75" opacity="0.9"/></svg>
<div class="a" style="left:730.1px;top:355.4px;width:3.7px;height:3.7px;background:#111;border-radius:50%"></div>
<div class="t" style="left:736.00px;top:352.24px;font-size:10.00px;color:#111;font-family:'Liberation Sans',sans-serif;font-weight:bold;transform:scaleX(0.9630);transform-origin:0 0;">Двомовні</div>
<svg class="a" style="left:736px;top:361.5px;" width="45.700000000000045" height="2" viewBox="0 0 45.700000000000045 2"><path d="M0 1 l1.2 -1 l1.2 1 l1.2 -1 l1.2 1 l1.2 -1 l1.2 1 l1.2 -1 l1.2 1 l1.2 -1 l1.2 1 l1.2 -1 l1.2 1 l1.2 -1 l1.2 1 l1.2 -1 l1.2 1 l1.2 -1 l1.2 1 l1.2 -1 l1.2 1 l1.2 -1 l1.2 1 l1.2 -1 l1.2 1 l1.2 -1 l1.2 1 l1.2 -1 l1.2 1 l1.2 -1 l1.2 1 l1.2 -1 l1.2 1 l1.2 -1 l1.2 1 l1.2 -1 l1.2 1 l1.2 -1 l1.2 1" fill="none" stroke="#d9534f" stroke-width="0.75" opacity="0.9"/></svg>
<div class="a" style="left:730.1px;top:368.7px;width:3.7px;height:3.7px;background:#111;border-radius:50%"></div>
<div class="t" style="left:736.00px;top:365.54px;font-size:10.00px;color:#111;font-family:'Liberation Sans',sans-serif;font-weight:bold;transform:scaleX(0.9308);transform-origin:0 0;">Багатомовні</div>
<svg class="a" style="left:736px;top:374.8px;" width="57.299999999999955" height="2" viewBox="0 0 57.299999999999955 2"><path d="M0 1 l1.2 -1 l1.2 1 l1.2 -1 l1.2 1 l1.2 -1 l1.2 1 l1.2 -1 l1.2 1 l1.2 -1 l1.2 1 l1.2 -1 l1.2 1 l1.2 -1 l1.2 1 l1.2 -1 l1.2 1 l1.2 -1 l1.2 1 l1.2 -1 l1.2 1 l1.2 -1 l1.2 1 l1.2 -1 l1.2 1 l1.2 -1 l1.2 1 l1.2 -1 l1.2 1 l1.2 -1 l1.2 1 l1.2 -1 l1.2 1 l1.2 -1 l1.2 1 l1.2 -1 l1.2 1 l1.2 -1 l1.2 1 l1.2 -1 l1.2 1 l1.2 -1 l1.2 1 l1.2 -1 l1.2 1 l1.2 -1 l1.2 1" fill="none" stroke="#d9534f" stroke-width="0.75" opacity="0.9"/></svg>
<div class="t" style="left:569.30px;top:382.24px;font-size:10.00px;color:#111;font-family:'Liberation Sans',sans-serif;transform:scaleX(0.9852);transform-origin:0 0;">“Літературність”,</div>
<svg class="a" style="left:572px;top:391.5px;" width="66" height="2" viewBox="0 0 66 2"><path d="M0 1 l1.2 -1 l1.2 1 l1.2 -1 l1.2 1 l1.2 -1 l1.2 1 l1.2 -1 l1.2 1 l1.2 -1 l1.2 1 l1.2 -1 l1.2 1 l1.2 -1 l1.2 1 l1.2 -1 l1.2 1 l1.2 -1 l1.2 1 l1.2 -1 l1.2 1 l1.2 -1 l1.2 1 l1.2 -1 l1.2 1 l1.2 -1 l1.2 1 l1.2 -1 l1.2 1 l1.2 -1 l1.2 1 l1.2 -1 l1.2 1 l1.2 -1 l1.2 1 l1.2 -1 l1.2 1 l1.2 -1 l1.2 1 l1.2 -1 l1.2 1 l1.2 -1 l1.2 1 l1.2 -1 l1.2 1 l1.2 -1 l1.2 1 l1.2 -1 l1.2 1 l1.2 -1 l1.2 1 l1.2 -1 l1.2 1 l1.2 -1 l1.2 1" fill="none" stroke="#d9534f" stroke-width="0.75" opacity="0.9"/></svg>
<div class="t" style="left:569.30px;top:395.54px;font-size:10.00px;color:#111;font-family:'Liberation Sans',sans-serif;transform:scaleX(0.9773);transform-origin:0 0;">специфічність</div>
<svg class="a" style="left:569.3px;top:404.8px;" width="64.0" height="2" viewBox="0 0 64.0 2"><path d="M0 1 l1.2 -1 l1.2 1 l1.2 -1 l1.2 1 l1.2 -1 l1.2 1 l1.2 -1 l1.2 1 l1.2 -1 l1.2 1 l1.2 -1 l1.2 1 l1.2 -1 l1.2 1 l1.2 -1 l1.2 1 l1.2 -1 l1.2 1 l1.2 -1 l1.2 1 l1.2 -1 l1.2 1 l1.2 -1 l1.2 1 l1.2 -1 l1.2 1 l1.2 -1 l1.2 1 l1.2 -1 l1.2 1 l1.2 -1 l1.2 1 l1.2 -1 l1.2 1 l1.2 -1 l1.2 1 l1.2 -1 l1.2 1 l1.2 -1 l1.2 1 l1.2 -1 l1.2 1 l1.2 -1 l1.2 1 l1.2 -1 l1.2 1 l1.2 -1 l1.2 1 l1.2 -1 l1.2 1 l1.2 -1 l1.2 1" fill="none" stroke="#d9534f" stroke-width="0.75" opacity="0.9"/></svg>
<div class="a" style="left:730.1px;top:385.4px;width:3.7px;height:3.7px;background:#111;border-radius:50%"></div>
<div class="t" style="left:736.00px;top:382.24px;font-size:10.00px;color:#111;font-family:'Liberation Sans',sans-serif;transform:scaleX(0.9942);transform-origin:0 0;">Літературні</div>
<svg class="a" style="left:736px;top:391.5px;" width="52.299999999999955" height="2" viewBox="0 0 52.299999999999955 2"><path d="M0 1 l1.2 -1 l1.2 1 l1.2 -1 l1.2 1 l1.2 -1 l1.2 1 l1.2 -1 l1.2 1 l1.2 -1 l1.2 1 l1.2 -1 l1.2 1 l1.2 -1 l1.2 1 l1.2 -1 l1.2 1 l1.2 -1 l1.2 1 l1.2 -1 l1.2 1 l1.2 -1 l1.2 1 l1.2 -1 l1.2 1 l1.2 -1 l1.2 1 l1.2 -1 l1.2 1 l1.2 -1 l1.2 1 l1.2 -1 l1.2 1 l1.2 -1 l1.2 1 l1.2 -1 l1.2 1 l1.2 -1 l1.2 1 l1.2 -1 l1.2 1 l1.2 -1 l1.2 1" fill="none" stroke="#d9534f" stroke-width="0.75" opacity="0.9"/></svg>
<div class="a" style="left:730.1px;top:398.7px;width:3.7px;height:3.7px;background:#111;border-radius:50%"></div>
<div class="t" style="left:736.00px;top:395.54px;font-size:10.00px;color:#111;font-family:'Liberation Sans',sans-serif;transform:scaleX(1.0125);transform-origin:0 0;">Діалектні</div>
<svg class="a" style="left:736px;top:404.8px;" width="43.299999999999955" height="2" viewBox="0 0 43.299999999999955 2"><path d="M0 1 l1.2 -1 l1.2 1 l1.2 -1 l1.2 1 l1.2 -1 l1.2 1 l1.2 -1 l1.2 1 l1.2 -1 l1.2 1 l1.2 -1 l1.2 1 l1.2 -1 l1.2 1 l1.2 -1 l1.2 1 l1.2 -1 l1.2 1 l1.2 -1 l1.2 1 l1.2 -1 l1.2 1 l1.2 -1 l1.2 1 l1.2 -1 l1.2 1 l1.2 -1 l1.2 1 l1.2 -1 l1.2 1 l1.2 -1 l1.2 1 l1.2 -1 l1.2 1 l1.2 -1 l1.2 1" fill="none" stroke="#d9534f" stroke-width="0.75" opacity="0.9"/></svg>
<div class="a" style="left:730.1px;top:412.0px;width:3.7px;height:3.7px;background:#111;border-radius:50%"></div>
<div class="t" style="left:736.00px;top:408.84px;font-size:10.00px;color:#111;font-family:'Liberation Sans',sans-serif;transform:scaleX(1.0129);transform-origin:0 0;">Розмовні</div>
<svg class="a" style="left:736px;top:418.1px;" width="42.299999999999955" height="2" viewBox="0 0 42.299999999999955 2"><path d="M0 1 l1.2 -1 l1.2 1 l1.2 -1 l1.2 1 l1.2 -1 l1.2 1 l1.2 -1 l1.2 1 l1.2 -1 l1.2 1 l1.2 -1 l1.2 1 l1.2 -1 l1.2 1 l1.2 -1 l1.2 1 l1.2 -1 l1.2 1 l1.2 -1 l1.2 1 l1.2 -1 l1.2 1 l1.2 -1 l1.2 1 l1.2 -1 l1.2 1 l1.2 -1 l1.2 1 l1.2 -1 l1.2 1 l1.2 -1 l1.2 1 l1.2 -1 l1.2 1" fill="none" stroke="#d9534f" stroke-width="0.75" opacity="0.9"/></svg>
<div class="a" style="left:730.1px;top:425.4px;width:3.7px;height:3.7px;background:#111;border-radius:50%"></div>
<div class="t" style="left:736.00px;top:422.24px;font-size:10.00px;color:#111;font-family:'Liberation Sans',sans-serif;transform:scaleX(0.9960);transform-origin:0 0;">Термінологічні</div>
<svg class="a" style="left:736px;top:431.5px;" width="66.70000000000005" height="2" viewBox="0 0 66.70000000000005 2"><path d="M0 1 l1.2 -1 l1.2 1 l1.2 -1 l1.2 1 l1.2 -1 l1.2 1 l1.2 -1 l1.2 1 l1.2 -1 l1.2 1 l1.2 -1 l1.2 1 l1.2 -1 l1.2 1 l1.2 -1 l1.2 1 l1.2 -1 l1.2 1 l1.2 -1 l1.2 1 l1.2 -1 l1.2 1 l1.2 -1 l1.2 1 l1.2 -1 l1.2 1 l1.2 -1 l1.2 1 l1.2 -1 l1.2 1 l1.2 -1 l1.2 1 l1.2 -1 l1.2 1 l1.2 -1 l1.2 1 l1.2 -1 l1.2 1 l1.2 -1 l1.2 1 l1.2 -1 l1.2 1 l1.2 -1 l1.2 1 l1.2 -1 l1.2 1 l1.2 -1 l1.2 1 l1.2 -1 l1.2 1 l1.2 -1 l1.2 1 l1.2 -1 l1.2 1" fill="none" stroke="#d9534f" stroke-width="0.75" opacity="0.9"/></svg>
<div class="a" style="left:730.1px;top:438.7px;width:3.7px;height:3.7px;background:#111;border-radius:50%"></div>
<div class="t" style="left:736.00px;top:435.54px;font-size:10.00px;color:#111;font-family:'Liberation Sans',sans-serif;transform:scaleX(0.9790);transform-origin:0 0;">Змішані</div>
<svg class="a" style="left:736px;top:444.8px;" width="35.700000000000045" height="2" viewBox="0 0 35.700000000000045 2"><path d="M0 1 l1.2 -1 l1.2 1 l1.2 -1 l1.2 1 l1.2 -1 l1.2 1 l1.2 -1 l1.2 1 l1.2 -1 l1.2 1 l1.2 -1 l1.2 1 l1.2 -1 l1.2 1 l1.2 -1 l1.2 1 l1.2 -1 l1.2 1 l1.2 -1 l1.2 1 l1.2 -1 l1.2 1 l1.2 -1 l1.2 1 l1.2 -1 l1.2 1 l1.2 -1 l1.2 1" fill="none" stroke="#d9534f" stroke-width="0.75" opacity="0.9"/></svg>
<div class="t" style="left:569.30px;top:451.54px;font-size:10.00px;color:#111;font-family:'Liberation Sans',sans-serif;transform:scaleX(0.9234);transform-origin:0 0;">Жанр</div>
<div class="a" style="left:730.1px;top:454.7px;width:3.7px;height:3.7px;background:#111;border-radius:50%"></div>
<div class="t" style="left:736.00px;top:451.54px;font-size:10.00px;color:#111;font-family:'Liberation Sans',sans-serif;transform:scaleX(1.0073);transform-origin:0 0;">Літературні •Фольклорні</div>
<svg class="a" style="left:736px;top:460.8px;" width="52" height="2" viewBox="0 0 52 2"><path d="M0 1 l1.2 -1 l1.2 1 l1.2 -1 l1.2 1 l1.2 -1 l1.2 1 l1.2 -1 l1.2 1 l1.2 -1 l1.2 1 l1.2 -1 l1.2 1 l1.2 -1 l1.2 1 l1.2 -1 l1.2 1 l1.2 -1 l1.2 1 l1.2 -1 l1.2 1 l1.2 -1 l1.2 1 l1.2 -1 l1.2 1 l1.2 -1 l1.2 1 l1.2 -1 l1.2 1 l1.2 -1 l1.2 1 l1.2 -1 l1.2 1 l1.2 -1 l1.2 1 l1.2 -1 l1.2 1 l1.2 -1 l1.2 1 l1.2 -1 l1.2 1 l1.2 -1 l1.2 1" fill="none" stroke="#d9534f" stroke-width="0.75" opacity="0.9"/></svg>
<svg class="a" style="left:796px;top:460.8px;" width="53" height="2" viewBox="0 0 53 2"><path d="M0 1 l1.2 -1 l1.2 1 l1.2 -1 l1.2 1 l1.2 -1 l1.2 1 l1.2 -1 l1.2 1 l1.2 -1 l1.2 1 l1.2 -1 l1.2 1 l1.2 -1 l1.2 1 l1.2 -1 l1.2 1 l1.2 -1 l1.2 1 l1.2 -1 l1.2 1 l1.2 -1 l1.2 1 l1.2 -1 l1.2 1 l1.2 -1 l1.2 1 l1.2 -1 l1.2 1 l1.2 -1 l1.2 1 l1.2 -1 l1.2 1 l1.2 -1 l1.2 1 l1.2 -1 l1.2 1 l1.2 -1 l1.2 1 l1.2 -1 l1.2 1 l1.2 -1 l1.2 1 l1.2 -1 l1.2 1" fill="none" stroke="#d9534f" stroke-width="0.75" opacity="0.9"/></svg>
<div class="a" style="left:730.1px;top:468.0px;width:3.7px;height:3.7px;background:#111;border-radius:50%"></div>
<div class="t" style="left:736.00px;top:464.84px;font-size:10.00px;color:#111;font-family:'Liberation Sans',sans-serif;transform:scaleX(1.0090);transform-origin:0 0;">Драматичні •Публіцистичні</div>
<svg class="a" style="left:736px;top:474.1px;" width="52" height="2" viewBox="0 0 52 2"><path d="M0 1 l1.2 -1 l1.2 1 l1.2 -1 l1.2 1 l1.2 -1 l1.2 1 l1.2 -1 l1.2 1 l1.2 -1 l1.2 1 l1.2 -1 l1.2 1 l1.2 -1 l1.2 1 l1.2 -1 l1.2 1 l1.2 -1 l1.2 1 l1.2 -1 l1.2 1 l1.2 -1 l1.2 1 l1.2 -1 l1.2 1 l1.2 -1 l1.2 1 l1.2 -1 l1.2 1 l1.2 -1 l1.2 1 l1.2 -1 l1.2 1 l1.2 -1 l1.2 1 l1.2 -1 l1.2 1 l1.2 -1 l1.2 1 l1.2 -1 l1.2 1 l1.2 -1 l1.2 1" fill="none" stroke="#d9534f" stroke-width="0.75" opacity="0.9"/></svg>
<svg class="a" style="left:796px;top:474.1px;" width="65.70000000000005" height="2" viewBox="0 0 65.70000000000005 2"><path d="M0 1 l1.2 -1 l1.2 1 l1.2 -1 l1.2 1 l1.2 -1 l1.2 1 l1.2 -1 l1.2 1 l1.2 -1 l1.2 1 l1.2 -1 l1.2 1 l1.2 -1 l1.2 1 l1.2 -1 l1.2 1 l1.2 -1 l1.2 1 l1.2 -1 l1.2 1 l1.2 -1 l1.2 1 l1.2 -1 l1.2 1 l1.2 -1 l1.2 1 l1.2 -1 l1.2 1 l1.2 -1 l1.2 1 l1.2 -1 l1.2 1 l1.2 -1 l1.2 1 l1.2 -1 l1.2 1 l1.2 -1 l1.2 1 l1.2 -1 l1.2 1 l1.2 -1 l1.2 1 l1.2 -1 l1.2 1 l1.2 -1 l1.2 1 l1.2 -1 l1.2 1 l1.2 -1 l1.2 1 l1.2 -1 l1.2 1 l1.2 -1 l1.2 1" fill="none" stroke="#d9534f" stroke-width="0.75" opacity="0.9"/></svg>
<div class="t" style="left:569.30px;top:482.94px;font-size:10.00px;color:#111;font-family:'Liberation Sans',sans-serif;transform:scaleX(0.9726);transform-origin:0 0;">Розмітка</div>
<svg class="a" style="left:569.3px;top:492.2px;" width="39.0" height="2" viewBox="0 0 39.0 2"><path d="M0 1 l1.2 -1 l1.2 1 l1.2 -1 l1.2 1 l1.2 -1 l1.2 1 l1.2 -1 l1.2 1 l1.2 -1 l1.2 1 l1.2 -1 l1.2 1 l1.2 -1 l1.2 1 l1.2 -1 l1.2 1 l1.2 -1 l1.2 1 l1.2 -1 l1.2 1 l1.2 -1 l1.2 1 l1.2 -1 l1.2 1 l1.2 -1 l1.2 1 l1.2 -1 l1.2 1 l1.2 -1 l1.2 1 l1.2 -1 l1.2 1" fill="none" stroke="#d9534f" stroke-width="0.75" opacity="0.9"/></svg>
<div class="a" style="left:730.1px;top:486.09999999999997px;width:3.7px;height:3.7px;background:#111;border-radius:50%"></div>
<div class="t" style="left:736.00px;top:482.94px;font-size:10.00px;color:#111;font-family:'Liberation Sans',sans-serif;transform:scaleX(1.0028);transform-origin:0 0;">Розмічені</div>
<svg class="a" style="left:736px;top:492.2px;" width="44" height="2" viewBox="0 0 44 2"><path d="M0 1 l1.2 -1 l1.2 1 l1.2 -1 l1.2 1 l1.2 -1 l1.2 1 l1.2 -1 l1.2 1 l1.2 -1 l1.2 1 l1.2 -1 l1.2 1 l1.2 -1 l1.2 1 l1.2 -1 l1.2 1 l1.2 -1 l1.2 1 l1.2 -1 l1.2 1 l1.2 -1 l1.2 1 l1.2 -1 l1.2 1 l1.2 -1 l1.2 1 l1.2 -1 l1.2 1 l1.2 -1 l1.2 1 l1.2 -1 l1.2 1 l1.2 -1 l1.2 1 l1.2 -1 l1.2 1" fill="none" stroke="#d9534f" stroke-width="0.75" opacity="0.9"/></svg>
<div class="a" style="left:730.1px;top:499.4px;width:3.7px;height:3.7px;background:#111;border-radius:50%"></div>
<div class="t" style="left:736.00px;top:496.24px;font-size:10.00px;color:#111;font-family:'Liberation Sans',sans-serif;transform:scaleX(1.0055);transform-origin:0 0;">Нерозмічені</div>
<svg class="a" style="left:736px;top:505.5px;" width="56.299999999999955" height="2" viewBox="0 0 56.299999999999955 2"><path d="M0 1 l1.2 -1 l1.2 1 l1.2 -1 l1.2 1 l1.2 -1 l1.2 1 l1.2 -1 l1.2 1 l1.2 -1 l1.2 1 l1.2 -1 l1.2 1 l1.2 -1 l1.2 1 l1.2 -1 l1.2 1 l1.2 -1 l1.2 1 l1.2 -1 l1.2 1 l1.2 -1 l1.2 1 l1.2 -1 l1.2 1 l1.2 -1 l1.2 1 l1.2 -1 l1.2 1 l1.2 -1 l1.2 1 l1.2 -1 l1.2 1 l1.2 -1 l1.2 1 l1.2 -1 l1.2 1 l1.2 -1 l1.2 1 l1.2 -1 l1.2 1 l1.2 -1 l1.2 1 l1.2 -1 l1.2 1 l1.2 -1 l1.2 1" fill="none" stroke="#d9534f" stroke-width="0.75" opacity="0.9"/></svg>
<div class="t" style="left:569.30px;top:513.94px;font-size:10.00px;color:#111;font-family:'Liberation Sans',sans-serif;font-weight:bold;transform:scaleX(0.9498);transform-origin:0 0;">Характер розмітки</div>
<svg class="a" style="left:617px;top:523.2px;" width="39" height="2" viewBox="0 0 39 2"><path d="M0 1 l1.2 -1 l1.2 1 l1.2 -1 l1.2 1 l1.2 -1 l1.2 1 l1.2 -1 l1.2 1 l1.2 -1 l1.2 1 l1.2 -1 l1.2 1 l1.2 -1 l1.2 1 l1.2 -1 l1.2 1 l1.2 -1 l1.2 1 l1.2 -1 l1.2 1 l1.2 -1 l1.2 1 l1.2 -1 l1.2 1 l1.2 -1 l1.2 1 l1.2 -1 l1.2 1 l1.2 -1 l1.2 1 l1.2 -1 l1.2 1" fill="none" stroke="#d9534f" stroke-width="0.75" opacity="0.9"/></svg>
<div class="a" style="left:730.1px;top:517.1px;width:3.7px;height:3.7px;background:#111;border-radius:50%"></div>
<div class="t" style="left:736.00px;top:513.94px;font-size:10.00px;color:#111;font-family:'Liberation Sans',sans-serif;font-weight:bold;transform:scaleX(0.9466);transform-origin:0 0;">Морфологічні •Синтаксичні</div>
<svg class="a" style="left:736px;top:523.2px;" width="64" height="2" viewBox="0 0 64 2"><path d="M0 1 l1.2 -1 l1.2 1 l1.2 -1 l1.2 1 l1.2 -1 l1.2 1 l1.2 -1 l1.2 1 l1.2 -1 l1.2 1 l1.2 -1 l1.2 1 l1.2 -1 l1.2 1 l1.2 -1 l1.2 1 l1.2 -1 l1.2 1 l1.2 -1 l1.2 1 l1.2 -1 l1.2 1 l1.2 -1 l1.2 1 l1.2 -1 l1.2 1 l1.2 -1 l1.2 1 l1.2 -1 l1.2 1 l1.2 -1 l1.2 1 l1.2 -1 l1.2 1 l1.2 -1 l1.2 1 l1.2 -1 l1.2 1 l1.2 -1 l1.2 1 l1.2 -1 l1.2 1 l1.2 -1 l1.2 1 l1.2 -1 l1.2 1 l1.2 -1 l1.2 1 l1.2 -1 l1.2 1 l1.2 -1 l1.2 1" fill="none" stroke="#d9534f" stroke-width="0.75" opacity="0.9"/></svg>
<svg class="a" style="left:808px;top:523.2px;" width="57" height="2" viewBox="0 0 57 2"><path d="M0 1 l1.2 -1 l1.2 1 l1.2 -1 l1.2 1 l1.2 -1 l1.2 1 l1.2 -1 l1.2 1 l1.2 -1 l1.2 1 l1.2 -1 l1.2 1 l1.2 -1 l1.2 1 l1.2 -1 l1.2 1 l1.2 -1 l1.2 1 l1.2 -1 l1.2 1 l1.2 -1 l1.2 1 l1.2 -1 l1.2 1 l1.2 -1 l1.2 1 l1.2 -1 l1.2 1 l1.2 -1 l1.2 1 l1.2 -1 l1.2 1 l1.2 -1 l1.2 1 l1.2 -1 l1.2 1 l1.2 -1 l1.2 1 l1.2 -1 l1.2 1 l1.2 -1 l1.2 1 l1.2 -1 l1.2 1 l1.2 -1 l1.2 1" fill="none" stroke="#d9534f" stroke-width="0.75" opacity="0.9"/></svg>
<div class="a" style="left:730.1px;top:530.4px;width:3.7px;height:3.7px;background:#111;border-radius:50%"></div>
<div class="t" style="left:736.00px;top:527.24px;font-size:10.00px;color:#111;font-family:'Liberation Sans',sans-serif;font-weight:bold;transform:scaleX(0.9531);transform-origin:0 0;">Семантичні •Просодичні</div>
<svg class="a" style="left:736px;top:536.5px;" width="55" height="2" viewBox="0 0 55 2"><path d="M0 1 l1.2 -1 l1.2 1 l1.2 -1 l1.2 1 l1.2 -1 l1.2 1 l1.2 -1 l1.2 1 l1.2 -1 l1.2 1 l1.2 -1 l1.2 1 l1.2 -1 l1.2 1 l1.2 -1 l1.2 1 l1.2 -1 l1.2 1 l1.2 -1 l1.2 1 l1.2 -1 l1.2 1 l1.2 -1 l1.2 1 l1.2 -1 l1.2 1 l1.2 -1 l1.2 1 l1.2 -1 l1.2 1 l1.2 -1 l1.2 1 l1.2 -1 l1.2 1 l1.2 -1 l1.2 1 l1.2 -1 l1.2 1 l1.2 -1 l1.2 1 l1.2 -1 l1.2 1 l1.2 -1 l1.2 1" fill="none" stroke="#d9534f" stroke-width="0.75" opacity="0.9"/></svg>
<svg class="a" style="left:799px;top:536.5px;" width="52.700000000000045" height="2" viewBox="0 0 52.700000000000045 2"><path d="M0 1 l1.2 -1 l1.2 1 l1.2 -1 l1.2 1 l1.2 -1 l1.2 1 l1.2 -1 l1.2 1 l1.2 -1 l1.2 1 l1.2 -1 l1.2 1 l1.2 -1 l1.2 1 l1.2 -1 l1.2 1 l1.2 -1 l1.2 1 l1.2 -1 l1.2 1 l1.2 -1 l1.2 1 l1.2 -1 l1.2 1 l1.2 -1 l1.2 1 l1.2 -1 l1.2 1 l1.2 -1 l1.2 1 l1.2 -1 l1.2 1 l1.2 -1 l1.2 1 l1.2 -1 l1.2 1 l1.2 -1 l1.2 1 l1.2 -1 l1.2 1 l1.2 -1 l1.2 1" fill="none" stroke="#d9534f" stroke-width="0.75" opacity="0.9"/></svg></div>
<div class="a" style="left:22.3px;top:406px;width:110.2px;height:61.3px;overflow:hidden"><div class="a" style="left:0;top:0;width:1200px;height:675px;transform-origin:0 0;transform:scale(0.16017) translate(-205px,-173px)"><div class="a" style="left:205px;top:173px;width:688px;height:387px;background:#fff"></div>
<div class="t" style="left:234.10px;top:195.09px;font-size:12.30px;color:#1b2a4a;font-family:'Liberation Sans',sans-serif;transform:scaleX(1.1154);transform-origin:0 0;">О. Демська-Кульчицька</div>
<svg class="a" style="left:251px;top:206.5px;" width="54" height="2" viewBox="0 0 54 2"><path d="M0 1 Q1.5 0 3 1 T6 1 T9 1 T12 1 T15 1 T18 1 T21 1 T24 1 T27 1 T30 1 T33 1 T36 1 T39 1 T42 1 T45 1 T48 1 T51 1 T54 1" fill="none" stroke="#e07a7a" stroke-width="0.6"/></svg>
<div class="t" style="left:456.70px;top:192.18px;font-size:21.40px;color:#111;font-family:'Liberation Sans',sans-serif;font-weight:bold;transform:scaleX(0.9920);transform-origin:0 0;">ТИПИ КОРПУСІВ</div>
<div class="a" style="left:218.5px;top:220.0px;width:340px;height:271px;background:#c6e2fa;border-radius:5px;filter:blur(2.5px)"></div>
<div class="a" style="left:221.5px;top:223.0px;width:334px;height:265px;background:#98c9f2;border-radius:2px;filter:blur(1.2px)"></div>
<div class="a" style="left:218.5px;top:483.0px;width:340px;height:73px;background:#c6e2fa;border-radius:5px;filter:blur(2.5px)"></div>
<div class="a" style="left:221.5px;top:486.0px;width:334px;height:67px;background:#98c9f2;border-radius:2px;filter:blur(1.2px)"></div>
<div class="a" style="left:225px;top:226.5px;width:327px;height:258px;background:#fbfbfa"></div>
<div class="a" style="left:225px;top:226.5px;width:3.5px;height:258px;background:linear-gradient(90deg,#c9c9c9,#efefef)"></div>
<div class="a" style="left:225px;top:226.5px;width:327px;height:2px;background:#e4e4e4"></div>
<div class="a" style="left:540px;top:226.5px;width:12px;height:258px;background:linear-gradient(90deg,rgba(190,190,190,0),#b9b9b9 70%,#8d8d8d)"></div>
<div class="a" style="left:225px;top:479.0px;width:327px;height:5.5px;background:linear-gradient(180deg,#9a9a9a,#7a7a7a)"></div>
<div class="a" style="left:225px;top:489.5px;width:327px;height:60px;background:#fbfbfa"></div>
<div class="a" style="left:225px;top:489.5px;width:3.5px;height:60px;background:linear-gradient(90deg,#c9c9c9,#efefef)"></div>
<div class="a" style="left:225px;top:489.5px;width:327px;height:2px;background:#e4e4e4"></div>
<div class="a" style="left:540px;top:489.5px;width:12px;height:60px;background:linear-gradient(90deg,rgba(190,190,190,0),#b9b9b9 70%,#8d8d8d)"></div>
<div class="a" style="left:225px;top:544.0px;width:327px;height:5.5px;background:linear-gradient(180deg,#9a9a9a,#7a7a7a)"></div>
<div class="a" style="left:233.4px;top:246px;width:138.1px;height:14px;border:1px solid #8a8a8a;background:rgba(255,255,255,.6)"></div>
<div class="a" style="left:253.5px;top:231.5px;width:99.0px;height:15.0px;border:1px solid #8a8a8a;background:rgba(255,255,255,.6)"></div>
<div class="a" style="left:409px;top:246px;width:133.60000000000002px;height:14px;border:1px solid #8a8a8a;background:rgba(255,255,255,.6)"></div>
<div class="a" style="left:428.5px;top:231.5px;width:99.0px;height:15.0px;border:1px solid #8a8a8a;background:rgba(255,255,255,.6)"></div>
<div class="t" style="left:279.70px;top:235.07px;font-size:7.20px;color:#3a3a3a;font-family:'Liberation Serif',serif;font-weight:bold;transform:scaleX(0.9913);transform-origin:0 0;-webkit-text-stroke:0.05px currentColor;">Повнотекстові</div>
<div class="t" style="left:459.00px;top:235.07px;font-size:7.20px;color:#3a3a3a;font-family:'Liberation Serif',serif;font-weight:bold;transform:scaleX(0.9718);transform-origin:0 0;-webkit-text-stroke:0.05px currentColor;">Фрагментні</div>
<div class="t" style="left:248.40px;top:248.94px;font-size:7.00px;color:#606060;font-family:'Liberation Serif',serif;font-style:italic;transform:scaleX(1.0463);transform-origin:0 0;-webkit-text-stroke:0.1px currentColor;">тексти в корпусі подані повністю</div>
<div class="t" style="left:432.80px;top:248.94px;font-size:7.00px;color:#606060;font-family:'Liberation Serif',serif;font-style:italic;transform:scaleX(1.0542);transform-origin:0 0;-webkit-text-stroke:0.1px currentColor;">подані фрагменти текстів</div>
<svg class="a" style="left:386px;top:245.1px;" width="10" height="7" viewBox="0 0 10 7"><path d="M3 0.5 L0.5 3.5 L3 6.5 M7 0.5 L9.5 3.5 L7 6.5 M1.8 2.2 H8.2 M1.8 4.8 H8.2" fill="none" stroke="#606060" stroke-width="0.7"/></svg>
<div class="a" style="left:233.4px;top:283.4px;width:138.1px;height:32.10000000000002px;border:1px solid #8a8a8a;background:rgba(255,255,255,.6)"></div>
<div class="a" style="left:253.5px;top:269.6px;width:99.0px;height:14.199999999999989px;border:1px solid #8a8a8a;background:rgba(255,255,255,.6)"></div>
<div class="a" style="left:409px;top:283.4px;width:133.60000000000002px;height:32.10000000000002px;border:1px solid #8a8a8a;background:rgba(255,255,255,.6)"></div>
<div class="a" style="left:428.5px;top:269.6px;width:99.0px;height:14.199999999999989px;border:1px solid #8a8a8a;background:rgba(255,255,255,.6)"></div>
<div class="t" style="left:281.50px;top:272.57px;font-size:7.20px;color:#3a3a3a;font-family:'Liberation Serif',serif;font-weight:bold;transform:scaleX(0.9856);transform-origin:0 0;-webkit-text-stroke:0.05px currentColor;">Дослідницькі</div>
<div class="t" style="left:457.70px;top:272.57px;font-size:7.20px;color:#3a3a3a;font-family:'Liberation Serif',serif;font-weight:bold;transform:scaleX(0.9683);transform-origin:0 0;-webkit-text-stroke:0.05px currentColor;">Ілюстративні</div>
<div class="t" style="left:255.60px;top:284.94px;font-size:7.00px;color:#606060;font-family:'Liberation Serif',serif;font-style:italic;transform:scaleX(1.0271);transform-origin:0 0;-webkit-text-stroke:0.1px currentColor;">застосовують у лінгвістичних</div>
<div class="t" style="left:241.50px;top:293.24px;font-size:7.00px;color:#606060;font-family:'Liberation Serif',serif;font-style:italic;transform:scaleX(1.0473);transform-origin:0 0;-webkit-text-stroke:0.1px currentColor;">дослідженнях із метою формулювання</div>
<div class="t" style="left:264.00px;top:301.44px;font-size:7.00px;color:#606060;font-family:'Liberation Serif',serif;font-style:italic;transform:scaleX(0.9332);transform-origin:0 0;-webkit-text-stroke:0.1px currentColor;">нових теорій, концепцій тощо</div>
<div class="t" style="left:417.00px;top:284.94px;font-size:7.00px;color:#606060;font-family:'Liberation Serif',serif;font-style:italic;transform:scaleX(1.0384);transform-origin:0 0;-webkit-text-stroke:0.1px currentColor;">застосовують для підтвердження уже</div>
<div class="t" style="left:418.70px;top:293.24px;font-size:7.00px;color:#606060;font-family:'Liberation Serif',serif;font-style:italic;transform:scaleX(1.0302);transform-origin:0 0;-webkit-text-stroke:0.1px currentColor;">висловлених теоретичних положень чи</div>
<div class="t" style="left:451.70px;top:301.44px;font-size:7.00px;color:#606060;font-family:'Liberation Serif',serif;font-style:italic;transform:scaleX(1.0397);transform-origin:0 0;-webkit-text-stroke:0.1px currentColor;">гіпотез про мову</div>
<svg class="a" style="left:386px;top:282.5px;" width="10" height="7" viewBox="0 0 10 7"><path d="M3 0.5 L0.5 3.5 L3 6.5 M7 0.5 L9.5 3.5 L7 6.5 M1.8 2.2 H8.2 M1.8 4.8 H8.2" fill="none" stroke="#606060" stroke-width="0.7"/></svg>
<div class="a" style="left:233.4px;top:338.6px;width:138.1px;height:25.899999999999977px;border:1px solid #8a8a8a;background:rgba(255,255,255,.6)"></div>
<div class="a" style="left:253.5px;top:325.4px;width:99.0px;height:13.600000000000023px;border:1px solid #8a8a8a;background:rgba(255,255,255,.6)"></div>
<div class="a" style="left:409px;top:338.6px;width:133.60000000000002px;height:25.899999999999977px;border:1px solid #8a8a8a;background:rgba(255,255,255,.6)"></div>
<div class="a" style="left:428.5px;top:325.4px;width:99.0px;height:13.600000000000023px;border:1px solid #8a8a8a;background:rgba(255,255,255,.6)"></div>
<div class="t" style="left:281.50px;top:328.07px;font-size:7.20px;color:#3a3a3a;font-family:'Liberation Serif',serif;font-weight:bold;transform:scaleX(0.9856);transform-origin:0 0;-webkit-text-stroke:0.05px currentColor;">Дослідницькі</div>
<div class="t" style="left:453.80px;top:328.07px;font-size:7.20px;color:#3a3a3a;font-family:'Liberation Serif',serif;font-weight:bold;transform:scaleX(0.9581);transform-origin:0 0;-webkit-text-stroke:0.05px currentColor;">Інтерпретаційні</div>
<div class="t" style="left:241.50px;top:340.44px;font-size:7.00px;color:#606060;font-family:'Liberation Serif',serif;font-style:italic;transform:scaleX(1.0384);transform-origin:0 0;-webkit-text-stroke:0.1px currentColor;">подають тексти як цілісні об’єкти, як</div>
<div class="t" style="left:252.00px;top:349.24px;font-size:7.00px;color:#606060;font-family:'Liberation Serif',serif;font-style:italic;transform:scaleX(1.0366);transform-origin:0 0;-webkit-text-stroke:0.1px currentColor;">факт реалізації мовної системи</div>
<div class="t" style="left:415.70px;top:340.44px;font-size:7.00px;color:#606060;font-family:'Liberation Serif',serif;font-style:italic;transform:scaleX(1.0441);transform-origin:0 0;-webkit-text-stroke:0.1px currentColor;">становлять інформаційно-довідкові та</div>
<div class="t" style="left:452.60px;top:349.24px;font-size:7.00px;color:#606060;font-family:'Liberation Serif',serif;font-style:italic;transform:scaleX(0.9018);transform-origin:0 0;-webkit-text-stroke:0.1px currentColor;">дослідницькі системи</div>
<svg class="a" style="left:386px;top:338.1px;" width="10" height="7" viewBox="0 0 10 7"><path d="M3 0.5 L0.5 3.5 L3 6.5 M7 0.5 L9.5 3.5 L7 6.5 M1.8 2.2 H8.2 M1.8 4.8 H8.2" fill="none" stroke="#606060" stroke-width="0.7"/></svg>
<div class="a" style="left:233.4px;top:390.4px;width:137.6px;height:38.10000000000002px;border:1px solid #8a8a8a;background:rgba(255,255,255,.6)"></div>
<div class="a" style="left:253.5px;top:376.6px;width:100.0px;height:14.199999999999989px;border:1px solid #8a8a8a;background:rgba(255,255,255,.6)"></div>
<div class="a" style="left:409px;top:390.4px;width:137px;height:38.10000000000002px;border:1px solid #8a8a8a;background:rgba(255,255,255,.6)"></div>
<div class="a" style="left:426px;top:376.6px;width:99.60000000000002px;height:14.199999999999989px;border:1px solid #8a8a8a;background:rgba(255,255,255,.6)"></div>
<div class="t" style="left:279.70px;top:379.57px;font-size:7.20px;color:#3a3a3a;font-family:'Liberation Serif',serif;font-weight:bold;transform:scaleX(0.9815);transform-origin:0 0;-webkit-text-stroke:0.05px currentColor;">Моніторингові</div>
<div class="t" style="left:460.70px;top:379.57px;font-size:7.20px;color:#3a3a3a;font-family:'Liberation Serif',serif;font-weight:bold;transform:scaleX(1.0021);transform-origin:0 0;-webkit-text-stroke:0.05px currentColor;">Статичні</div>
<div class="t" style="left:284.50px;top:391.14px;font-size:7.00px;color:#606060;font-family:'Liberation Serif',serif;transform:scaleX(0.9939);transform-origin:0 0;">(динамічні)</div>
<div class="t" style="left:235.50px;top:400.04px;font-size:7.00px;color:#606060;font-family:'Liberation Serif',serif;font-style:italic;transform:scaleX(1.0371);transform-origin:0 0;-webkit-text-stroke:0.1px currentColor;">забезпечують можливість відстежування</div>
<div class="t" style="left:238.30px;top:408.74px;font-size:7.00px;color:#606060;font-family:'Liberation Serif',serif;font-style:italic;transform:scaleX(1.0487);transform-origin:0 0;-webkit-text-stroke:0.1px currentColor;">змін у мові, враховуючи аспект діахронії</div>
<div class="t" style="left:423.80px;top:391.94px;font-size:7.00px;color:#606060;font-family:'Liberation Serif',serif;font-style:italic;transform:scaleX(1.0370);transform-origin:0 0;-webkit-text-stroke:0.1px currentColor;">засвідчують стан мови на певному</div>
<div class="t" style="left:450.00px;top:400.04px;font-size:7.00px;color:#606060;font-family:'Liberation Serif',serif;font-style:italic;transform:scaleX(1.0620);transform-origin:0 0;-webkit-text-stroke:0.1px currentColor;">синхронному зрізі</div>
<svg class="a" style="left:386px;top:396.5px;" width="10" height="7" viewBox="0 0 10 7"><path d="M3 0.5 L0.5 3.5 L3 6.5 M7 0.5 L9.5 3.5 L7 6.5 M1.8 2.2 H8.2 M1.8 4.8 H8.2" fill="none" stroke="#606060" stroke-width="0.7"/></svg>
<div class="a" style="left:233.4px;top:452.6px;width:137.6px;height:25.399999999999977px;border:1px solid #8a8a8a;background:rgba(255,255,255,.6)"></div>
<div class="a" style="left:253px;top:439.6px;width:99px;height:13.399999999999977px;border:1px solid #8a8a8a;background:rgba(255,255,255,.6)"></div>
<div class="a" style="left:409px;top:452.6px;width:137px;height:25.399999999999977px;border:1px solid #8a8a8a;background:rgba(255,255,255,.6)"></div>
<div class="a" style="left:433.5px;top:439.6px;width:99.0px;height:13.399999999999977px;border:1px solid #8a8a8a;background:rgba(255,255,255,.6)"></div>
<div class="t" style="left:286.60px;top:441.57px;font-size:7.20px;color:#3a3a3a;font-family:'Liberation Serif',serif;font-weight:bold;transform:scaleX(0.9796);transform-origin:0 0;-webkit-text-stroke:0.05px currentColor;">Діахронні</div>
<div class="t" style="left:465.80px;top:441.57px;font-size:7.20px;color:#3a3a3a;font-family:'Liberation Serif',serif;font-weight:bold;transform:scaleX(0.9943);transform-origin:0 0;-webkit-text-stroke:0.05px currentColor;">Синхронні</div>
<div class="t" style="left:234.00px;top:454.94px;font-size:7.00px;color:#606060;font-family:'Liberation Serif',serif;font-style:italic;transform:scaleX(1.0456);transform-origin:0 0;-webkit-text-stroke:0.1px currentColor;">репрезентують мову в понадчасовому зрізі</div>
<div class="t" style="left:418.70px;top:454.94px;font-size:7.00px;color:#606060;font-family:'Liberation Serif',serif;font-style:italic;transform:scaleX(1.0367);transform-origin:0 0;-webkit-text-stroke:0.1px currentColor;">репрезентують мову або тип тексту</div>
<div class="t" style="left:414.80px;top:463.14px;font-size:7.00px;color:#606060;font-family:'Liberation Serif',serif;font-style:italic;transform:scaleX(1.0512);transform-origin:0 0;-webkit-text-stroke:0.1px currentColor;">певного визначеного часового проміжку</div>
<svg class="a" style="left:386px;top:450.5px;" width="10" height="7" viewBox="0 0 10 7"><path d="M3 0.5 L0.5 3.5 L3 6.5 M7 0.5 L9.5 3.5 L7 6.5 M1.8 2.2 H8.2 M1.8 4.8 H8.2" fill="none" stroke="#606060" stroke-width="0.7"/></svg>
<div class="a" style="left:229.5px;top:511px;width:139.5px;height:33px;border:1px solid #8a8a8a;background:rgba(255,255,255,.6)"></div>
<div class="a" style="left:255px;top:497.6px;width:100.5px;height:13.799999999999955px;border:1px solid #8a8a8a;background:rgba(255,255,255,.6)"></div>
<div class="a" style="left:408px;top:511px;width:139.60000000000002px;height:33px;border:1px solid #8a8a8a;background:rgba(255,255,255,.6)"></div>
<div class="a" style="left:428.5px;top:497.6px;width:99.5px;height:13.799999999999955px;border:1px solid #8a8a8a;background:rgba(255,255,255,.6)"></div>
<div class="t" style="left:281.50px;top:499.57px;font-size:7.20px;color:#3a3a3a;font-family:'Liberation Serif',serif;font-weight:bold;transform:scaleX(0.9800);transform-origin:0 0;-webkit-text-stroke:0.05px currentColor;">Загальномовні</div>
<div class="t" style="left:454.70px;top:499.57px;font-size:7.20px;color:#3a3a3a;font-family:'Liberation Serif',serif;font-weight:bold;transform:scaleX(0.9958);transform-origin:0 0;-webkit-text-stroke:0.05px currentColor;">Спеціалізовані</div>
<div class="t" style="left:246.60px;top:513.44px;font-size:7.00px;color:#606060;font-family:'Liberation Serif',serif;font-style:italic;transform:scaleX(1.0448);transform-origin:0 0;-webkit-text-stroke:0.1px currentColor;">репрезентують загальнонародну,</div>
<div class="t" style="left:272.50px;top:522.44px;font-size:7.00px;color:#606060;font-family:'Liberation Serif',serif;font-style:italic;transform:scaleX(1.0471);transform-origin:0 0;-webkit-text-stroke:0.1px currentColor;">національну мову</div>
<div class="t" style="left:420.00px;top:513.44px;font-size:7.00px;color:#606060;font-family:'Liberation Serif',serif;font-style:italic;transform:scaleX(1.0524);transform-origin:0 0;-webkit-text-stroke:0.1px currentColor;">скеровані на розв’язання часткових,</div>
<div class="t" style="left:409.70px;top:522.44px;font-size:7.00px;color:#606060;font-family:'Liberation Serif',serif;font-style:italic;transform:scaleX(1.0613);transform-origin:0 0;-webkit-text-stroke:0.1px currentColor;">галузевих, особливих, специфічних науково-</div>
<div class="t" style="left:450.00px;top:530.94px;font-size:7.00px;color:#606060;font-family:'Liberation Serif',serif;font-style:italic;transform:scaleX(1.0459);transform-origin:0 0;-webkit-text-stroke:0.1px currentColor;">дослідних завдань</div>
<svg class="a" style="left:385px;top:510.5px;" width="10" height="7" viewBox="0 0 10 7"><path d="M3 0.5 L0.5 3.5 L3 6.5 M7 0.5 L9.5 3.5 L7 6.5 M1.8 2.2 H8.2 M1.8 4.8 H8.2" fill="none" stroke="#606060" stroke-width="0.7"/></svg>
<div class="a" style="left:564.4px;top:238.5px;width:321.4px;height:19px;background:#5b9bd5"></div>
<div class="a" style="left:724.9px;top:238.5px;width:1px;height:19px;background:#ffffff;opacity:.8"></div>
<div class="a" style="left:564.4px;top:260px;width:160.5px;height:41.5px;background:#d2daeb"></div>
<div class="a" style="left:725.9px;top:260px;width:159.89999999999998px;height:41.5px;background:#d2daeb"></div>
<div class="a" style="left:564.4px;top:302.5px;width:160.5px;height:31.0px;background:#e9ecf5"></div>
<div class="a" style="left:725.9px;top:302.5px;width:159.89999999999998px;height:31.0px;background:#e9ecf5"></div>
<div class="a" style="left:564.4px;top:334.5px;width:160.5px;height:42.0px;background:#d2daeb"></div>
<div class="a" style="left:725.9px;top:334.5px;width:159.89999999999998px;height:42.0px;background:#d2daeb"></div>
<div class="a" style="left:564.4px;top:377.5px;width:160.5px;height:69.0px;background:#e9ecf5"></div>
<div class="a" style="left:725.9px;top:377.5px;width:159.89999999999998px;height:69.0px;background:#e9ecf5"></div>
<div class="a" style="left:564.4px;top:448px;width:160.5px;height:29.5px;background:#d2daeb"></div>
<div class="a" style="left:725.9px;top:448px;width:159.89999999999998px;height:29.5px;background:#d2daeb"></div>
<div class="a" style="left:564.4px;top:478.5px;width:160.5px;height:30.5px;background:#e9ecf5"></div>
<div class="a" style="left:725.9px;top:478.5px;width:159.89999999999998px;height:30.5px;background:#e9ecf5"></div>
<div class="a" style="left:564.4px;top:510px;width:160.5px;height:29.5px;background:#d2daeb"></div>
<div class="a" style="left:725.9px;top:510px;width:159.89999999999998px;height:29.5px;background:#d2daeb"></div>
<div class="t" style="left:621.80px;top:244.17px;font-size:10.20px;color:#ffffff;font-family:'Liberation Sans',sans-serif;font-weight:bold;transform:scaleX(1.0701);transform-origin:0 0;">ОЗНАКИ</div>
<div class="t" style="left:767.60px;top:244.17px;font-size:10.20px;color:#ffffff;font-family:'Liberation Sans',sans-serif;font-weight:bold;transform:scaleX(1.0820);transform-origin:0 0;">Типи корпусів</div>
<svg class="a" style="left:767.6px;top:254.5px;" width="31.399999999999977" height="2" viewBox="0 0 31.399999999999977 2"><path d="M0 1 l1.2 -1 l1.2 1 l1.2 -1 l1.2 1 l1.2 -1 l1.2 1 l1.2 -1 l1.2 1 l1.2 -1 l1.2 1 l1.2 -1 l1.2 1 l1.2 -1 l1.2 1 l1.2 -1 l1.2 1 l1.2 -1 l1.2 1 l1.2 -1 l1.2 1 l1.2 -1 l1.2 1 l1.2 -1 l1.2 1 l1.2 -1 l1.2 1" fill="none" stroke="#d9534f" stroke-width="0.75" opacity="0.9"/></svg>
<svg class="a" style="left:802px;top:254.5px;" width="42.60000000000002" height="2" viewBox="0 0 42.60000000000002 2"><path d="M0 1 l1.2 -1 l1.2 1 l1.2 -1 l1.2 1 l1.2 -1 l1.2 1 l1.2 -1 l1.2 1 l1.2 -1 l1.2 1 l1.2 -1 l1.2 1 l1.2 -1 l1.2 1 l1.2 -1 l1.2 1 l1.2 -1 l1.2 1 l1.2 -1 l1.2 1 l1.2 -1 l1.2 1 l1.2 -1 l1.2 1 l1.2 -1 l1.2 1 l1.2 -1 l1.2 1 l1.2 -1 l1.2 1 l1.2 -1 l1.2 1 l1.2 -1 l1.2 1" fill="none" stroke="#d9534f" stroke-width="0.75" opacity="0.9"/></svg>
<div class="t" style="left:569.30px;top:263.74px;font-size:10.00px;color:#111;font-family:'Liberation Sans',sans-serif;transform:scaleX(0.9605);transform-origin:0 0;">Тип даних</div>
<svg class="a" style="left:590px;top:273px;" width="24.399999999999977" height="2" viewBox="0 0 24.399999999999977 2"><path d="M0 1 l1.2 -1 l1.2 1 l1.2 -1 l1.2 1 l1.2 -1 l1.2 1 l1.2 -1 l1.2 1 l1.2 -1 l1.2 1 l1.2 -1 l1.2 1 l1.2 -1 l1.2 1 l1.2 -1 l1.2 1 l1.2 -1 l1.2 1 l1.2 -1 l1.2 1" fill="none" stroke="#d9534f" stroke-width="0.75" opacity="0.9"/></svg>
<div class="a" style="left:730.1px;top:266.9px;width:3.7px;height:3.7px;background:#111;border-radius:50%"></div>
<div class="t" style="left:736.00px;top:263.74px;font-size:10.00px;color:#111;font-family:'Liberation Sans',sans-serif;transform:scaleX(0.9920);transform-origin:0 0;">Письменні</div>
<svg class="a" style="left:736px;top:273.0px;" width="48.299999999999955" height="2" viewBox="0 0 48.299999999999955 2"><path d="M0 1 l1.2 -1 l1.2 1 l1.2 -1 l1.2 1 l1.2 -1 l1.2 1 l1.2 -1 l1.2 1 l1.2 -1 l1.2 1 l1.2 -1 l1.2 1 l1.2 -1 l1.2 1 l1.2 -1 l1.2 1 l1.2 -1 l1.2 1 l1.2 -1 l1.2 1 l1.2 -1 l1.2 1 l1.2 -1 l1.2 1 l1.2 -1 l1.2 1 l1.2 -1 l1.2 1 l1.2 -1 l1.2 1 l1.2 -1 l1.2 1 l1.2 -1 l1.2 1 l1.2 -1 l1.2 1 l1.2 -1 l1.2 1 l1.2 -1 l1.2 1" fill="none" stroke="#d9534f" stroke-width="0.75" opacity="0.9"/></svg>
<div class="a" style="left:730.1px;top:280.2px;width:3.7px;height:3.7px;background:#111;border-radius:50%"></div>
<div class="t" style="left:736.00px;top:277.04px;font-size:10.00px;color:#111;font-family:'Liberation Sans',sans-serif;transform:scaleX(1.0199);transform-origin:0 0;">Мовні</div>
<svg class="a" style="left:736px;top:286.3px;" width="27.600000000000023" height="2" viewBox="0 0 27.600000000000023 2"><path d="M0 1 l1.2 -1 l1.2 1 l1.2 -1 l1.2 1 l1.2 -1 l1.2 1 l1.2 -1 l1.2 1 l1.2 -1 l1.2 1 l1.2 -1 l1.2 1 l1.2 -1 l1.2 1 l1.2 -1 l1.2 1 l1.2 -1 l1.2 1 l1.2 -1 l1.2 1 l1.2 -1 l1.2 1" fill="none" stroke="#d9534f" stroke-width="0.75" opacity="0.9"/></svg>
<div class="a" style="left:730.1px;top:293.5px;width:3.7px;height:3.7px;background:#111;border-radius:50%"></div>
<div class="t" style="left:736.00px;top:290.34px;font-size:10.00px;color:#111;font-family:'Liberation Sans',sans-serif;transform:scaleX(0.9680);transform-origin:0 0;">Змішані</div>
<svg class="a" style="left:736px;top:299.6px;" width="35.299999999999955" height="2" viewBox="0 0 35.299999999999955 2"><path d="M0 1 l1.2 -1 l1.2 1 l1.2 -1 l1.2 1 l1.2 -1 l1.2 1 l1.2 -1 l1.2 1 l1.2 -1 l1.2 1 l1.2 -1 l1.2 1 l1.2 -1 l1.2 1 l1.2 -1 l1.2 1 l1.2 -1 l1.2 1 l1.2 -1 l1.2 1 l1.2 -1 l1.2 1 l1.2 -1 l1.2 1 l1.2 -1 l1.2 1 l1.2 -1 l1.2 1" fill="none" stroke="#d9534f" stroke-width="0.75" opacity="0.9"/></svg>
<div class="t" style="left:569.30px;top:307.74px;font-size:10.00px;color:#111;font-family:'Liberation Sans',sans-serif;transform:scaleX(0.9835);transform-origin:0 0;">Мова текстів</div>
<svg class="a" style="left:569.3px;top:317px;" width="24.700000000000045" height="2" viewBox="0 0 24.700000000000045 2"><path d="M0 1 l1.2 -1 l1.2 1 l1.2 -1 l1.2 1 l1.2 -1 l1.2 1 l1.2 -1 l1.2 1 l1.2 -1 l1.2 1 l1.2 -1 l1.2 1 l1.2 -1 l1.2 1 l1.2 -1 l1.2 1 l1.2 -1 l1.2 1 l1.2 -1 l1.2 1" fill="none" stroke="#d9534f" stroke-width="0.75" opacity="0.9"/></svg>
<svg class="a" style="left:597px;top:317px;" width="30.5" height="2" viewBox="0 0 30.5 2"><path d="M0 1 l1.2 -1 l1.2 1 l1.2 -1 l1.2 1 l1.2 -1 l1.2 1 l1.2 -1 l1.2 1 l1.2 -1 l1.2 1 l1.2 -1 l1.2 1 l1.2 -1 l1.2 1 l1.2 -1 l1.2 1 l1.2 -1 l1.2 1 l1.2 -1 l1.2 1 l1.2 -1 l1.2 1 l1.2 -1 l1.2 1" fill="none" stroke="#d9534f" stroke-width="0.75" opacity="0.9"/></svg>
<div class="a" style="left:730.1px;top:310.9px;width:3.7px;height:3.7px;background:#111;border-radius:50%"></div>
<div class="t" style="left:736.00px;top:307.74px;font-size:10.00px;color:#111;font-family:'Liberation Sans',sans-serif;transform:scaleX(0.9587);transform-origin:0 0;">Українська</div>
<svg class="a" style="left:736px;top:317px;" width="48" height="2" viewBox="0 0 48 2"><path d="M0 1 l1.2 -1 l1.2 1 l1.2 -1 l1.2 1 l1.2 -1 l1.2 1 l1.2 -1 l1.2 1 l1.2 -1 l1.2 1 l1.2 -1 l1.2 1 l1.2 -1 l1.2 1 l1.2 -1 l1.2 1 l1.2 -1 l1.2 1 l1.2 -1 l1.2 1 l1.2 -1 l1.2 1 l1.2 -1 l1.2 1 l1.2 -1 l1.2 1 l1.2 -1 l1.2 1 l1.2 -1 l1.2 1 l1.2 -1 l1.2 1 l1.2 -1 l1.2 1 l1.2 -1 l1.2 1 l1.2 -1 l1.2 1 l1.2 -1 l1.2 1" fill="none" stroke="#d9534f" stroke-width="0.75" opacity="0.9"/></svg>
<div class="a" style="left:730.1px;top:324.2px;width:3.7px;height:3.7px;background:#111;border-radius:50%"></div>
<div class="t" style="left:736.00px;top:321.04px;font-size:10.00px;color:#111;font-family:'Liberation Sans',sans-serif;transform:scaleX(0.9706);transform-origin:0 0;">Англійська і т. ін.</div>
<svg class="a" style="left:736px;top:330.3px;" width="48" height="2" viewBox="0 0 48 2"><path d="M0 1 l1.2 -1 l1.2 1 l1.2 -1 l1.2 1 l1.2 -1 l1.2 1 l1.2 -1 l1.2 1 l1.2 -1 l1.2 1 l1.2 -1 l1.2 1 l1.2 -1 l1.2 1 l1.2 -1 l1.2 1 l1.2 -1 l1.2 1 l1.2 -1 l1.2 1 l1.2 -1 l1.2 1 l1.2 -1 l1.2 1 l1.2 -1 l1.2 1 l1.2 -1 l1.2 1 l1.2 -1 l1.2 1 l1.2 -1 l1.2 1 l1.2 -1 l1.2 1 l1.2 -1 l1.2 1 l1.2 -1 l1.2 1 l1.2 -1 l1.2 1" fill="none" stroke="#d9534f" stroke-width="0.75" opacity="0.9"/></svg>
<svg class="a" style="left:787px;top:330.3px;" width="23.700000000000045" height="2" viewBox="0 0 23.700000000000045 2"><path d="M0 1 l1.2 -1 l1.2 1 l1.2 -1 l1.2 1 l1.2 -1 l1.2 1 l1.2 -1 l1.2 1 l1.2 -1 l1.2 1 l1.2 -1 l1.2 1 l1.2 -1 l1.2 1 l1.2 -1 l1.2 1 l1.2 -1 l1.2 1" fill="none" stroke="#d9534f" stroke-width="0.75" opacity="0.9"/></svg>
<div class="t" style="left:569.30px;top:338.94px;font-size:10.00px;color:#111;font-family:'Liberation Sans',sans-serif;font-weight:bold;transform:scaleX(0.8998);transform-origin:0 0;">“Паралельність”</div>
<svg class="a" style="left:572px;top:348.2px;" width="68" height="2" viewBox="0 0 68 2"><path d="M0 1 l1.2 -1 l1.2 1 l1.2 -1 l1.2 1 l1.2 -1 l1.2 1 l1.2 -1 l1.2 1 l1.2 -1 l1.2 1 l1.2 -1 l1.2 1 l1.2 -1 l1.2 1 l1.2 -1 l1.2 1 l1.2 -1 l1.2 1 l1.2 -1 l1.2 1 l1.2 -1 l1.2 1 l1.2 -1 l1.2 1 l1.2 -1 l1.2 1 l1.2 -1 l1.2 1 l1.2 -1 l1.2 1 l1.2 -1 l1.2 1 l1.2 -1 l1.2 1 l1.2 -1 l1.2 1 l1.2 -1 l1.2 1 l1.2 -1 l1.2 1 l1.2 -1 l1.2 1 l1.2 -1 l1.2 1 l1.2 -1 l1.2 1 l1.2 -1 l1.2 1 l1.2 -1 l1.2 1 l1.2 -1 l1.2 1 l1.2 -1 l1.2 1 l1.2 -1 l1.2 1" fill="none" stroke="#d9534f" stroke-width="0.75" opacity="0.9"/></svg>
<div class="a" style="left:730.1px;top:342.09999999999997px;width:3.7px;height:3.7px;background:#111;border-radius:50%"></div>
<div class="t" style="left:736.00px;top:338.94px;font-size:10.00px;color:#111;font-family:'Liberation Sans',sans-serif;font-weight:bold;transform:scaleX(0.9644);transform-origin:0 0;">Одномовні</div>
<svg class="a" style="left:736px;top:348.2px;" width="52.299999999999955" height="2" viewBox="0 0 52.299999999999955 2"><path d="M0 1 l1.2 -1 l1.2 1 l1.2 -1 l1.2 1 l1.2 -1 l1.2 1 l1.2 -1 l1.2 1 l1.2 -1 l1.2 1 l1.2 -1 l1.2 1 l1.2 -1 l1.2 1 l1.2 -1 l1.2 1 l1.2 -1 l1.2 1 l1.2 -1 l1.2 1 l1.2 -1 l1.2 1 l1.2 -1 l1.2 1 l1.2 -1 l1.2 1 l1.2 -1 l1.2 1 l1.2 -1 l1.2 1 l1.2 -1 l1.2 1 l1.2 -1 l1.2 1 l1.2 -1 l1.2 1 l1.2 -1 l1.2 1 l1.2 -1 l1.2 1 l1.2 -1 l1.2 1" fill="none" stroke="#d9534f" stroke-width="0.75" opacity="0.9"/></svg>
<div class="a" style="left:730.1px;top:355.4px;width:3.7px;height:3.7px;background:#111;border-radius:50%"></div>
<div class="t" style="left:736.00px;top:352.24px;font-size:10.00px;color:#111;font-family:'Liberation Sans',sans-serif;font-weight:bold;transform:scaleX(0.9630);transform-origin:0 0;">Двомовні</div>
<svg class="a" style="left:736px;top:361.5px;" width="45.700000000000045" height="2" viewBox="0 0 45.700000000000045 2"><path d="M0 1 l1.2 -1 l1.2 1 l1.2 -1 l1.2 1 l1.2 -1 l1.2 1 l1.2 -1 l1.2 1 l1.2 -1 l1.2 1 l1.2 -1 l1.2 1 l1.2 -1 l1.2 1 l1.2 -1 l1.2 1 l1.2 -1 l1.2 1 l1.2 -1 l1.2 1 l1.2 -1 l1.2 1 l1.2 -1 l1.2 1 l1.2 -1 l1.2 1 l1.2 -1 l1.2 1 l1.2 -1 l1.2 1 l1.2 -1 l1.2 1 l1.2 -1 l1.2 1 l1.2 -1 l1.2 1 l1.2 -1 l1.2 1" fill="none" stroke="#d9534f" stroke-width="0.75" opacity="0.9"/></svg>
<div class="a" style="left:730.1px;top:368.7px;width:3.7px;height:3.7px;background:#111;border-radius:50%"></div>
<div class="t" style="left:736.00px;top:365.54px;font-size:10.00px;color:#111;font-family:'Liberation Sans',sans-serif;font-weight:bold;transform:scaleX(0.9308);transform-origin:0 0;">Багатомовні</div>
<svg class="a" style="left:736px;top:374.8px;" width="57.299999999999955" height="2" viewBox="0 0 57.299999999999955 2"><path d="M0 1 l1.2 -1 l1.2 1 l1.2 -1 l1.2 1 l1.2 -1 l1.2 1 l1.2 -1 l1.2 1 l1.2 -1 l1.2 1 l1.2 -1 l1.2 1 l1.2 -1 l1.2 1 l1.2 -1 l1.2 1 l1.2 -1 l1.2 1 l1.2 -1 l1.2 1 l1.2 -1 l1.2 1 l1.2 -1 l1.2 1 l1.2 -1 l1.2 1 l1.2 -1 l1.2 1 l1.2 -1 l1.2 1 l1.2 -1 l1.2 1 l1.2 -1 l1.2 1 l1.2 -1 l1.2 1 l1.2 -1 l1.2 1 l1.2 -1 l1.2 1 l1.2 -1 l1.2 1 l1.2 -1 l1.2 1 l1.2 -1 l1.2 1" fill="none" stroke="#d9534f" stroke-width="0.75" opacity="0.9"/></svg>
<div class="t" style="left:569.30px;top:382.24px;font-size:10.00px;color:#111;font-family:'Liberation Sans',sans-serif;transform:scaleX(0.9852);transform-origin:0 0;">“Літературність”,</div>
<svg class="a" style="left:572px;top:391.5px;" width="66" height="2" viewBox="0 0 66 2"><path d="M0 1 l1.2 -1 l1.2 1 l1.2 -1 l1.2 1 l1.2 -1 l1.2 1 l1.2 -1 l1.2 1 l1.2 -1 l1.2 1 l1.2 -1 l1.2 1 l1.2 -1 l1.2 1 l1.2 -1 l1.2 1 l1.2 -1 l1.2 1 l1.2 -1 l1.2 1 l1.2 -1 l1.2 1 l1.2 -1 l1.2 1 l1.2 -1 l1.2 1 l1.2 -1 l1.2 1 l1.2 -1 l1.2 1 l1.2 -1 l1.2 1 l1.2 -1 l1.2 1 l1.2 -1 l1.2 1 l1.2 -1 l1.2 1 l1.2 -1 l1.2 1 l1.2 -1 l1.2 1 l1.2 -1 l1.2 1 l1.2 -1 l1.2 1 l1.2 -1 l1.2 1 l1.2 -1 l1.2 1 l1.2 -1 l1.2 1 l1.2 -1 l1.2 1" fill="none" stroke="#d9534f" stroke-width="0.75" opacity="0.9"/></svg>
<div class="t" style="left:569.30px;top:395.54px;font-size:10.00px;color:#111;font-family:'Liberation Sans',sans-serif;transform:scaleX(0.9773);transform-origin:0 0;">специфічність</div>
<svg class="a" style="left:569.3px;top:404.8px;" width="64.0" height="2" viewBox="0 0 64.0 2"><path d="M0 1 l1.2 -1 l1.2 1 l1.2 -1 l1.2 1 l1.2 -1 l1.2 1 l1.2 -1 l1.2 1 l1.2 -1 l1.2 1 l1.2 -1 l1.2 1 l1.2 -1 l1.2 1 l1.2 -1 l1.2 1 l1.2 -1 l1.2 1 l1.2 -1 l1.2 1 l1.2 -1 l1.2 1 l1.2 -1 l1.2 1 l1.2 -1 l1.2 1 l1.2 -1 l1.2 1 l1.2 -1 l1.2 1 l1.2 -1 l1.2 1 l1.2 -1 l1.2 1 l1.2 -1 l1.2 1 l1.2 -1 l1.2 1 l1.2 -1 l1.2 1 l1.2 -1 l1.2 1 l1.2 -1 l1.2 1 l1.2 -1 l1.2 1 l1.2 -1 l1.2 1 l1.2 -1 l1.2 1 l1.2 -1 l1.2 1" fill="none" stroke="#d9534f" stroke-width="0.75" opacity="0.9"/></svg>
<div class="a" style="left:730.1px;top:385.4px;width:3.7px;height:3.7px;background:#111;border-radius:50%"></div>
<div class="t" style="left:736.00px;top:382.24px;font-size:10.00px;color:#111;font-family:'Liberation Sans',sans-serif;transform:scaleX(0.9942);transform-origin:0 0;">Літературні</div>
<svg class="a" style="left:736px;top:391.5px;" width="52.299999999999955" height="2" viewBox="0 0 52.299999999999955 2"><path d="M0 1 l1.2 -1 l1.2 1 l1.2 -1 l1.2 1 l1.2 -1 l1.2 1 l1.2 -1 l1.2 1 l1.2 -1 l1.2 1 l1.2 -1 l1.2 1 l1.2 -1 l1.2 1 l1.2 -1 l1.2 1 l1.2 -1 l1.2 1 l1.2 -1 l1.2 1 l1.2 -1 l1.2 1 l1.2 -1 l1.2 1 l1.2 -1 l1.2 1 l1.2 -1 l1.2 1 l1.2 -1 l1.2 1 l1.2 -1 l1.2 1 l1.2 -1 l1.2 1 l1.2 -1 l1.2 1 l1.2 -1 l1.2 1 l1.2 -1 l1.2 1 l1.2 -1 l1.2 1" fill="none" stroke="#d9534f" stroke-width="0.75" opacity="0.9"/></svg>
<div class="a" style="left:730.1px;top:398.7px;width:3.7px;height:3.7px;background:#111;border-radius:50%"></div>
<div class="t" style="left:736.00px;top:395.54px;font-size:10.00px;color:#111;font-family:'Liberation Sans',sans-serif;transform:scaleX(1.0125);transform-origin:0 0;">Діалектні</div>
<svg class="a" style="left:736px;top:404.8px;" width="43.299999999999955" height="2" viewBox="0 0 43.299999999999955 2"><path d="M0 1 l1.2 -1 l1.2 1 l1.2 -1 l1.2 1 l1.2 -1 l1.2 1 l1.2 -1 l1.2 1 l1.2 -1 l1.2 1 l1.2 -1 l1.2 1 l1.2 -1 l1.2 1 l1.2 -1 l1.2 1 l1.2 -1 l1.2 1 l1.2 -1 l1.2 1 l1.2 -1 l1.2 1 l1.2 -1 l1.2 1 l1.2 -1 l1.2 1 l1.2 -1 l1.2 1 l1.2 -1 l1.2 1 l1.2 -1 l1.2 1 l1.2 -1 l1.2 1 l1.2 -1 l1.2 1" fill="none" stroke="#d9534f" stroke-width="0.75" opacity="0.9"/></svg>
<div class="a" style="left:730.1px;top:412.0px;width:3.7px;height:3.7px;background:#111;border-radius:50%"></div>
<div class="t" style="left:736.00px;top:408.84px;font-size:10.00px;color:#111;font-family:'Liberation Sans',sans-serif;transform:scaleX(1.0129);transform-origin:0 0;">Розмовні</div>
<svg class="a" style="left:736px;top:418.1px;" width="42.299999999999955" height="2" viewBox="0 0 42.299999999999955 2"><path d="M0 1 l1.2 -1 l1.2 1 l1.2 -1 l1.2 1 l1.2 -1 l1.2 1 l1.2 -1 l1.2 1 l1.2 -1 l1.2 1 l1.2 -1 l1.2 1 l1.2 -1 l1.2 1 l1.2 -1 l1.2 1 l1.2 -1 l1.2 1 l1.2 -1 l1.2 1 l1.2 -1 l1.2 1 l1.2 -1 l1.2 1 l1.2 -1 l1.2 1 l1.2 -1 l1.2 1 l1.2 -1 l1.2 1 l1.2 -1 l1.2 1 l1.2 -1 l1.2 1" fill="none" stroke="#d9534f" stroke-width="0.75" opacity="0.9"/></svg>
<div class="a" style="left:730.1px;top:425.4px;width:3.7px;height:3.7px;background:#111;border-radius:50%"></div>
<div class="t" style="left:736.00px;top:422.24px;font-size:10.00px;color:#111;font-family:'Liberation Sans',sans-serif;transform:scaleX(0.9960);transform-origin:0 0;">Термінологічні</div>
<svg class="a" style="left:736px;top:431.5px;" width="66.70000000000005" height="2" viewBox="0 0 66.70000000000005 2"><path d="M0 1 l1.2 -1 l1.2 1 l1.2 -1 l1.2 1 l1.2 -1 l1.2 1 l1.2 -1 l1.2 1 l1.2 -1 l1.2 1 l1.2 -1 l1.2 1 l1.2 -1 l1.2 1 l1.2 -1 l1.2 1 l1.2 -1 l1.2 1 l1.2 -1 l1.2 1 l1.2 -1 l1.2 1 l1.2 -1 l1.2 1 l1.2 -1 l1.2 1 l1.2 -1 l1.2 1 l1.2 -1 l1.2 1 l1.2 -1 l1.2 1 l1.2 -1 l1.2 1 l1.2 -1 l1.2 1 l1.2 -1 l1.2 1 l1.2 -1 l1.2 1 l1.2 -1 l1.2 1 l1.2 -1 l1.2 1 l1.2 -1 l1.2 1 l1.2 -1 l1.2 1 l1.2 -1 l1.2 1 l1.2 -1 l1.2 1 l1.2 -1 l1.2 1" fill="none" stroke="#d9534f" stroke-width="0.75" opacity="0.9"/></svg>
<div class="a" style="left:730.1px;top:438.7px;width:3.7px;height:3.7px;background:#111;border-radius:50%"></div>
<div class="t" style="left:736.00px;top:435.54px;font-size:10.00px;color:#111;font-family:'Liberation Sans',sans-serif;transform:scaleX(0.9790);transform-origin:0 0;">Змішані</div>
<svg class="a" style="left:736px;top:444.8px;" width="35.700000000000045" height="2" viewBox="0 0 35.700000000000045 2"><path d="M0 1 l1.2 -1 l1.2 1 l1.2 -1 l1.2 1 l1.2 -1 l1.2 1 l1.2 -1 l1.2 1 l1.2 -1 l1.2 1 l1.2 -1 l1.2 1 l1.2 -1 l1.2 1 l1.2 -1 l1.2 1 l1.2 -1 l1.2 1 l1.2 -1 l1.2 1 l1.2 -1 l1.2 1 l1.2 -1 l1.2 1 l1.2 -1 l1.2 1 l1.2 -1 l1.2 1" fill="none" stroke="#d9534f" stroke-width="0.75" opacity="0.9"/></svg>
<div class="t" style="left:569.30px;top:451.54px;font-size:10.00px;color:#111;font-family:'Liberation Sans',sans-serif;transform:scaleX(0.9234);transform-origin:0 0;">Жанр</div>
<div class="a" style="left:730.1px;top:454.7px;width:3.7px;height:3.7px;background:#111;border-radius:50%"></div>
<div class="t" style="left:736.00px;top:451.54px;font-size:10.00px;color:#111;font-family:'Liberation Sans',sans-serif;transform:scaleX(1.0073);transform-origin:0 0;">Літературні •Фольклорні</div>
<svg class="a" style="left:736px;top:460.8px;" width="52" height="2" viewBox="0 0 52 2"><path d="M0 1 l1.2 -1 l1.2 1 l1.2 -1 l1.2 1 l1.2 -1 l1.2 1 l1.2 -1 l1.2 1 l1.2 -1 l1.2 1 l1.2 -1 l1.2 1 l1.2 -1 l1.2 1 l1.2 -1 l1.2 1 l1.2 -1 l1.2 1 l1.2 -1 l1.2 1 l1.2 -1 l1.2 1 l1.2 -1 l1.2 1 l1.2 -1 l1.2 1 l1.2 -1 l1.2 1 l1.2 -1 l1.2 1 l1.2 -1 l1.2 1 l1.2 -1 l1.2 1 l1.2 -1 l1.2 1 l1.2 -1 l1.2 1 l1.2 -1 l1.2 1 l1.2 -1 l1.2 1" fill="none" stroke="#d9534f" stroke-width="0.75" opacity="0.9"/></svg>
<svg class="a" style="left:796px;top:460.8px;" width="53" height="2" viewBox="0 0 53 2"><path d="M0 1 l1.2 -1 l1.2 1 l1.2 -1 l1.2 1 l1.2 -1 l1.2 1 l1.2 -1 l1.2 1 l1.2 -1 l1.2 1 l1.2 -1 l1.2 1 l1.2 -1 l1.2 1 l1.2 -1 l1.2 1 l1.2 -1 l1.2 1 l1.2 -1 l1.2 1 l1.2 -1 l1.2 1 l1.2 -1 l1.2 1 l1.2 -1 l1.2 1 l1.2 -1 l1.2 1 l1.2 -1 l1.2 1 l1.2 -1 l1.2 1 l1.2 -1 l1.2 1 l1.2 -1 l1.2 1 l1.2 -1 l1.2 1 l1.2 -1 l1.2 1 l1.2 -1 l1.2 1 l1.2 -1 l1.2 1" fill="none" stroke="#d9534f" stroke-width="0.75" opacity="0.9"/></svg>
<div class="a" style="left:730.1px;top:468.0px;width:3.7px;height:3.7px;background:#111;border-radius:50%"></div>
<div class="t" style="left:736.00px;top:464.84px;font-size:10.00px;color:#111;font-family:'Liberation Sans',sans-serif;transform:scaleX(1.0090);transform-origin:0 0;">Драматичні •Публіцистичні</div>
<svg class="a" style="left:736px;top:474.1px;" width="52" height="2" viewBox="0 0 52 2"><path d="M0 1 l1.2 -1 l1.2 1 l1.2 -1 l1.2 1 l1.2 -1 l1.2 1 l1.2 -1 l1.2 1 l1.2 -1 l1.2 1 l1.2 -1 l1.2 1 l1.2 -1 l1.2 1 l1.2 -1 l1.2 1 l1.2 -1 l1.2 1 l1.2 -1 l1.2 1 l1.2 -1 l1.2 1 l1.2 -1 l1.2 1 l1.2 -1 l1.2 1 l1.2 -1 l1.2 1 l1.2 -1 l1.2 1 l1.2 -1 l1.2 1 l1.2 -1 l1.2 1 l1.2 -1 l1.2 1 l1.2 -1 l1.2 1 l1.2 -1 l1.2 1 l1.2 -1 l1.2 1" fill="none" stroke="#d9534f" stroke-width="0.75" opacity="0.9"/></svg>
<svg class="a" style="left:796px;top:474.1px;" width="65.70000000000005" height="2" viewBox="0 0 65.70000000000005 2"><path d="M0 1 l1.2 -1 l1.2 1 l1.2 -1 l1.2 1 l1.2 -1 l1.2 1 l1.2 -1 l1.2 1 l1.2 -1 l1.2 1 l1.2 -1 l1.2 1 l1.2 -1 l1.2 1 l1.2 -1 l1.2 1 l1.2 -1 l1.2 1 l1.2 -1 l1.2 1 l1.2 -1 l1.2 1 l1.2 -1 l1.2 1 l1.2 -1 l1.2 1 l1.2 -1 l1.2 1 l1.2 -1 l1.2 1 l1.2 -1 l1.2 1 l1.2 -1 l1.2 1 l1.2 -1 l1.2 1 l1.2 -1 l1.2 1 l1.2 -1 l1.2 1 l1.2 -1 l1.2 1 l1.2 -1 l1.2 1 l1.2 -1 l1.2 1 l1.2 -1 l1.2 1 l1.2 -1 l1.2 1 l1.2 -1 l1.2 1 l1.2 -1 l1.2 1" fill="none" stroke="#d9534f" stroke-width="0.75" opacity="0.9"/></svg>
<div class="t" style="left:569.30px;top:482.94px;font-size:10.00px;color:#111;font-family:'Liberation Sans',sans-serif;transform:scaleX(0.9726);transform-origin:0 0;">Розмітка</div>
<svg class="a" style="left:569.3px;top:492.2px;" width="39.0" height="2" viewBox="0 0 39.0 2"><path d="M0 1 l1.2 -1 l1.2 1 l1.2 -1 l1.2 1 l1.2 -1 l1.2 1 l1.2 -1 l1.2 1 l1.2 -1 l1.2 1 l1.2 -1 l1.2 1 l1.2 -1 l1.2 1 l1.2 -1 l1.2 1 l1.2 -1 l1.2 1 l1.2 -1 l1.2 1 l1.2 -1 l1.2 1 l1.2 -1 l1.2 1 l1.2 -1 l1.2 1 l1.2 -1 l1.2 1 l1.2 -1 l1.2 1 l1.2 -1 l1.2 1" fill="none" stroke="#d9534f" stroke-width="0.75" opacity="0.9"/></svg>
<div class="a" style="left:730.1px;top:486.09999999999997px;width:3.7px;height:3.7px;background:#111;border-radius:50%"></div>
<div class="t" style="left:736.00px;top:482.94px;font-size:10.00px;color:#111;font-family:'Liberation Sans',sans-serif;transform:scaleX(1.0028);transform-origin:0 0;">Розмічені</div>
<svg class="a" style="left:736px;top:492.2px;" width="44" height="2" viewBox="0 0 44 2"><path d="M0 1 l1.2 -1 l1.2 1 l1.2 -1 l1.2 1 l1.2 -1 l1.2 1 l1.2 -1 l1.2 1 l1.2 -1 l1.2 1 l1.2 -1 l1.2 1 l1.2 -1 l1.2 1 l1.2 -1 l1.2 1 l1.2 -1 l1.2 1 l1.2 -1 l1.2 1 l1.2 -1 l1.2 1 l1.2 -1 l1.2 1 l1.2 -1 l1.2 1 l1.2 -1 l1.2 1 l1.2 -1 l1.2 1 l1.2 -1 l1.2 1 l1.2 -1 l1.2 1 l1.2 -1 l1.2 1" fill="none" stroke="#d9534f" stroke-width="0.75" opacity="0.9"/></svg>
<div class="a" style="left:730.1px;top:499.4px;width:3.7px;height:3.7px;background:#111;border-radius:50%"></div>
<div class="t" style="left:736.00px;top:496.24px;font-size:10.00px;color:#111;font-family:'Liberation Sans',sans-serif;transform:scaleX(1.0055);transform-origin:0 0;">Нерозмічені</div>
<svg class="a" style="left:736px;top:505.5px;" width="56.299999999999955" height="2" viewBox="0 0 56.299999999999955 2"><path d="M0 1 l1.2 -1 l1.2 1 l1.2 -1 l1.2 1 l1.2 -1 l1.2 1 l1.2 -1 l1.2 1 l1.2 -1 l1.2 1 l1.2 -1 l1.2 1 l1.2 -1 l1.2 1 l1.2 -1 l1.2 1 l1.2 -1 l1.2 1 l1.2 -1 l1.2 1 l1.2 -1 l1.2 1 l1.2 -1 l1.2 1 l1.2 -1 l1.2 1 l1.2 -1 l1.2 1 l1.2 -1 l1.2 1 l1.2 -1 l1.2 1 l1.2 -1 l1.2 1 l1.2 -1 l1.2 1 l1.2 -1 l1.2 1 l1.2 -1 l1.2 1 l1.2 -1 l1.2 1 l1.2 -1 l1.2 1 l1.2 -1 l1.2 1" fill="none" stroke="#d9534f" stroke-width="0.75" opacity="0.9"/></svg>
<div class="t" style="left:569.30px;top:513.94px;font-size:10.00px;color:#111;font-family:'Liberation Sans',sans-serif;font-weight:bold;transform:scaleX(0.9498);transform-origin:0 0;">Характер розмітки</div>
<svg class="a" style="left:617px;top:523.2px;" width="39" height="2" viewBox="0 0 39 2"><path d="M0 1 l1.2 -1 l1.2 1 l1.2 -1 l1.2 1 l1.2 -1 l1.2 1 l1.2 -1 l1.2 1 l1.2 -1 l1.2 1 l1.2 -1 l1.2 1 l1.2 -1 l1.2 1 l1.2 -1 l1.2 1 l1.2 -1 l1.2 1 l1.2 -1 l1.2 1 l1.2 -1 l1.2 1 l1.2 -1 l1.2 1 l1.2 -1 l1.2 1 l1.2 -1 l1.2 1 l1.2 -1 l1.2 1 l1.2 -1 l1.2 1" fill="none" stroke="#d9534f" stroke-width="0.75" opacity="0.9"/></svg>
<div class="a" style="left:730.1px;top:517.1px;width:3.7px;height:3.7px;background:#111;border-radius:50%"></div>
<div class="t" style="left:736.00px;top:513.94px;font-size:10.00px;color:#111;font-family:'Liberation Sans',sans-serif;font-weight:bold;transform:scaleX(0.9466);transform-origin:0 0;">Морфологічні •Синтаксичні</div>
<svg class="a" style="left:736px;top:523.2px;" width="64" height="2" viewBox="0 0 64 2"><path d="M0 1 l1.2 -1 l1.2 1 l1.2 -1 l1.2 1 l1.2 -1 l1.2 1 l1.2 -1 l1.2 1 l1.2 -1 l1.2 1 l1.2 -1 l1.2 1 l1.2 -1 l1.2 1 l1.2 -1 l1.2 1 l1.2 -1 l1.2 1 l1.2 -1 l1.2 1 l1.2 -1 l1.2 1 l1.2 -1 l1.2 1 l1.2 -1 l1.2 1 l1.2 -1 l1.2 1 l1.2 -1 l1.2 1 l1.2 -1 l1.2 1 l1.2 -1 l1.2 1 l1.2 -1 l1.2 1 l1.2 -1 l1.2 1 l1.2 -1 l1.2 1 l1.2 -1 l1.2 1 l1.2 -1 l1.2 1 l1.2 -1 l1.2 1 l1.2 -1 l1.2 1 l1.2 -1 l1.2 1 l1.2 -1 l1.2 1" fill="none" stroke="#d9534f" stroke-width="0.75" opacity="0.9"/></svg>
<svg class="a" style="left:808px;top:523.2px;" width="57" height="2" viewBox="0 0 57 2"><path d="M0 1 l1.2 -1 l1.2 1 l1.2 -1 l1.2 1 l1.2 -1 l1.2 1 l1.2 -1 l1.2 1 l1.2 -1 l1.2 1 l1.2 -1 l1.2 1 l1.2 -1 l1.2 1 l1.2 -1 l1.2 1 l1.2 -1 l1.2 1 l1.2 -1 l1.2 1 l1.2 -1 l1.2 1 l1.2 -1 l1.2 1 l1.2 -1 l1.2 1 l1.2 -1 l1.2 1 l1.2 -1 l1.2 1 l1.2 -1 l1.2 1 l1.2 -1 l1.2 1 l1.2 -1 l1.2 1 l1.2 -1 l1.2 1 l1.2 -1 l1.2 1 l1.2 -1 l1.2 1 l1.2 -1 l1.2 1 l1.2 -1 l1.2 1" fill="none" stroke="#d9534f" stroke-width="0.75" opacity="0.9"/></svg>
<div class="a" style="left:730.1px;top:530.4px;width:3.7px;height:3.7px;background:#111;border-radius:50%"></div>
<div class="t" style="left:736.00px;top:527.24px;font-size:10.00px;color:#111;font-family:'Liberation Sans',sans-serif;font-weight:bold;transform:scaleX(0.9531);transform-origin:0 0;">Семантичні •Просодичні</div>
<svg class="a" style="left:736px;top:536.5px;" width="55" height="2" viewBox="0 0 55 2"><path d="M0 1 l1.2 -1 l1.2 1 l1.2 -1 l1.2 1 l1.2 -1 l1.2 1 l1.2 -1 l1.2 1 l1.2 -1 l1.2 1 l1.2 -1 l1.2 1 l1.2 -1 l1.2 1 l1.2 -1 l1.2 1 l1.2 -1 l1.2 1 l1.2 -1 l1.2 1 l1.2 -1 l1.2 1 l1.2 -1 l1.2 1 l1.2 -1 l1.2 1 l1.2 -1 l1.2 1 l1.2 -1 l1.2 1 l1.2 -1 l1.2 1 l1.2 -1 l1.2 1 l1.2 -1 l1.2 1 l1.2 -1 l1.2 1 l1.2 -1 l1.2 1 l1.2 -1 l1.2 1 l1.2 -1 l1.2 1" fill="none" stroke="#d9534f" stroke-width="0.75" opacity="0.9"/></svg>
<svg class="a" style="left:799px;top:536.5px;" width="52.700000000000045" height="2" viewBox="0 0 52.700000000000045 2"><path d="M0 1 l1.2 -1 l1.2 1 l1.2 -1 l1.2 1 l1.2 -1 l1.2 1 l1.2 -1 l1.2 1 l1.2 -1 l1.2 1 l1.2 -1 l1.2 1 l1.2 -1 l1.2 1 l1.2 -1 l1.2 1 l1.2 -1 l1.2 1 l1.2 -1 l1.2 1 l1.2 -1 l1.2 1 l1.2 -1 l1.2 1 l1.2 -1 l1.2 1 l1.2 -1 l1.2 1 l1.2 -1 l1.2 1 l1.2 -1 l1.2 1 l1.2 -1 l1.2 1 l1.2 -1 l1.2 1 l1.2 -1 l1.2 1 l1.2 -1 l1.2 1 l1.2 -1 l1.2 1" fill="none" stroke="#d9534f" stroke-width="0.75" opacity="0.9"/></svg></div></div>
<svg class="a" style="left:724px;top:218px;" width="7" height="10" viewBox="0 0 7 10"><path d="M0.6 0.6 V8.2 L2.4 6.6 L3.7 9.4 L4.9 8.9 L3.7 6.1 L6.2 6.1Z" fill="#fff" stroke="#444" stroke-width="0.9"/></svg>
<div class="a" style="left:5px;top:571px;width:944px;height:13px;background:#f1f1f1;border-top:1px solid #e2e2e2"></div>
<div class="t" style="left:8.70px;top:573.57px;font-size:7.60px;color:#666666;font-family:'Liberation Sans',sans-serif;transform:scaleX(0.8028);transform-origin:0 0;">Слайд 4 из 17</div>
<svg class="a" style="left:58.5px;top:573px;" width="9" height="9" viewBox="0 0 9 9"><rect x="0.5" y="0.5" width="6" height="8" fill="none" stroke="#777" stroke-width="0.8"/><path d="M3.5 5 L5 7 L8.5 1.5" fill="none" stroke="#777" stroke-width="0.9"/></svg>
<div class="t" style="left:75.40px;top:573.57px;font-size:7.60px;color:#666666;font-family:'Liberation Sans',sans-serif;transform:scaleX(0.8470);transform-origin:0 0;">русский</div>
<svg class="a" style="left:651.5px;top:573px;" width="7" height="8" viewBox="0 0 7 8"><path d="M3.5 0.5 L6 3 H4.5 V5 H2.5 V3 H1Z M0.5 7.5 H6.5" fill="none" stroke="#a0a0a0" stroke-width="0.8"/></svg>
<div class="t" style="left:661.20px;top:573.57px;font-size:7.60px;color:#666666;font-family:'Liberation Sans',sans-serif;transform:scaleX(0.8256);transform-origin:0 0;">Заметки</div>
<svg class="a" style="left:695.5px;top:573px;" width="8" height="8" viewBox="0 0 8 8"><path d="M0.5 0.5 H7.5 V5.5 H4 L2 7.5 V5.5 H0.5Z" fill="#7a7a7a"/></svg>
<div class="t" style="left:704.60px;top:573.57px;font-size:7.60px;color:#666666;font-family:'Liberation Sans',sans-serif;transform:scaleX(0.8523);transform-origin:0 0;">Примечания</div>
<div class="a" style="left:752.4px;top:571.5px;width:19.4px;height:12.5px;background:#d9d9d9"></div>
<svg class="a" style="left:757.5px;top:573.5px;" width="9" height="8" viewBox="0 0 9 8"><rect x="0.5" y="0.5" width="8" height="7" fill="none" stroke="#9a9a9a" stroke-width="0.8"/><path d="M3 0.5 V7.5 M3 4 H8.5" stroke="#9a9a9a" stroke-width="0.7"/></svg>
<svg class="a" style="left:777.5px;top:573.5px;" width="9" height="8" viewBox="0 0 9 8"><rect x="0.5" y="0.5" width="3" height="2.5" fill="none" stroke="#9a9a9a" stroke-width="0.7"/><rect x="5.5" y="0.5" width="3" height="2.5" fill="none" stroke="#9a9a9a" stroke-width="0.7"/><rect x="0.5" y="5" width="3" height="2.5" fill="none" stroke="#9a9a9a" stroke-width="0.7"/><rect x="5.5" y="5" width="3" height="2.5" fill="none" stroke="#9a9a9a" stroke-width="0.7"/></svg>
<svg class="a" style="left:797.5px;top:573.5px;" width="9" height="8" viewBox="0 0 9 8"><path d="M0.5 0.5 H4 V7.5 H0.5Z M5 0.5 H8.5 V7.5 H5Z" fill="#b5b5b5" stroke="#9a9a9a" stroke-width="0.5"/></svg>
<svg class="a" style="left:817.5px;top:573.5px;" width="9" height="9" viewBox="0 0 9 9"><rect x="0.5" y="0.5" width="8" height="5" fill="none" stroke="#9a9a9a" stroke-width="0.8"/><path d="M4.5 5.5 V8.5 M2.5 8.5 H6.5" stroke="#9a9a9a" stroke-width="0.8"/></svg>
<div class="a" style="left:835.5px;top:577px;width:5px;height:1px;background:#8a8a8a"></div>
<div class="a" style="left:844px;top:577.3px;width:61px;height:0.8px;background:#9a9a9a"></div>
<div class="a" style="left:867.5px;top:573.5px;width:2px;height:8px;background:#777"></div>
<div class="a" style="left:904.5px;top:577px;width:6px;height:1px;background:#8a8a8a"></div>
<div class="a" style="left:907px;top:574.5px;width:1px;height:6px;background:#8a8a8a"></div>
<div class="t" style="left:918.60px;top:573.91px;font-size:7.20px;color:#666666;font-family:'Liberation Sans',sans-serif;transform:scaleX(0.7494);transform-origin:0 0;">88%</div>
<svg class="a" style="left:937.5px;top:573px;" width="8" height="8" viewBox="0 0 8 8"><rect x="0.5" y="0.5" width="7" height="7" fill="none" stroke="#a0a0a0" stroke-width="0.8"/><rect x="2.5" y="2.5" width="3" height="3" fill="none" stroke="#a0a0a0" stroke-width="0.7"/></svg>
<div class="t" style="left:889.30px;top:564.76px;font-size:16.00px;color:rgba(162,162,162,0.82);font-family:'Liberation Sans',sans-serif;transform:scaleX(0.9657);transform-origin:0 0;-webkit-text-stroke:0;">Активация Windows</div>
<div class="t" style="left:889.30px;top:585.31px;font-size:10.50px;color:rgba(162,162,162,0.82);font-family:'Liberation Sans',sans-serif;transform:scaleX(1.0494);transform-origin:0 0;-webkit-text-stroke:0;">Чтобы активировать Windows, перейдите в раздел</div>
<div class="t" style="left:889.30px;top:601.61px;font-size:10.50px;color:rgba(162,162,162,0.82);font-family:'Liberation Sans',sans-serif;transform:scaleX(1.0551);transform-origin:0 0;-webkit-text-stroke:0;">&quot;Параметры&quot;.</div>
<div class="a" style="left:1013.5px;top:104.8px;width:131.9px;height:76.8px;background:linear-gradient(180deg,#e4f28a 0%,#b9e04e 30%,#8fd62c 50%,#b9e04e 70%,#e4f28a 100%)"></div>
<div class="a" style="left:1013.5px;top:104.8px;width:131.9px;height:3.3px;background:#e2f183"></div>
<div class="a" style="left:1013.5px;top:178.3px;width:131.9px;height:3.3px;background:#e2f183"></div>
<svg class="a" style="left:1016.8px;top:108.1px;overflow:hidden" width="125.3" height="70.2" viewBox="0 0 125.3 70.2"><defs><linearGradient id="yw" x1="0" y1="0" x2="1" y2="0"><stop offset="0" stop-color="#6a6462"/><stop offset="0.3" stop-color="#8e8886"/><stop offset="0.6" stop-color="#b5b1ae"/><stop offset="1" stop-color="#d2cfcd"/></linearGradient>
<radialGradient id="yf" cx="0.45" cy="0.45" r="0.6"><stop offset="0" stop-color="#b3a097"/><stop offset="0.6" stop-color="#9a8880"/><stop offset="1" stop-color="#6c5c56"/></radialGradient>
<filter id="yb"><feGaussianBlur stdDeviation="0.8"/></filter></defs>
<rect width="125.3" height="70.2" fill="url(#yw)"/>
<rect width="125.3" height="70.2" fill="#000" opacity="0.08"/>
<path d="M86 4 L123 1 L123 11 L88 14Z" fill="#e6e6e6" filter="url(#yb)"/>
<g filter="url(#yb)">
<path d="M14 70.2 C16 58 24 52 40 50 L58 49 L78 49 C92 50 100 56 104 70.2Z" fill="#33363c"/>
<path d="M70 49 C84 49 96 53 101 60 L104 70.2 L72 70.2Z" fill="#5a606c"/>
<path d="M56 49 L66 58 L74 49Z" fill="#c9c4c0"/>
<path d="M42 14 C42 5 48 1 58 1 C70 1 76 6 76 16 L76 30 C76 46 68 54 59 54 C49 54 42 46 42 30Z" fill="url(#yf)"/>
<path d="M42 17 C41 6 47 0 58 0 C70 0 77 5 77 17 C73 10 67 8 59 8 C51 8 45 10 42 17Z" fill="#2b2826"/>
<path d="M43 34 C45 47 51 54 59 54 C67 54 73 47 75 34 C72 40 68 43 59 43 C50 43 46 40 43 34Z" fill="#4e3f3a" opacity="0.9"/>
<path d="M47 21 Q51 19 56 21 M62 21 Q67 19 71 21" stroke="#2e2624" stroke-width="2" fill="none"/>
<path d="M48 25 H55 M63 25 H70" stroke="#5a4a44" stroke-width="1.4"/>
<path d="M58 26 L57 35 L61 35" stroke="#c2aea4" stroke-width="1.6" fill="none"/>
<path d="M53 40 Q59 38 65 40" stroke="#3a2e2a" stroke-width="1.6" fill="none"/>
</g></svg>
<div class="a" style="left:1016.8px;top:165.5px;width:63.7px;height:12.8px;background:rgba(35,35,35,0.72)"></div>
<div class="t" style="left:1020.00px;top:166.90px;font-size:9.10px;color:#f2f2f2;font-family:'Liberation Sans',sans-serif;transform:scaleX(1.0403);transform-origin:0 0;">Yan Kapranov</div>
<div class="a" style="left:1017px;top:183.3px;width:126.3px;height:72px;background:#222222"></div>
<div class="a" style="left:1048px;top:186.7px;width:62.4px;height:52px;background:#d21d5b"></div>
<div class="t" style="left:1067.58px;top:202.77px;font-size:33.00px;color:#ffffff;font-family:'Liberation Sans',sans-serif;-webkit-text-stroke:1.1px #fff;">N</div>
<div class="a" style="left:1017.3px;top:238.5px;width:98.7px;height:15px;background:rgba(38,38,38,0.92)"></div>
<svg class="a" style="left:1019.6px;top:239.7px;" width="10.5" height="11.5" viewBox="0 0 10.5 11.5"><rect x="3" y="0.8" width="4.4" height="7" rx="2.2" fill="#d94b57"/><path d="M1.3 5.8 A3.9 3.9 0 0 0 9.1 5.8 M5.2 9.7 V11.2" fill="none" stroke="#d94b57" stroke-width="1.1"/><path d="M9.8 1.2 L1 10.8" stroke="#f2a0a6" stroke-width="1.2"/></svg>
<div class="t" style="left:1035.00px;top:241.91px;font-size:9.20px;color:#e9e9e9;font-family:'Liberation Sans',sans-serif;transform:scaleX(1.0214);transform-origin:0 0;">Наталя Іваницька</div>
<div class="a" style="left:1016px;top:258.3px;width:126.3px;height:70px;background:#222222"></div>
<svg class="a" style="left:1047.6px;top:261.8px;overflow:hidden" width="63.5" height="51.5" viewBox="0 0 63.5 51.5"><defs><filter id="ob"><feGaussianBlur stdDeviation="0.9"/></filter>
<radialGradient id="of" cx="0.45" cy="0.4" r="0.65"><stop offset="0" stop-color="#dcb7a6"/><stop offset="0.7" stop-color="#c69a88"/><stop offset="1" stop-color="#9c7364"/></radialGradient></defs>
<rect width="63.5" height="51.5" fill="#c9d1cb"/>
<rect x="55" y="0" width="8.5" height="51.5" fill="#e6d0c8"/><rect x="57" y="0" width="3" height="51.5" fill="#d9b5aa"/>
<g filter="url(#ob)">
<path d="M6 48 C4 30 5 12 14 5 C22 0 36 0 42 6 C50 14 50 34 48 48Z" fill="#2a2220"/>
<path d="M13 18 C13 9 20 5 28 5 C37 5 41 10 41 20 L41 32 C41 42 35 47 27 47 C19 47 13 41 13 31Z" fill="url(#of)"/>
<path d="M12 16 C16 7 24 4 32 5 C38 6 42 12 42 20 C36 12 30 10 22 11 C17 12 14 14 12 16Z" fill="#2a2220"/>
<rect x="13" y="40" width="3" height="5" fill="#f0f0f0"/><rect x="45" y="38" width="3" height="6" fill="#f0f0f0"/>
<path d="M0 51.5 C6 46 16 45 27 47 C40 45 50 47 58 51.5Z" fill="#3b302b"/>
</g></svg>
<div class="a" style="left:1017.3px;top:313.5px;width:98.7px;height:15px;background:rgba(38,38,38,0.92)"></div>
<svg class="a" style="left:1019.6px;top:314.7px;" width="10.5" height="11.5" viewBox="0 0 10.5 11.5"><rect x="3" y="0.8" width="4.4" height="7" rx="2.2" fill="#d94b57"/><path d="M1.3 5.8 A3.9 3.9 0 0 0 9.1 5.8 M5.2 9.7 V11.2" fill="none" stroke="#d94b57" stroke-width="1.1"/><path d="M9.8 1.2 L1 10.8" stroke="#f2a0a6" stroke-width="1.2"/></svg>
<div class="t" style="left:1034.60px;top:316.81px;font-size:9.20px;color:#e9e9e9;font-family:'Liberation Sans',sans-serif;transform:scaleX(1.0507);transform-origin:0 0;">Ольга Осаульчик</div>
<div class="a" style="left:1016px;top:333px;width:126.3px;height:70.5px;background:#222222"></div>
<div class="a" style="left:1047.6px;top:336.5px;width:62.9px;height:54.5px;background:#fbfbfb"></div>
<svg class="a" style="left:1050px;top:341px;" width="58" height="50" viewBox="0 0 58 50"><defs><clipPath id="hc"><path d="M29 49 C20 42 1 30 1 15 C1 6 8 1 15 1 C21 1 26 4 29 9 C32 4 37 1 43 1 C50 1 57 6 57 15 C57 30 38 42 29 49Z"/></clipPath>
<linearGradient id="hb" x1="0" y1="0" x2="0" y2="1"><stop offset="0" stop-color="#4fb3f0"/><stop offset="1" stop-color="#1f7fd0"/></linearGradient>
<linearGradient id="hy" x1="0" y1="0" x2="0" y2="1"><stop offset="0" stop-color="#ffe94a"/><stop offset="1" stop-color="#f0c400"/></linearGradient></defs>
<g clip-path="url(#hc)"><rect x="0" y="0" width="58" height="24" fill="url(#hb)"/><rect x="0" y="24" width="58" height="26" fill="url(#hy)"/></g>
<path d="M9 8 Q14 4 20 6" stroke="#fff" stroke-width="2" fill="none" opacity=".7"/><path d="M40 7 Q46 5 50 9" stroke="#fff" stroke-width="1.6" fill="none" opacity=".6"/></svg>
<div class="a" style="left:1017.3px;top:388.5px;width:116px;height:15px;background:rgba(38,38,38,0.92)"></div>
<svg class="a" style="left:1019.6px;top:389.7px;" width="10.5" height="11.5" viewBox="0 0 10.5 11.5"><rect x="3" y="0.8" width="4.4" height="7" rx="2.2" fill="#d94b57"/><path d="M1.3 5.8 A3.9 3.9 0 0 0 9.1 5.8 M5.2 9.7 V11.2" fill="none" stroke="#d94b57" stroke-width="1.1"/><path d="M9.8 1.2 L1 10.8" stroke="#f2a0a6" stroke-width="1.2"/></svg>
<div class="t" style="left:1034.60px;top:391.51px;font-size:9.20px;color:#e9e9e9;font-family:'Liberation Sans',sans-serif;transform:scaleX(1.0537);transform-origin:0 0;">Віолета Нечипоренко</div>
<div class="a" style="left:1016px;top:408.3px;width:126.3px;height:70px;background:#222222"></div>
<svg class="a" style="left:1053.6px;top:408.3px;overflow:hidden" width="52.1" height="54.5" viewBox="0 0 52.1 54.5"><defs><filter id="lb"><feGaussianBlur stdDeviation="0.9"/></filter>
<linearGradient id="lw" x1="0" y1="0" x2="0" y2="1"><stop offset="0" stop-color="#f2cfb2"/><stop offset="0.4" stop-color="#ecbf9f"/><stop offset="0.45" stop-color="#f5dcc6"/><stop offset="1" stop-color="#f0d2ba"/></linearGradient></defs>
<rect width="52.1" height="54.5" fill="url(#lw)"/>
<g filter="url(#lb)">
<rect x="45" y="14" width="7.1" height="40" fill="#de7a44"/>
<path d="M20 54.5 C18 40 19 24 30 20 C40 18 46 26 45 54.5Z" fill="#6b3422"/>
<path d="M24 30 C24 24 28 22 33 22 C38 22 42 25 42 30 L42 38 C42 44 38 47 33 47 C28 47 24 44 24 38Z" fill="#e6bba4"/>
<path d="M23 29 C25 22 30 20 34 20 C39 20 43 24 43 29 C39 26 34 25 28 26Z" fill="#6b3422"/>
<rect x="26" y="45" width="15" height="9.5" fill="#d8dfe3"/>
<path d="M8 54.5 C12 48 18 46 24 46 L24 54.5Z" fill="#3a3a3a"/><path d="M41 46 C46 47 50 50 52 54.5 L41 54.5Z" fill="#555"/>
</g></svg>
<div class="a" style="left:1017.3px;top:463.5px;width:98.7px;height:15px;background:rgba(38,38,38,0.92)"></div>
<svg class="a" style="left:1019.6px;top:464.7px;" width="10.5" height="11.5" viewBox="0 0 10.5 11.5"><rect x="3" y="0.8" width="4.4" height="7" rx="2.2" fill="#d94b57"/><path d="M1.3 5.8 A3.9 3.9 0 0 0 9.1 5.8 M5.2 9.7 V11.2" fill="none" stroke="#d94b57" stroke-width="1.1"/><path d="M9.8 1.2 L1 10.8" stroke="#f2a0a6" stroke-width="1.2"/></svg>
<div class="t" style="left:1034.60px;top:466.21px;font-size:9.20px;color:#e9e9e9;font-family:'Liberation Sans',sans-serif;transform:scaleX(1.0323);transform-origin:0 0;">Liliia Tereshchenko</div>
<div class="a" style="left:1016px;top:483px;width:126.3px;height:70px;background:#222222"></div>
<div class="t" style="left:1024.00px;top:512.20px;font-size:12.40px;color:#ffffff;font-family:'Liberation Sans',sans-serif;font-weight:bold;transform:scaleX(1.0609);transform-origin:0 0;">Oleksandr  Yero...</div>
<div class="a" style="left:1018px;top:538.6px;width:102px;height:14.2px;background:rgba(38,38,38,0.92)"></div>
<svg class="a" style="left:1019.6px;top:539.5px;" width="10.5" height="11.5" viewBox="0 0 10.5 11.5"><rect x="3" y="0.8" width="4.4" height="7" rx="2.2" fill="#d94b57"/><path d="M1.3 5.8 A3.9 3.9 0 0 0 9.1 5.8 M5.2 9.7 V11.2" fill="none" stroke="#d94b57" stroke-width="1.1"/><path d="M9.8 1.2 L1 10.8" stroke="#f2a0a6" stroke-width="1.2"/></svg>
<div class="t" style="left:1034.60px;top:542.01px;font-size:9.20px;color:#e9e9e9;font-family:'Liberation Sans',sans-serif;transform:scaleX(1.0574);transform-origin:0 0;">Oleksandr Yeromin</div>
<div class="a" style="left:0px;top:643px;width:1200px;height:32px;background:#1d2127"></div>
<svg class="a" style="left:8px;top:648.5px;" width="21" height="20" viewBox="0 0 21 20"><path d="M0 2.8 L9.3 1.5 V9.5 H0Z M10.5 1.3 L21 0 V9.5 H10.5Z M0 10.7 H9.3 V18.7 L0 17.4Z M10.5 10.7 H21 V20 L10.5 18.7Z" fill="#ffffff"/></svg>
<div class="a" style="left:40.7px;top:644px;width:46.0px;height:29.5px;background:#3c3d40;border:1px solid #56575a"></div>
<div class="a" style="left:136px;top:644px;width:45.30000000000001px;height:29.5px;background:#3c3d40;border:1px solid #56575a"></div>
<div class="a" style="left:182.9px;top:644px;width:45.79999999999998px;height:29.5px;background:#3c3d40;border:1px solid #56575a"></div>
<div class="a" style="left:230.7px;top:644px;width:45.30000000000001px;height:29.5px;background:#3c3d40;border:1px solid #56575a"></div>
<div class="a" style="left:278px;top:644px;width:46px;height:29.5px;background:#676767;border:1px solid #9c9c9c"></div>
<svg class="a" style="left:50.5px;top:648.5px;" width="23" height="20" viewBox="0 0 23 20"><path d="M0.5 1.5 H8 L10 3.5 H22.5 V18.5 H0.5Z" fill="#f5cf6a"/><path d="M0.5 5 H22.5 V18.5 H0.5Z" fill="#fbe08e"/><path d="M5 11 H18 V19.5 H15 V14.5 H8 V19.5 H5Z" fill="#2f9ee3"/></svg>
<svg class="a" style="left:98.5px;top:646.5px;" width="24" height="25" viewBox="0 0 24 25"><defs><radialGradient id="ff" cx="0.6" cy="0.2" r="0.9"><stop offset="0" stop-color="#ffe34a"/><stop offset="0.45" stop-color="#ff8a1f"/><stop offset="0.8" stop-color="#f5384a"/><stop offset="1" stop-color="#c21f6b"/></radialGradient></defs>
<path d="M12 24.5 C5 24.5 0.5 19 0.5 13 C0.5 9 2.5 6 4 5 C4 7 5 8 6 8.5 C7 5 10 3 12 2 C13.5 1 16 0.5 17 0 C16 2 16.5 4 18 5.5 C21 8 23.5 10.5 23.5 14 C23.5 20 18.5 24.5 12 24.5Z" fill="url(#ff)"/>
<circle cx="12" cy="14" r="5.3" fill="#7a3fd1"/><circle cx="11" cy="12.8" r="3" fill="#9b5cf0"/></svg>
<svg class="a" style="left:146.5px;top:648px;" width="24" height="22" viewBox="0 0 24 22"><circle cx="12.5" cy="11" r="10.5" fill="#d22a20"/><circle cx="12.5" cy="11" r="7.5" fill="#f3f3f3"/><path d="M16.5 7 A5 5 0 1 0 16.5 15" fill="none" stroke="#d22a20" stroke-width="2.4"/><path d="M1 17 L10 6 L12 8 L5 20Z" fill="#f0d2b8"/><path d="M9 7 L13 3 L14 4 L11 9Z" fill="#2c5aa0"/></svg>
<svg class="a" style="left:193px;top:646.5px;" width="26" height="26" viewBox="0 0 26 26"><circle cx="12.5" cy="12.5" r="12" fill="#db4437"/>
<path d="M12.5 12.5 L2.1 6.5 A12 12 0 0 0 9 24 Z" fill="#0f9d58"/>
<path d="M12.5 12.5 L9 24 A12 12 0 0 0 24.5 12.5 L22.9 6.5Z" fill="#f4c20d"/>
<path d="M12.5 12.5 L22.9 6.5 A12 12 0 0 0 2.1 6.5Z" fill="#db4437"/>
<circle cx="12.5" cy="12.5" r="5.5" fill="#fff"/><circle cx="12.5" cy="12.5" r="4.3" fill="#4285f4"/>
<circle cx="19" cy="19.5" r="6" fill="#c2185b"/><text x="16.6" y="22.5" font-size="8" font-family="Liberation Sans" fill="#fff">N</text></svg>
<svg class="a" style="left:240px;top:648px;" width="26" height="22" viewBox="0 0 26 22"><rect x="6" y="0" width="19.5" height="22" rx="1.5" fill="#2b7cd3"/><rect x="6" y="0" width="19.5" height="5.5" fill="#41a5ee"/><rect x="6" y="11" width="19.5" height="5.5" fill="#185abd"/><rect x="6" y="16.5" width="19.5" height="5.5" fill="#103f91"/><rect x="0" y="6" width="14.5" height="10.5" rx="1.2" fill="#185abd"/><text x="1.8" y="14.5" font-size="8.5" font-weight="bold" font-family="Liberation Sans" fill="#fff">W</text></svg>
<svg class="a" style="left:288.5px;top:647.3px;" width="23.5" height="23.5" viewBox="0 0 23.5 23.5"><rect x="0" y="0" width="23.5" height="23.5" rx="7" fill="#4a8cf0"/><rect x="4.5" y="8" width="10" height="8" rx="1.8" fill="#fff"/><path d="M15.3 10.8 L19 8.3 V15.7 L15.3 13.2Z" fill="#fff"/></svg>
<svg class="a" style="left:1021.5px;top:657px;" width="6" height="3.5" viewBox="0 0 6 3.5"><path d="M0 3.5 L3 0 L6 3.5Z" fill="#ffffff"/></svg>
<svg class="a" style="left:1038.5px;top:653.5px;" width="11" height="11" viewBox="0 0 11 11"><path d="M1 10 A9 9 0 0 1 10 1 M3.5 10 A6.5 6.5 0 0 1 10 3.5 M6 10 A4 4 0 0 1 10 6" fill="none" stroke="#e8e8e8" stroke-width="1.1"/><circle cx="9.5" cy="9.8" r="1.1" fill="#fff"/></svg>
<svg class="a" style="left:1055.5px;top:653.5px;" width="14" height="11" viewBox="0 0 14 11"><path d="M0.8 3.8 H3.3 L6.8 0.8 V10.2 L3.3 7.2 H0.8Z" fill="none" stroke="#e8e8e8" stroke-width="1"/><path d="M8.7 3.3 A3 3 0 0 1 8.7 7.7 M10.7 1.8 A5.2 5.2 0 0 1 10.7 9.2 M12.5 0.5 A7.5 7.5 0 0 1 12.5 10.5" fill="none" stroke="#e8e8e8" stroke-width="1"/></svg>
<div class="t" style="left:1076.70px;top:654.71px;font-size:9.20px;color:#f0f0f0;font-family:'Liberation Sans',sans-serif;transform:scaleX(0.9029);transform-origin:0 0;">ENG</div>
<div class="t" style="left:1115.80px;top:647.21px;font-size:9.20px;color:#f0f0f0;font-family:'Liberation Sans',sans-serif;transform:scaleX(0.9208);transform-origin:0 0;">10:27</div>
<div class="t" style="left:1105.80px;top:661.91px;font-size:9.20px;color:#f0f0f0;font-family:'Liberation Sans',sans-serif;transform:scaleX(0.9165);transform-origin:0 0;">18.10.2022</div>
<svg class="a" style="left:1163px;top:652.5px;" width="14" height="13" viewBox="0 0 14 13"><path d="M0.6 0.6 H12.9 V9.6 H5 L2 12.4 V9.6 H0.6Z" fill="none" stroke="#f0f0f0" stroke-width="1.1"/><circle cx="10.5" cy="9.5" r="2" fill="#1d2127" stroke="#f0f0f0" stroke-width="0.9"/></svg></body></html>
